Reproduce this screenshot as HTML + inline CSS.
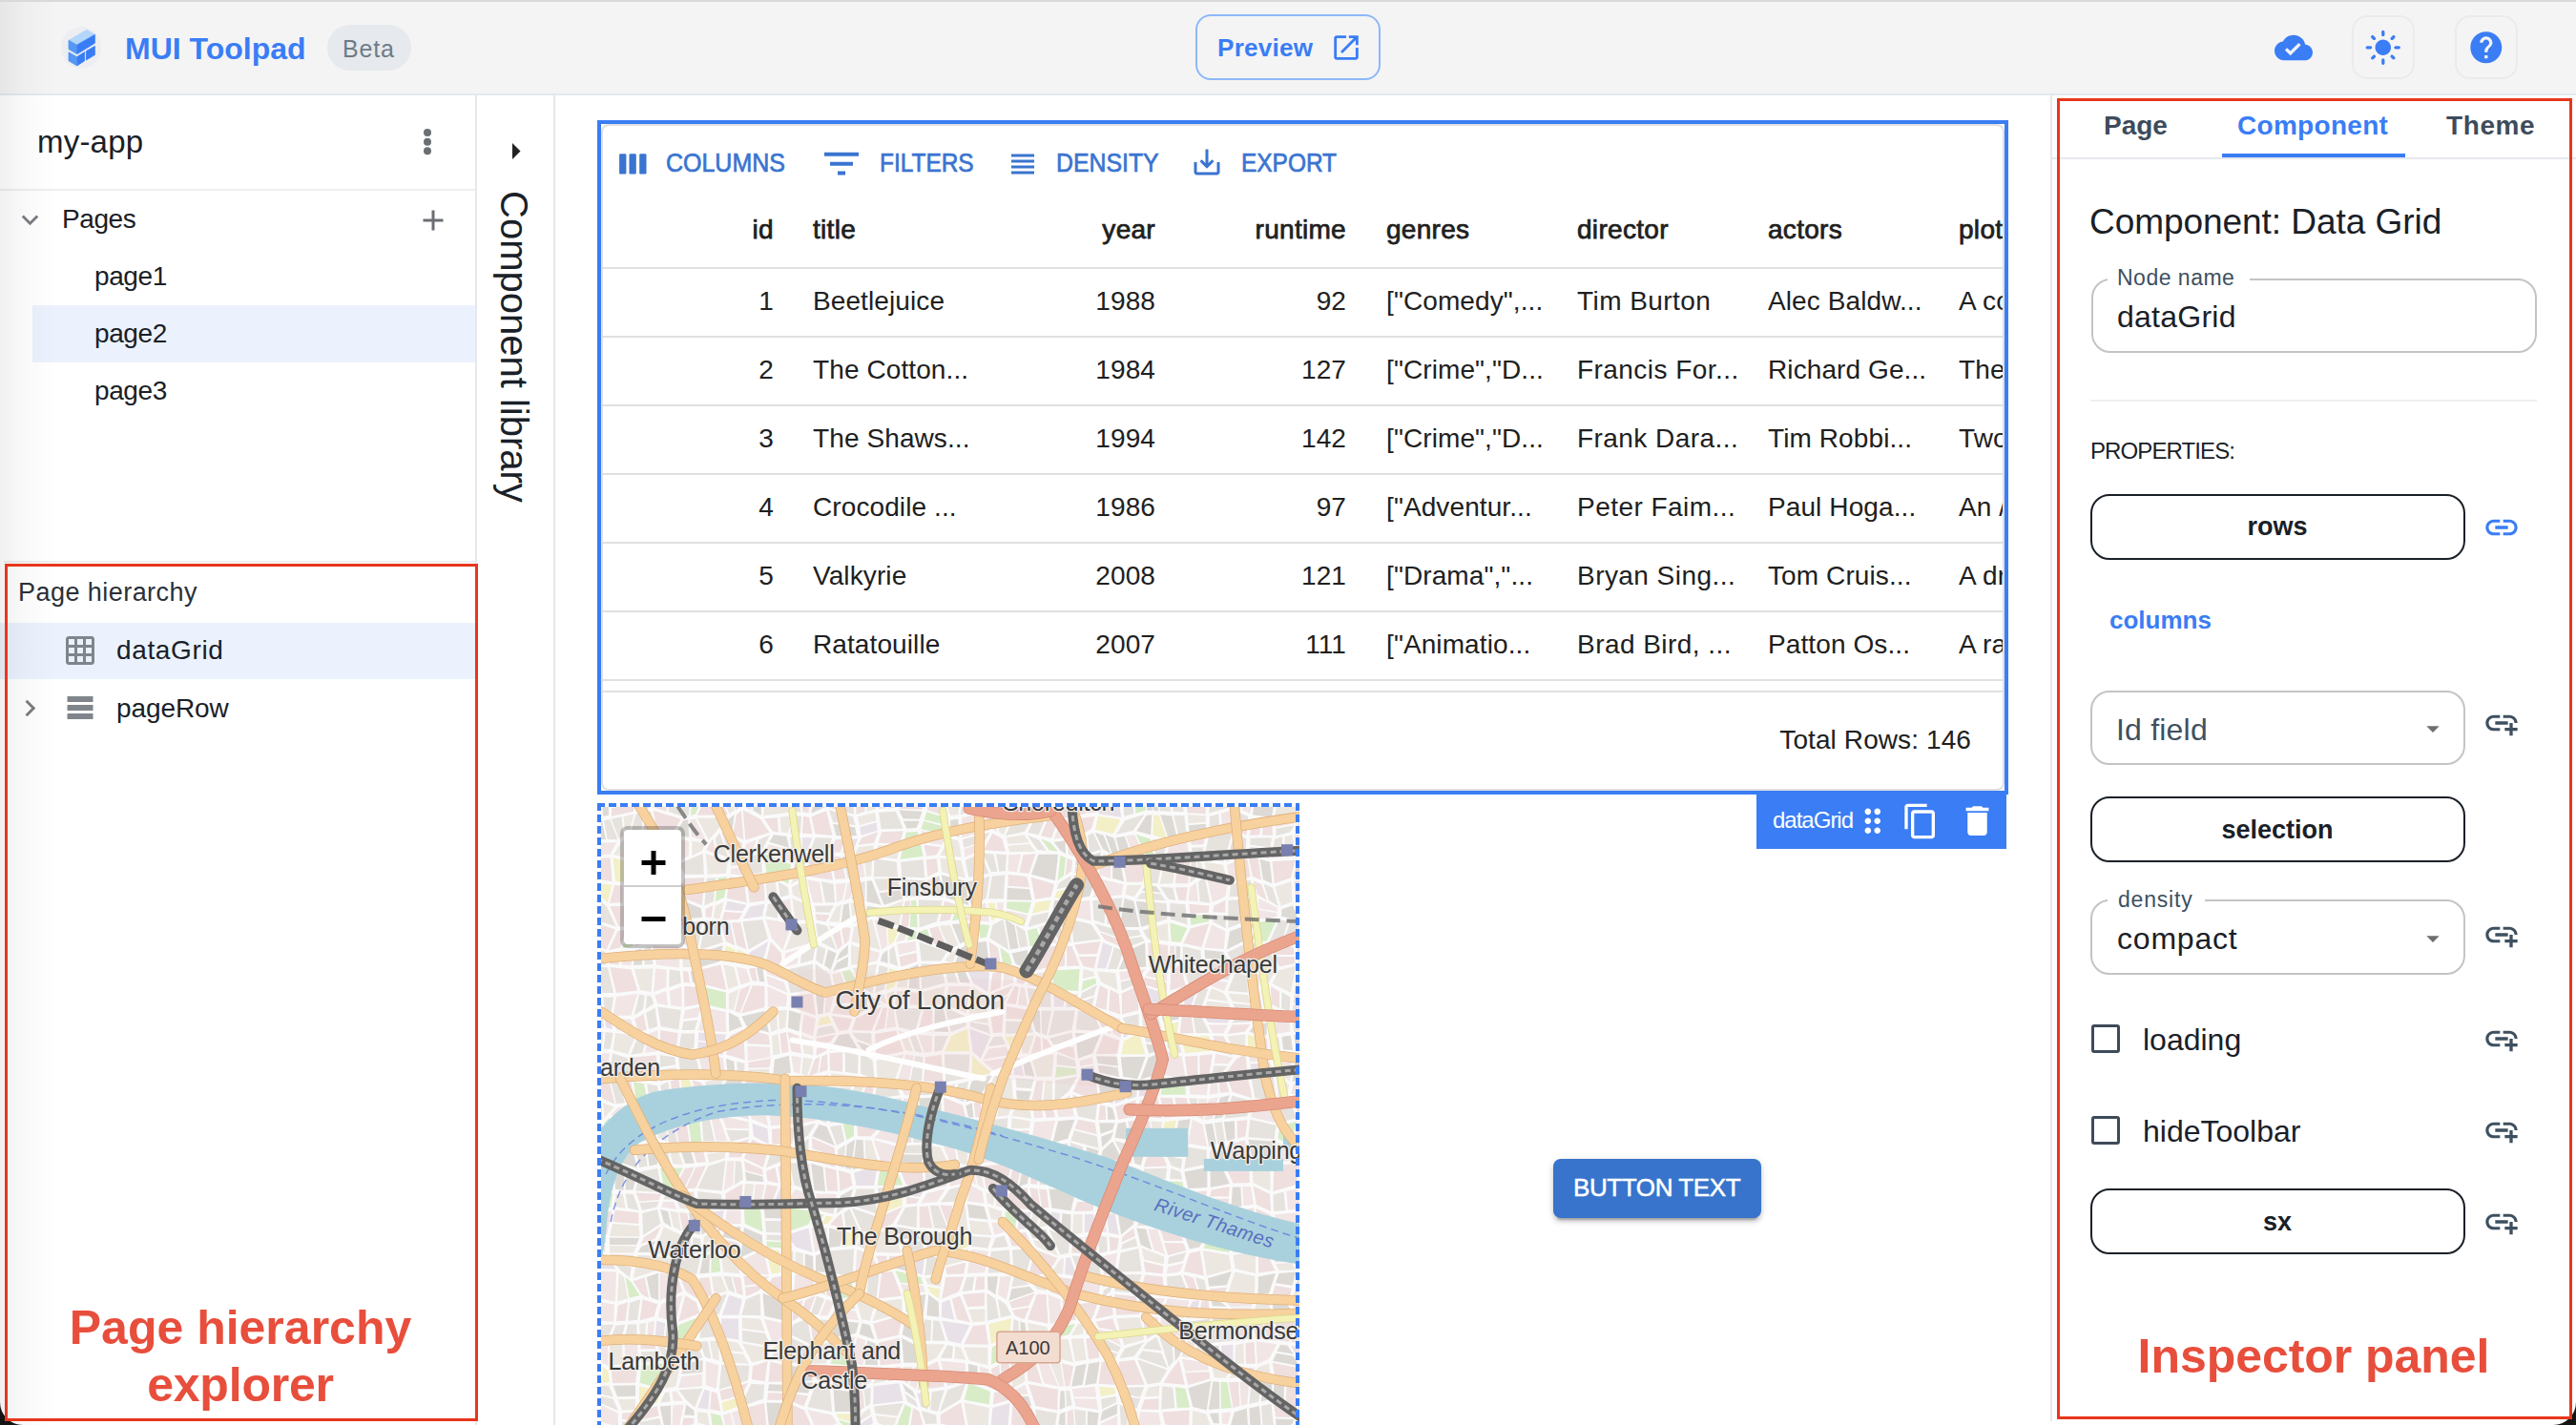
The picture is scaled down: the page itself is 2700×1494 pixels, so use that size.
<!DOCTYPE html>
<html><head><meta charset="utf-8"><style>
html,body{margin:0;padding:0;width:2700px;height:1494px;overflow:hidden;background:#fff;font-family:"Liberation Sans", sans-serif;}
.t{position:absolute;white-space:nowrap;line-height:1;font-family:"Liberation Sans", sans-serif;}
svg{display:block}
</style></head><body>
<div style="position:absolute;left:0px;top:0px;width:2700px;height:2px;background:#d8d9db"></div>
<div style="position:absolute;left:0px;top:2px;width:2700px;height:96px;background:#f4f4f4"></div>
<div style="position:absolute;left:0px;top:98px;width:2700px;height:2px;background:#e5e8ec"></div>
<div style="position:absolute;left:64px;top:28px;width:42px;height:44px;background:#eceef2;border-radius:50%"></div>
<svg style="position:absolute;left:60px;top:25px" width="50" height="50" viewBox="0 0 50 50"><path d="M12.0 17.3 L31.0 6.2 L39.4 11.4 L20.4 22.0 Z" fill="#b3d6fb" stroke="#b3d6fb" stroke-width="0.8" stroke-linejoin="round"/><path d="M12.0 17.3 L20.4 22.0 L20.4 31.6 L12.0 26.6 Z" fill="#5597f4" stroke="#5597f4" stroke-width="0.8" stroke-linejoin="round"/><path d="M20.9 22.0 L39.4 11.4 L39.4 20.3 L20.9 31.6 Z" fill="#387df5" stroke="#387df5" stroke-width="0.8" stroke-linejoin="round"/><path d="M12.0 29.8 L20.4 34.5 L20.4 43.8 L12.0 38.8 Z" fill="#5597f4" stroke="#5597f4" stroke-width="0.8" stroke-linejoin="round"/><path d="M20.9 34.5 L28.6 29.6 L28.6 38.8 L20.9 43.8 Z" fill="#387df5" stroke="#387df5" stroke-width="0.8" stroke-linejoin="round"/><path d="M30.4 28.6 L39.4 23.4 L39.4 32.5 L30.4 37.9 Z" fill="#387df5" stroke="#387df5" stroke-width="0.8" stroke-linejoin="round"/></svg>
<div class="t" style="left:131px;top:34.9px;font-size:32px;font-weight:700;color:#3a7df5;letter-spacing:0px;">MUI Toolpad</div>
<div style="position:absolute;left:343px;top:26px;width:88px;height:48px;background:#e6e9ed;border-radius:24px"></div>
<div class="t" style="left:359px;top:38.8px;font-size:25px;font-weight:400;color:#6e7b88;letter-spacing:0.8px;">Beta</div>
<div style="position:absolute;left:1253px;top:15px;width:194px;height:69px;box-sizing:border-box;border:2px solid #8db8fa;border-radius:16px"></div>
<div class="t" style="left:1276px;top:37.0px;font-size:26px;font-weight:700;color:#3a7df5;letter-spacing:0.3px;">Preview</div>
<svg style="position:absolute;left:1394px;top:33px;" width="34" height="34" viewBox="0 0 24 24" preserveAspectRatio="none"><path fill="#3a7df5" d="M19 19H5V5h7V3H5c-1.11 0-2 .9-2 2v14c0 1.1.89 2 2 2h14c1.1 0 2-.9 2-2v-7h-2v7zM14 3v2h3.59l-9.83 9.83 1.41 1.41L19 6.41V10h2V3h-7z"/></svg>
<svg style="position:absolute;left:2384px;top:30px;" width="40" height="40" viewBox="0 0 24 24" preserveAspectRatio="none"><path fill="#3a7df5" d="M19.35 10.04C18.67 6.59 15.64 4 12 4 9.11 4 6.6 5.64 5.35 8.04 2.34 8.36 0 10.91 0 14c0 3.31 2.69 6 6 6h13c2.76 0 5-2.24 5-5 0-2.64-2.05-4.78-4.65-4.96zM10 17l-3.5-3.5 1.41-1.41L10 14.17 15.18 9l1.41 1.41L10 17z"/></svg>
<div style="position:absolute;left:2465px;top:16px;width:66px;height:67px;box-sizing:border-box;border:2px solid #ebebeb;border-radius:16px"></div>
<svg style="position:absolute;left:2478px;top:30.2px;" width="39.6" height="39.6" viewBox="0 0 24 24" preserveAspectRatio="none"><path fill="#3a7df5" d="M12 7c-2.76 0-5 2.24-5 5s2.24 5 5 5 5-2.24 5-5-2.24-5-5-5zM2 13h2c.55 0 1-.45 1-1s-.45-1-1-1H2c-.55 0-1 .45-1 1s.45 1 1 1zm18 0h2c.55 0 1-.45 1-1s-.45-1-1-1h-2c-.55 0-1 .45-1 1s.45 1 1 1zM11 2v2c0 .55.45 1 1 1s1-.45 1-1V2c0-.55-.45-1-1-1s-1 .45-1 1zm0 18v2c0 .55.45 1 1 1s1-.45 1-1v-2c0-.55-.45-1-1-1s-1 .45-1 1zM5.990 4.580c-.39-.39-1.03-.39-1.41 0-.39.39-.39 1.03 0 1.41l1.06 1.06c.39.39 1.03.39 1.41 0s.39-1.03 0-1.41L5.99 4.58zm12.37 12.37c-.39-.39-1.03-.39-1.41 0-.39.39-.39 1.03 0 1.41l1.06 1.06c.39.39 1.03.39 1.41 0 .39-.39.39-1.03 0-1.41l-1.06-1.06zm1.06-10.96c.39-.39.39-1.03 0-1.41-.39-.39-1.03-.39-1.41 0l-1.06 1.06c-.39.39-.39 1.03 0 1.41s1.03.39 1.41 0l1.06-1.06zM7.05 18.36c.39-.39.39-1.030 0-1.41-.39-.39-1.03-.39-1.41 0l-1.06 1.06c-.39.39-.39 1.03 0 1.41s1.03.39 1.41 0l1.06-1.06z"/></svg>
<div style="position:absolute;left:2573px;top:16px;width:66px;height:67px;box-sizing:border-box;border:2px solid #ebebeb;border-radius:16px"></div>
<svg style="position:absolute;left:2585.7px;top:29.5px;" width="39.6" height="39.6" viewBox="0 0 24 24" preserveAspectRatio="none"><path fill="#3a7df5" d="M12 2C6.48 2 2 6.48 2 12s4.48 10 10 10 10-4.48 10-10S17.52 2 12 2zm1 17h-2v-2h2v2zm2.07-7.75-.9.92C13.45 12.9 13 13.5 13 15h-2v-.5c0-1.1.45-2.1 1.17-2.83l1.24-1.26c.37-.36.59-.86.59-1.41 0-1.1-.9-2-2-2s-2 .9-2 2H8c0-2.21 1.79-4 4-4s4 1.79 4 4c0 .88-.36 1.68-.93 2.25z"/></svg>
<div style="position:absolute;left:498px;top:100px;width:2px;height:1394px;background:#e5e8ec"></div>
<div class="t" style="left:39px;top:132.1px;font-size:33px;font-weight:400;color:#1a2027;letter-spacing:0.2px;">my-app</div>
<svg style="position:absolute;left:440px;top:130px" width="16" height="36"><circle cx="8" cy="8.9" r="4" fill="#6b6e73"/><circle cx="8" cy="18.7" r="4" fill="#6b6e73"/><circle cx="8" cy="28.3" r="4" fill="#6b6e73"/></svg>
<div style="position:absolute;left:0px;top:198px;width:498px;height:2px;background:#eeeeee"></div>
<svg style="position:absolute;left:13.5px;top:212.5px;" width="35" height="35" viewBox="0 0 24 24" preserveAspectRatio="none"><path fill="#7a7d82" d="M16.59 8.59 12 13.17 7.41 8.59 6 10l6 6 6-6z"/></svg>
<div class="t" style="left:65px;top:216.3px;font-size:28px;font-weight:400;color:#1a2027;letter-spacing:-0.4px;">Pages</div>
<svg style="position:absolute;left:436px;top:212.5px;" width="36" height="36" viewBox="0 0 24 24" preserveAspectRatio="none"><path fill="#6b6e73" d="M19 13h-6v6h-2v-6H5v-2h6V5h2v6h6v2z"/></svg>
<div class="t" style="left:99px;top:276.3px;font-size:28px;font-weight:400;color:#1a2027;letter-spacing:-0.4px;">page1</div>
<div style="position:absolute;left:34px;top:320px;width:464px;height:60px;background:#ebf2fd"></div>
<div class="t" style="left:99px;top:336.3px;font-size:28px;font-weight:400;color:#1a2027;letter-spacing:-0.4px;">page2</div>
<div class="t" style="left:99px;top:396.3px;font-size:28px;font-weight:400;color:#1a2027;letter-spacing:-0.4px;">page3</div>
<div style="position:absolute;left:4px;top:588px;width:494px;height:2px;background:#eeeeee"></div>
<div class="t" style="left:19px;top:608.1px;font-size:27px;font-weight:400;color:#2a3038;letter-spacing:0.45px;">Page hierarchy</div>
<div style="position:absolute;left:0px;top:653px;width:498px;height:59px;background:#ebf2fd"></div>
<svg style="position:absolute;left:66px;top:664px;" width="36" height="36" viewBox="0 0 24 24" preserveAspectRatio="none"><path fill="#80858c" d="M20 2H4c-1.1 0-2 .9-2 2v16c0 1.1.9 2 2 2h16c1.1 0 2-.9 2-2V4c0-1.1-.9-2-2-2zM8 20H4v-4h4v4zm0-6H4v-4h4v4zm0-6H4V4h4v4zm6 12h-4v-4h4v4zm0-6h-4v-4h4v4zm0-6h-4V4h4v4zm6 12h-4v-4h4v4zm0-6h-4v-4h4v4zm0-6h-4V4h4v4z"/></svg>
<div class="t" style="left:122px;top:668.3px;font-size:28px;font-weight:400;color:#1a2027;letter-spacing:0.65px;">dataGrid</div>
<svg style="position:absolute;left:13.5px;top:725px;" width="35" height="35" viewBox="0 0 24 24" preserveAspectRatio="none"><path fill="#7a7d82" d="M10 6 8.59 7.41 13.17 12l-4.58 4.59L10 18l6-6z"/></svg>
<svg style="position:absolute;left:66px;top:724px;" width="36" height="36" viewBox="0 0 24 24" preserveAspectRatio="none"><path fill="#80858c" d="M21 8H3V4h18v4zm0 2H3v4h18v-4zm0 6H3v4h18v-4z"/></svg>
<div class="t" style="left:122px;top:729.3px;font-size:28px;font-weight:400;color:#1a2027;letter-spacing:-0.1px;">pageRow</div>
<div class="t" style="left:-148px;width:800px;text-align:center;top:1366.7px;font-size:50px;font-weight:700;color:#e84e3c;letter-spacing:0.0px;">Page hierarchy</div>
<div class="t" style="left:-148px;width:800px;text-align:center;top:1426.7px;font-size:50px;font-weight:700;color:#e84e3c;letter-spacing:-0.2px;">explorer</div>
<div style="position:absolute;left:5px;top:591px;width:496px;height:899px;box-sizing:border-box;border:3px solid #e8361c"></div>
<div style="position:absolute;left:580px;top:100px;width:2px;height:1394px;background:#e5e8ec"></div>
<svg style="position:absolute;left:519.5px;top:137.6px;" width="40.8" height="40.8" viewBox="0 0 24 24" preserveAspectRatio="none"><path fill="#222" d="M10 17l5-5-5-5v10z"/></svg>
<div class="t" style="left:561px;top:200px;font-size:40px;color:#1a2027;transform-origin:0 0;transform:rotate(90deg);line-height:normal">Component library</div>
<div style="position:absolute;left:630px;top:130px;width:1471px;height:699px;box-sizing:border-box;border:2px solid #e0e0e0;border-radius:8px;background:#fff"></div>
<div style="position:absolute;left:626px;top:126px;width:1479px;height:707px;box-sizing:border-box;border:4px solid #3a7df5"></div>
<svg style="position:absolute;left:648px;top:160px" width="32" height="24"><g fill="#3a74d0"><rect x="1.1" y="1.2" width="7.3" height="21.4" rx="1.3"/><rect x="11.5" y="1.2" width="7.3" height="21.4" rx="1.3"/><rect x="22.2" y="1.2" width="7.3" height="21.4" rx="1.3"/></g></svg>
<div class="t" style="left:698px;top:157.6px;font-size:27px;font-weight:400;color:#3a74d0;letter-spacing:0px;-webkit-text-stroke:0.7px #3a74d0;transform:scaleX(0.925);transform-origin:0 0;">COLUMNS</div>
<svg style="position:absolute;left:858px;top:148.3px;" width="48" height="47.4" viewBox="0 0 24 24" preserveAspectRatio="none"><path fill="#3a74d0" d="M10 18h4v-2h-4v2zM3 6v2h18V6H3zm3 7h12v-2H6v2z"/></svg>
<div class="t" style="left:922px;top:157.6px;font-size:27px;font-weight:400;color:#3a74d0;letter-spacing:0px;-webkit-text-stroke:0.7px #3a74d0;transform:scaleX(0.905);transform-origin:0 0;">FILTERS</div>
<svg style="position:absolute;left:1054px;top:154px;" width="36" height="36" viewBox="0 0 24 24" preserveAspectRatio="none"><path fill="#3a74d0" d="M4 15h16v-2H4v2zm0 4h16v-2H4v2zm0-8h16V9H4v2zm0-6v2h16V5H4z"/></svg>
<div class="t" style="left:1107px;top:157.6px;font-size:27px;font-weight:400;color:#3a74d0;letter-spacing:0px;-webkit-text-stroke:0.7px #3a74d0;transform:scaleX(0.92);transform-origin:0 0;">DENSITY</div>
<svg style="position:absolute;left:1247px;top:152px;" width="36" height="36" viewBox="0 0 24 24" preserveAspectRatio="none"><path fill="#3a74d0" d="M19 12v7H5v-7H3v7c0 1.1.9 2 2 2h14c1.1 0 2-.9 2-2v-7h-2zm-6 .67 2.59-2.58L17 11.5l-5 5-5-5 1.41-1.41L11 12.67V3h2z"/></svg>
<div class="t" style="left:1301px;top:157.6px;font-size:27px;font-weight:400;color:#3a74d0;letter-spacing:0px;-webkit-text-stroke:0.7px #3a74d0;transform:scaleX(0.905);transform-origin:0 0;">EXPORT</div>
<div class="t" style="right:1889px;top:226.8px;font-size:28px;font-weight:400;color:#202020;letter-spacing:0.3px;-webkit-text-stroke:0.75px #202020;">id</div>
<div class="t" style="left:852px;top:226.8px;font-size:28px;font-weight:400;color:#202020;letter-spacing:0.3px;-webkit-text-stroke:0.75px #202020;">title</div>
<div class="t" style="right:1489px;top:226.8px;font-size:28px;font-weight:400;color:#202020;letter-spacing:0.3px;-webkit-text-stroke:0.75px #202020;">year</div>
<div class="t" style="right:1289px;top:226.8px;font-size:28px;font-weight:400;color:#202020;letter-spacing:0.3px;-webkit-text-stroke:0.75px #202020;">runtime</div>
<div class="t" style="left:1453px;top:226.8px;font-size:28px;font-weight:400;color:#202020;letter-spacing:0.3px;-webkit-text-stroke:0.75px #202020;">genres</div>
<div class="t" style="left:1653px;top:226.8px;font-size:28px;font-weight:400;color:#202020;letter-spacing:0.3px;-webkit-text-stroke:0.75px #202020;">director</div>
<div class="t" style="left:1853px;top:226.8px;font-size:28px;font-weight:400;color:#202020;letter-spacing:0.3px;-webkit-text-stroke:0.75px #202020;">actors</div>
<div style="position:absolute;left:632px;top:130px;width:1467px;height:697px;overflow:hidden">
<div class="t" style="left:1421px;top:96.8px;font-size:28px;font-weight:400;color:#202020;letter-spacing:0.3px;-webkit-text-stroke:0.75px #202020;">plot</div>
<div class="t" style="left:1421px;top:172.3px;font-size:28px;font-weight:400;color:#202020;letter-spacing:0.1px;">A comedy</div>
<div class="t" style="left:1421px;top:244.3px;font-size:28px;font-weight:400;color:#202020;letter-spacing:0.1px;">The</div>
<div class="t" style="left:1421px;top:316.3px;font-size:28px;font-weight:400;color:#202020;letter-spacing:0.1px;">Two</div>
<div class="t" style="left:1421px;top:388.3px;font-size:28px;font-weight:400;color:#202020;letter-spacing:0.1px;">An /</div>
<div class="t" style="left:1421px;top:460.3px;font-size:28px;font-weight:400;color:#202020;letter-spacing:0.1px;">A dra</div>
<div class="t" style="left:1421px;top:532.3px;font-size:28px;font-weight:400;color:#202020;letter-spacing:0.1px;">A rat</div>
</div>
<div style="position:absolute;left:632px;top:280px;width:1467px;height:2px;background:#e0e0e0"></div>
<div style="position:absolute;left:632px;top:352px;width:1467px;height:2px;background:#e0e0e0"></div>
<div style="position:absolute;left:632px;top:424px;width:1467px;height:2px;background:#e0e0e0"></div>
<div style="position:absolute;left:632px;top:496px;width:1467px;height:2px;background:#e0e0e0"></div>
<div style="position:absolute;left:632px;top:568px;width:1467px;height:2px;background:#e0e0e0"></div>
<div style="position:absolute;left:632px;top:640px;width:1467px;height:2px;background:#e0e0e0"></div>
<div style="position:absolute;left:632px;top:712px;width:1467px;height:2px;background:#e0e0e0"></div>
<div style="position:absolute;left:632px;top:724px;width:1467px;height:2px;background:#e0e0e0"></div>
<div class="t" style="right:1889px;top:302.3px;font-size:28px;font-weight:400;color:#202020;letter-spacing:0.1px;">1</div>
<div class="t" style="left:852px;top:302.3px;font-size:28px;font-weight:400;color:#202020;letter-spacing:0.1px;">Beetlejuice</div>
<div class="t" style="right:1489px;top:302.3px;font-size:28px;font-weight:400;color:#202020;letter-spacing:0.1px;">1988</div>
<div class="t" style="right:1289px;top:302.3px;font-size:28px;font-weight:400;color:#202020;letter-spacing:0.1px;">92</div>
<div class="t" style="left:1453px;top:302.3px;font-size:28px;font-weight:400;color:#202020;letter-spacing:0.1px;">["Comedy",...</div>
<div class="t" style="left:1653px;top:302.3px;font-size:28px;font-weight:400;color:#202020;letter-spacing:0.45px;">Tim Burton</div>
<div class="t" style="left:1853px;top:302.3px;font-size:28px;font-weight:400;color:#202020;letter-spacing:0.1px;">Alec Baldw...</div>
<div class="t" style="right:1889px;top:374.3px;font-size:28px;font-weight:400;color:#202020;letter-spacing:0.1px;">2</div>
<div class="t" style="left:852px;top:374.3px;font-size:28px;font-weight:400;color:#202020;letter-spacing:0.1px;">The Cotton...</div>
<div class="t" style="right:1489px;top:374.3px;font-size:28px;font-weight:400;color:#202020;letter-spacing:0.1px;">1984</div>
<div class="t" style="right:1289px;top:374.3px;font-size:28px;font-weight:400;color:#202020;letter-spacing:0.1px;">127</div>
<div class="t" style="left:1453px;top:374.3px;font-size:28px;font-weight:400;color:#202020;letter-spacing:0.1px;">["Crime","D...</div>
<div class="t" style="left:1653px;top:374.3px;font-size:28px;font-weight:400;color:#202020;letter-spacing:0.45px;">Francis For...</div>
<div class="t" style="left:1853px;top:374.3px;font-size:28px;font-weight:400;color:#202020;letter-spacing:0.1px;">Richard Ge...</div>
<div class="t" style="right:1889px;top:446.3px;font-size:28px;font-weight:400;color:#202020;letter-spacing:0.1px;">3</div>
<div class="t" style="left:852px;top:446.3px;font-size:28px;font-weight:400;color:#202020;letter-spacing:0.1px;">The Shaws...</div>
<div class="t" style="right:1489px;top:446.3px;font-size:28px;font-weight:400;color:#202020;letter-spacing:0.1px;">1994</div>
<div class="t" style="right:1289px;top:446.3px;font-size:28px;font-weight:400;color:#202020;letter-spacing:0.1px;">142</div>
<div class="t" style="left:1453px;top:446.3px;font-size:28px;font-weight:400;color:#202020;letter-spacing:0.1px;">["Crime","D...</div>
<div class="t" style="left:1653px;top:446.3px;font-size:28px;font-weight:400;color:#202020;letter-spacing:0.45px;">Frank Dara...</div>
<div class="t" style="left:1853px;top:446.3px;font-size:28px;font-weight:400;color:#202020;letter-spacing:0.1px;">Tim Robbi...</div>
<div class="t" style="right:1889px;top:518.3px;font-size:28px;font-weight:400;color:#202020;letter-spacing:0.1px;">4</div>
<div class="t" style="left:852px;top:518.3px;font-size:28px;font-weight:400;color:#202020;letter-spacing:0.1px;">Crocodile ...</div>
<div class="t" style="right:1489px;top:518.3px;font-size:28px;font-weight:400;color:#202020;letter-spacing:0.1px;">1986</div>
<div class="t" style="right:1289px;top:518.3px;font-size:28px;font-weight:400;color:#202020;letter-spacing:0.1px;">97</div>
<div class="t" style="left:1453px;top:518.3px;font-size:28px;font-weight:400;color:#202020;letter-spacing:0.1px;">["Adventur...</div>
<div class="t" style="left:1653px;top:518.3px;font-size:28px;font-weight:400;color:#202020;letter-spacing:0.45px;">Peter Faim...</div>
<div class="t" style="left:1853px;top:518.3px;font-size:28px;font-weight:400;color:#202020;letter-spacing:0.1px;">Paul Hoga...</div>
<div class="t" style="right:1889px;top:590.3px;font-size:28px;font-weight:400;color:#202020;letter-spacing:0.1px;">5</div>
<div class="t" style="left:852px;top:590.3px;font-size:28px;font-weight:400;color:#202020;letter-spacing:0.1px;">Valkyrie</div>
<div class="t" style="right:1489px;top:590.3px;font-size:28px;font-weight:400;color:#202020;letter-spacing:0.1px;">2008</div>
<div class="t" style="right:1289px;top:590.3px;font-size:28px;font-weight:400;color:#202020;letter-spacing:0.1px;">121</div>
<div class="t" style="left:1453px;top:590.3px;font-size:28px;font-weight:400;color:#202020;letter-spacing:0.1px;">["Drama","...</div>
<div class="t" style="left:1653px;top:590.3px;font-size:28px;font-weight:400;color:#202020;letter-spacing:0.45px;">Bryan Sing...</div>
<div class="t" style="left:1853px;top:590.3px;font-size:28px;font-weight:400;color:#202020;letter-spacing:0.1px;">Tom Cruis...</div>
<div class="t" style="right:1889px;top:662.3px;font-size:28px;font-weight:400;color:#202020;letter-spacing:0.1px;">6</div>
<div class="t" style="left:852px;top:662.3px;font-size:28px;font-weight:400;color:#202020;letter-spacing:0.1px;">Ratatouille</div>
<div class="t" style="right:1489px;top:662.3px;font-size:28px;font-weight:400;color:#202020;letter-spacing:0.1px;">2007</div>
<div class="t" style="right:1289px;top:662.3px;font-size:28px;font-weight:400;color:#202020;letter-spacing:0.1px;">111</div>
<div class="t" style="left:1453px;top:662.3px;font-size:28px;font-weight:400;color:#202020;letter-spacing:0.1px;">["Animatio...</div>
<div class="t" style="left:1653px;top:662.3px;font-size:28px;font-weight:400;color:#202020;letter-spacing:0.45px;">Brad Bird, ...</div>
<div class="t" style="left:1853px;top:662.3px;font-size:28px;font-weight:400;color:#202020;letter-spacing:0.1px;">Patton Os...</div>
<div class="t" style="right:634px;top:762.3px;font-size:28px;font-weight:400;color:#202020;letter-spacing:0.1px;">Total Rows: 146</div>
<div style="position:absolute;left:1841px;top:833px;width:262px;height:57px;background:#3a7df5"></div>
<div class="t" style="left:1858px;top:847.7px;font-size:24px;font-weight:400;color:#fff;letter-spacing:-1.0px;">dataGrid</div>
<svg style="position:absolute;left:1943px;top:841.2px;" width="39.6" height="39.6" viewBox="0 0 24 24" preserveAspectRatio="none"><path fill="#fff" d="M11 18c0 1.1-.9 2-2 2s-2-.9-2-2 .9-2 2-2 2 .9 2 2zm-2-8c-1.1 0-2 .9-2 2s.9 2 2 2 2-.9 2-2-.9-2-2-2zm0-6c-1.1 0-2 .9-2 2s.9 2 2 2 2-.9 2-2-.9-2-2-2zm6 4c1.1 0 2-.9 2-2s-.9-2-2-2-2 .9-2 2 .9 2 2 2zm0 2c-1.1 0-2 .9-2 2s.9 2 2 2 2-.9 2-2-.9-2-2-2zm0 6c-1.1 0-2 .9-2 2s.9 2 2 2 2-.9 2-2-.9-2-2-2z"/></svg>
<svg style="position:absolute;left:1992.5px;top:840.5px;" width="40" height="40" viewBox="0 0 24 24" preserveAspectRatio="none"><path fill="#fff" d="M16 1H4c-1.1 0-2 .9-2 2v14h2V3h12V1zm3 4H8c-1.1 0-2 .9-2 2v14c0 1.1.9 2 2 2h11c1.1 0 2-.9 2-2V7c0-1.1-.9-2-2-2zm0 16H8V7h11v14z"/></svg>
<svg style="position:absolute;left:2052.2px;top:839.8px;" width="41" height="41" viewBox="0 0 24 24" preserveAspectRatio="none"><path fill="#fff" d="M6 19c0 1.1.9 2 2 2h8c1.1 0 2-.9 2-2V7H6v12zM19 4h-3.5l-1-1h-5l-1 1H5v2h14V4z"/></svg>
<div style="position:absolute;left:1628px;top:1215px;width:218px;height:62px;background:#3874cb;border-radius:8px;box-shadow:0 6px 2px -4px rgba(0,0,0,0.2),0 4px 4px 0 rgba(0,0,0,0.14),0 2px 10px 0 rgba(0,0,0,0.12)"></div>
<div class="t" style="left:1649px;top:1232.0px;font-size:26px;font-weight:400;color:#fff;letter-spacing:-0.4px;-webkit-text-stroke:0.5px #fff;">BUTTON TEXT</div>
<svg style="position:absolute;left:630px;top:846px" width="732" height="648" viewBox="59.88 131.74 1461.07 1293.41"><rect x="0" y="0" width="1700" height="1500" fill="#e9e5e1"/><rect x="0" y="0" width="1700" height="1500" fill="#fafafa"/><g><path fill="#ece7e0" d="M45 111 L59 115 L61 151 L49 153 Z"/><path fill="#dddad6" d="M62 114 L75 117 L76 149 L64 151 Z"/><path fill="#dddad6" d="M50 163 L62 161 L70 200 L49 199 Z"/><path fill="#e6e2de" d="M66 160 L78 158 L95 200 L73 199 Z"/><path fill="#f1e5e5" d="M50 207 L93 206 L78 231 L31 235 Z"/><path fill="#efdfdf" d="M31 240 L79 238 L83 288 L54 283 Z"/><path fill="#f3efc6" d="M55 292 L83 295 L74 332 L55 316 Z"/><path fill="#e6e2de" d="M53 324 L72 341 L91 382 L43 366 Z"/><path fill="#efdfdf" d="M42 373 L90 388 L71 430 L45 421 Z"/><path fill="#e6e2de" d="M45 427 L68 435 L70 446 L39 441 Z"/><path fill="#e6e2de" d="M38 445 L69 450 L70 462 L31 459 Z"/><path fill="#efdfdf" d="M29 465 L49 467 L59 521 L35 521 Z"/><path fill="#e6e2de" d="M53 466 L74 468 L86 521 L63 521 Z"/><path fill="#efdfdf" d="M38 529 L59 530 L62 557 L49 546 Z"/><path fill="#e6e2de" d="M64 530 L86 530 L80 567 L67 557 Z"/><path fill="#efdfdf" d="M49 555 L62 566 L66 594 L50 591 Z"/><path fill="#e8e1e8" d="M67 566 L79 576 L84 597 L70 594 Z"/><path fill="#ece7e0" d="M50 601 L65 603 L61 637 L46 637 Z"/><path fill="#e6e2de" d="M69 603 L85 605 L79 638 L65 638 Z"/><path fill="#e6e2de" d="M44 647 L60 647 L49 693 L28 704 Z"/><path fill="#f1e5e5" d="M63 647 L78 647 L72 683 L53 694 Z"/><path fill="#f1e5e5" d="M30 712 L49 703 L59 743 L35 732 Z"/><path fill="#efdfdf" d="M53 702 L73 693 L89 754 L63 742 Z"/><path fill="#dddad6" d="M35 740 L60 752 L63 785 L53 795 Z"/><path fill="#ece7e0" d="M64 751 L87 760 L75 773 L67 784 Z"/><path fill="#e6e2de" d="M54 805 L63 794 L65 839 L37 845 Z"/><path fill="#d8ecc8" d="M67 793 L77 782 L96 833 L68 838 Z"/><path fill="#efdfdf" d="M38 852 L64 847 L59 877 L43 882 Z"/><path fill="#e6e2de" d="M70 847 L96 840 L82 870 L65 877 Z"/><path fill="#e6e2de" d="M44 891 L81 879 L85 934 L35 937 Z"/><path fill="#d8ecc8" d="M36 943 L85 940 L80 969 L48 983 Z"/><path fill="#efdfdf" d="M49 990 L82 976 L72 1027 L54 1011 Z"/><path fill="#e6e2de" d="M53 1019 L69 1032 L70 1045 L48 1035 Z"/><path fill="#f1e5e5" d="M47 1039 L68 1050 L69 1063 L41 1055 Z"/><path fill="#e8e1e8" d="M40 1060 L69 1069 L91 1099 L34 1097 Z"/><path fill="#f1e5e5" d="M34 1103 L92 1105 L89 1167 L38 1157 Z"/><path fill="#f1e5e5" d="M38 1164 L88 1173 L86 1209 L30 1206 Z"/><path fill="#dddad6" d="M30 1213 L55 1214 L53 1242 L38 1240 Z"/><path fill="#e6e2de" d="M60 1215 L86 1215 L74 1243 L58 1243 Z"/><path fill="#e6e2de" d="M38 1249 L54 1251 L61 1296 L49 1290 Z"/><path fill="#f1e5e5" d="M57 1251 L74 1253 L75 1301 L63 1296 Z"/><path fill="#e6e2de" d="M49 1300 L60 1305 L56 1336 L38 1337 Z"/><path fill="#f3efc6" d="M64 1305 L74 1310 L78 1336 L60 1337 Z"/><path fill="#e6e2de" d="M39 1343 L76 1343 L86 1367 L45 1357 Z"/><path fill="#e6e2de" d="M45 1361 L85 1371 L96 1395 L51 1376 Z"/><path fill="#f1e5e5" d="M49 1379 L95 1400 L96 1429 L57 1418 Z"/><path fill="#f1e5e5" d="M57 1424 L95 1434 L89 1456 L55 1453 Z"/><path fill="#e6e2de" d="M54 1459 L88 1462 L82 1483 L51 1487 Z"/><path fill="#e6e2de" d="M50 1494 L82 1490 L81 1518 L30 1531 Z"/><path fill="#e6e2de" d="M31 1536 L82 1524 L79 1560 L39 1570 Z"/><path fill="#efdfdf" d="M40 1578 L80 1566 L80 1628 L31 1603 Z"/><path fill="#f1e5e5" d="M82 114 L140 105 L133 122 L82 131 Z"/><path fill="#efdfdf" d="M82 134 L134 125 L127 141 L82 151 Z"/><path fill="#e6e2de" d="M81 157 L103 152 L107 191 L98 199 Z"/><path fill="#ece7e0" d="M107 152 L129 146 L119 181 L111 190 Z"/><path fill="#ece7e0" d="M101 208 L119 190 L136 245 L86 231 Z"/><path fill="#f3efc6" d="M85 238 L136 251 L125 288 L90 288 Z"/><path fill="#efdfdf" d="M88 296 L105 296 L105 332 L78 333 Z"/><path fill="#efdfdf" d="M110 296 L127 297 L136 332 L110 332 Z"/><path fill="#efdfdf" d="M79 340 L136 339 L133 380 L97 382 Z"/><path fill="#efdfdf" d="M95 391 L112 389 L100 426 L76 431 Z"/><path fill="#d8ecc8" d="M117 390 L134 387 L126 423 L104 427 Z"/><path fill="#efdfdf" d="M77 438 L98 435 L97 462 L78 460 Z"/><path fill="#f1e5e5" d="M104 435 L125 432 L123 463 L103 462 Z"/><path fill="#efdfdf" d="M78 467 L123 472 L136 516 L92 521 Z"/><path fill="#f1e5e5" d="M92 529 L136 523 L123 568 L85 569 Z"/><path fill="#f1e5e5" d="M86 575 L122 576 L132 605 L92 598 Z"/><path fill="#ece7e0" d="M90 605 L132 611 L116 649 L85 640 Z"/><path fill="#e6e2de" d="M84 647 L115 657 L122 699 L78 685 Z"/><path fill="#e6e2de" d="M77 693 L99 700 L109 751 L92 753 Z"/><path fill="#efdfdf" d="M102 700 L123 708 L129 748 L112 750 Z"/><path fill="#f1e5e5" d="M95 761 L127 756 L133 795 L81 776 Z"/><path fill="#ece7e0" d="M80 781 L132 801 L125 836 L102 832 Z"/><path fill="#dddad6" d="M102 841 L125 844 L135 887 L88 872 Z"/><path fill="#dddad6" d="M85 879 L109 887 L107 933 L90 932 Z"/><path fill="#dddad6" d="M113 888 L135 895 L127 933 L111 933 Z"/><path fill="#ece7e0" d="M91 942 L106 942 L111 972 L88 968 Z"/><path fill="#e6e2de" d="M111 941 L127 942 L139 976 L116 971 Z"/><path fill="#efdfdf" d="M89 975 L138 981 L139 1004 L84 1000 Z"/><path fill="#ece7e0" d="M84 1004 L139 1008 L141 1031 L78 1030 Z"/><path fill="#dddad6" d="M78 1033 L140 1034 L134 1048 L78 1048 Z"/><path fill="#ece7e0" d="M78 1050 L134 1051 L128 1065 L78 1065 Z"/><path fill="#f1e5e5" d="M78 1068 L128 1069 L124 1091 L89 1082 Z"/><path fill="#e6e2de" d="M88 1087 L123 1096 L120 1117 L100 1101 Z"/><path fill="#ece7e0" d="M97 1107 L108 1116 L116 1160 L94 1166 Z"/><path fill="#d8ecc8" d="M111 1116 L123 1126 L141 1154 L119 1159 Z"/><path fill="#efdfdf" d="M95 1175 L116 1168 L111 1207 L92 1208 Z"/><path fill="#e6e2de" d="M120 1169 L142 1162 L136 1205 L116 1207 Z"/><path fill="#e6e2de" d="M91 1217 L110 1215 L104 1240 L79 1245 Z"/><path fill="#e6e2de" d="M116 1215 L134 1214 L135 1237 L110 1241 Z"/><path fill="#ece7e0" d="M78 1252 L104 1249 L105 1298 L78 1301 Z"/><path fill="#f1e5e5" d="M109 1249 L136 1245 L137 1294 L110 1297 Z"/><path fill="#efdfdf" d="M81 1308 L136 1301 L132 1337 L84 1338 Z"/><path fill="#dddad6" d="M85 1343 L132 1342 L132 1365 L94 1366 Z"/><path fill="#ece7e0" d="M95 1372 L132 1371 L131 1393 L104 1394 Z"/><path fill="#efdfdf" d="M104 1400 L131 1398 L131 1415 L104 1413 Z"/><path fill="#e6e2de" d="M104 1418 L131 1420 L132 1437 L104 1431 Z"/><path fill="#f3efc6" d="M101 1437 L132 1443 L116 1466 L89 1483 Z"/><path fill="#ece7e0" d="M90 1490 L117 1475 L127 1526 L89 1517 Z"/><path fill="#e6e2de" d="M88 1524 L126 1533 L122 1573 L87 1559 Z"/><path fill="#ece7e0" d="M87 1565 L119 1578 L125 1589 L87 1594 Z"/><path fill="#dddad6" d="M88 1599 L126 1594 L131 1605 L86 1628 Z"/><path fill="#efdfdf" d="M150 105 L173 96 L167 112 L142 120 Z"/><path fill="#dddad6" d="M143 125 L167 117 L161 133 L136 139 Z"/><path fill="#e6e2de" d="M133 146 L147 143 L145 180 L123 182 Z"/><path fill="#e6e2de" d="M151 143 L164 141 L170 179 L149 180 Z"/><path fill="#dddad6" d="M124 189 L170 187 L165 222 L141 243 Z"/><path fill="#f1e5e5" d="M143 252 L167 230 L173 277 L131 288 Z"/><path fill="#ece7e0" d="M133 293 L173 284 L174 305 L138 311 Z"/><path fill="#efdfdf" d="M139 315 L175 310 L177 330 L144 333 Z"/><path fill="#e8e1e8" d="M143 340 L178 336 L168 383 L140 379 Z"/><path fill="#efdfdf" d="M138 388 L151 389 L145 419 L131 423 Z"/><path fill="#efdfdf" d="M155 390 L168 391 L162 415 L149 419 Z"/><path fill="#dddad6" d="M130 432 L144 428 L146 462 L128 463 Z"/><path fill="#e6e2de" d="M149 428 L163 424 L169 461 L151 462 Z"/><path fill="#ece7e0" d="M129 471 L169 470 L165 519 L142 515 Z"/><path fill="#e6e2de" d="M140 524 L151 526 L148 555 L129 568 Z"/><path fill="#e6e2de" d="M156 526 L165 528 L170 544 L153 555 Z"/><path fill="#efdfdf" d="M130 576 L149 565 L155 598 L138 603 Z"/><path fill="#e6e2de" d="M154 563 L173 552 L178 591 L160 597 Z"/><path fill="#e6e2de" d="M137 613 L156 606 L147 646 L122 650 Z"/><path fill="#f1e5e5" d="M160 606 L179 599 L177 643 L152 646 Z"/><path fill="#efdfdf" d="M122 656 L176 651 L177 707 L129 699 Z"/><path fill="#d8ecc8" d="M128 707 L150 711 L156 744 L133 748 Z"/><path fill="#e6e2de" d="M156 711 L177 715 L183 738 L161 743 Z"/><path fill="#e6e2de" d="M136 754 L183 744 L182 766 L138 773 Z"/><path fill="#ece7e0" d="M138 777 L183 770 L182 792 L140 796 Z"/><path fill="#f1e5e5" d="M140 801 L183 797 L170 823 L131 837 Z"/><path fill="#e6e2de" d="M131 844 L150 838 L157 883 L140 886 Z"/><path fill="#dddad6" d="M154 837 L173 831 L178 879 L161 883 Z"/><path fill="#e6e2de" d="M142 895 L178 888 L187 938 L132 935 Z"/><path fill="#efdfdf" d="M133 939 L186 942 L181 954 L140 957 Z"/><path fill="#e6e2de" d="M140 960 L181 957 L176 969 L146 976 Z"/><path fill="#e6e2de" d="M146 982 L178 974 L184 1004 L148 1028 Z"/><path fill="#efdfdf" d="M150 1032 L185 1010 L173 1035 L143 1047 Z"/><path fill="#dddad6" d="M144 1052 L174 1040 L163 1064 L137 1064 Z"/><path fill="#e6e2de" d="M137 1070 L163 1071 L169 1084 L132 1091 Z"/><path fill="#ece7e0" d="M132 1095 L170 1088 L176 1102 L127 1118 Z"/><path fill="#efdfdf" d="M127 1124 L151 1117 L160 1159 L145 1152 Z"/><path fill="#dddad6" d="M155 1116 L180 1107 L180 1164 L164 1158 Z"/><path fill="#efdfdf" d="M147 1162 L178 1172 L171 1198 L141 1206 Z"/><path fill="#ece7e0" d="M140 1214 L154 1211 L152 1238 L141 1236 Z"/><path fill="#f1e5e5" d="M158 1211 L172 1207 L169 1239 L157 1238 Z"/><path fill="#efdfdf" d="M142 1244 L167 1247 L176 1266 L143 1266 Z"/><path fill="#e6e2de" d="M144 1272 L177 1271 L187 1291 L144 1295 Z"/><path fill="#d8ecc8" d="M144 1302 L188 1296 L188 1350 L141 1337 Z"/><path fill="#f3efc6" d="M140 1344 L186 1356 L177 1378 L139 1392 Z"/><path fill="#efdfdf" d="M140 1397 L177 1385 L181 1406 L140 1415 Z"/><path fill="#e6e2de" d="M140 1419 L182 1411 L187 1432 L140 1438 Z"/><path fill="#efdfdf" d="M141 1441 L187 1436 L179 1453 L132 1454 Z"/><path fill="#efdfdf" d="M132 1457 L179 1456 L171 1473 L124 1469 Z"/><path fill="#ece7e0" d="M123 1474 L172 1479 L187 1523 L133 1526 Z"/><path fill="#efdfdf" d="M132 1535 L158 1532 L147 1570 L127 1573 Z"/><path fill="#e8e1e8" d="M163 1533 L188 1529 L171 1566 L151 1570 Z"/><path fill="#e6e2de" d="M128 1581 L146 1579 L149 1609 L137 1600 Z"/><path fill="#efdfdf" d="M151 1579 L170 1576 L166 1617 L154 1609 Z"/><path fill="#efdfdf" d="M179 97 L197 98 L197 141 L169 132 Z"/><path fill="#e6e2de" d="M202 98 L221 99 L229 151 L201 141 Z"/><path fill="#efdfdf" d="M169 139 L227 157 L208 189 L177 180 Z"/><path fill="#efdfdf" d="M177 186 L206 195 L210 218 L176 203 Z"/><path fill="#ece7e0" d="M175 208 L209 222 L214 247 L174 225 Z"/><path fill="#ece7e0" d="M173 229 L213 252 L228 274 L181 277 Z"/><path fill="#efdfdf" d="M182 282 L227 279 L220 297 L183 304 Z"/><path fill="#dddad6" d="M184 308 L221 301 L213 319 L185 329 Z"/><path fill="#ece7e0" d="M183 337 L198 331 L201 375 L173 383 Z"/><path fill="#e6e2de" d="M202 331 L217 325 L234 367 L206 374 Z"/><path fill="#e6e2de" d="M175 389 L234 373 L223 418 L168 417 Z"/><path fill="#f1e5e5" d="M168 422 L223 424 L224 468 L176 462 Z"/><path fill="#f1e5e5" d="M174 470 L197 472 L196 509 L170 519 Z"/><path fill="#e6e2de" d="M203 472 L225 475 L227 500 L202 509 Z"/><path fill="#f1e5e5" d="M172 526 L196 517 L199 547 L178 543 Z"/><path fill="#f1e5e5" d="M203 517 L228 508 L229 550 L206 547 Z"/><path fill="#e6e2de" d="M178 550 L227 557 L222 598 L185 591 Z"/><path fill="#efdfdf" d="M184 599 L221 605 L216 649 L183 644 Z"/><path fill="#e6e2de" d="M183 651 L214 655 L216 671 L184 676 Z"/><path fill="#ece7e0" d="M184 681 L217 677 L218 693 L184 707 Z"/><path fill="#e6e2de" d="M184 714 L200 707 L206 740 L189 737 Z"/><path fill="#efdfdf" d="M205 706 L222 699 L228 742 L210 739 Z"/><path fill="#f1e5e5" d="M188 746 L206 748 L198 784 L188 789 Z"/><path fill="#efdfdf" d="M210 749 L227 750 L211 778 L201 784 Z"/><path fill="#ece7e0" d="M188 799 L197 793 L197 832 L178 823 Z"/><path fill="#e6e2de" d="M201 793 L211 788 L221 843 L200 832 Z"/><path fill="#e6e2de" d="M177 830 L197 841 L205 879 L182 879 Z"/><path fill="#ece7e0" d="M201 841 L221 852 L231 880 L210 879 Z"/><path fill="#d8ecc8" d="M184 888 L231 887 L209 931 L193 937 Z"/><path fill="#e6e2de" d="M195 944 L207 940 L212 953 L190 953 Z"/><path fill="#f1e5e5" d="M190 958 L212 958 L218 974 L186 969 Z"/><path fill="#dddad6" d="M184 974 L200 978 L207 1011 L191 1001 Z"/><path fill="#ece7e0" d="M204 977 L221 981 L227 1019 L211 1010 Z"/><path fill="#ece7e0" d="M191 1011 L226 1027 L221 1073 L171 1065 Z"/><path fill="#ece7e0" d="M171 1071 L219 1080 L217 1106 L185 1099 Z"/><path fill="#f1e5e5" d="M183 1107 L200 1110 L205 1155 L183 1164 Z"/><path fill="#efdfdf" d="M204 1110 L220 1114 L230 1146 L209 1154 Z"/><path fill="#f1e5e5" d="M186 1172 L230 1153 L216 1209 L179 1199 Z"/><path fill="#e8e1e8" d="M176 1207 L194 1212 L190 1247 L173 1240 Z"/><path fill="#dddad6" d="M198 1212 L215 1217 L210 1255 L194 1248 Z"/><path fill="#ece7e0" d="M173 1248 L191 1257 L207 1290 L191 1288 Z"/><path fill="#dddad6" d="M194 1256 L211 1264 L226 1291 L210 1288 Z"/><path fill="#ece7e0" d="M194 1297 L226 1298 L216 1345 L193 1349 Z"/><path fill="#e6e2de" d="M193 1358 L202 1356 L205 1376 L184 1378 Z"/><path fill="#f1e5e5" d="M208 1355 L218 1355 L231 1375 L211 1375 Z"/><path fill="#dddad6" d="M183 1386 L206 1384 L206 1430 L192 1429 Z"/><path fill="#f1e5e5" d="M210 1384 L233 1382 L223 1430 L209 1430 Z"/><path fill="#efdfdf" d="M192 1439 L205 1439 L198 1470 L179 1471 Z"/><path fill="#efdfdf" d="M209 1439 L221 1440 L222 1471 L203 1471 Z"/><path fill="#d8ecc8" d="M179 1479 L221 1479 L212 1524 L193 1521 Z"/><path fill="#ece7e0" d="M194 1530 L212 1533 L228 1558 L176 1568 Z"/><path fill="#ece7e0" d="M176 1575 L229 1563 L214 1623 L171 1618 Z"/><path fill="#e6e2de" d="M225 99 L248 104 L243 149 L233 150 Z"/><path fill="#d8ecc8" d="M252 104 L275 108 L257 147 L247 149 Z"/><path fill="#dddad6" d="M232 160 L242 158 L244 195 L214 190 Z"/><path fill="#f1e5e5" d="M247 158 L257 157 L280 202 L249 195 Z"/><path fill="#f1e5e5" d="M213 197 L244 203 L243 234 L220 246 Z"/><path fill="#ece7e0" d="M250 203 L279 208 L271 223 L250 234 Z"/><path fill="#e6e2de" d="M223 251 L273 229 L275 273 L235 273 Z"/><path fill="#efdfdf" d="M235 281 L276 280 L271 338 L222 318 Z"/><path fill="#dddad6" d="M221 324 L269 344 L272 363 L240 366 Z"/><path fill="#e6e2de" d="M240 375 L273 370 L262 429 L231 418 Z"/><path fill="#ece7e0" d="M230 426 L260 437 L257 467 L231 467 Z"/><path fill="#efdfdf" d="M231 475 L242 476 L246 500 L233 499 Z"/><path fill="#dddad6" d="M247 475 L259 476 L265 500 L251 499 Z"/><path fill="#efdfdf" d="M234 507 L265 509 L270 544 L234 550 Z"/><path fill="#f1e5e5" d="M236 557 L269 550 L262 572 L232 575 Z"/><path fill="#e6e2de" d="M232 581 L262 578 L255 599 L229 599 Z"/><path fill="#e6e2de" d="M228 606 L256 606 L254 636 L221 649 Z"/><path fill="#e6e2de" d="M222 656 L256 644 L269 701 L226 690 Z"/><path fill="#f3efc6" d="M226 698 L246 704 L253 736 L232 742 Z"/><path fill="#efdfdf" d="M251 703 L270 709 L277 731 L258 736 Z"/><path fill="#efdfdf" d="M232 751 L252 744 L238 779 L215 780 Z"/><path fill="#e6e2de" d="M257 745 L278 738 L267 780 L243 780 Z"/><path fill="#efdfdf" d="M214 787 L238 789 L245 837 L224 843 Z"/><path fill="#d8ecc8" d="M242 788 L266 789 L270 832 L249 837 Z"/><path fill="#dddad6" d="M227 851 L246 846 L255 877 L236 878 Z"/><path fill="#efdfdf" d="M251 845 L271 840 L279 875 L260 876 Z"/><path fill="#efdfdf" d="M235 888 L255 885 L234 930 L214 932 Z"/><path fill="#efdfdf" d="M258 886 L279 882 L258 929 L237 931 Z"/><path fill="#e6e2de" d="M214 939 L254 937 L257 974 L225 972 Z"/><path fill="#efdfdf" d="M224 980 L240 982 L248 1023 L231 1019 Z"/><path fill="#dddad6" d="M243 981 L259 983 L268 1027 L251 1023 Z"/><path fill="#efdfdf" d="M231 1029 L248 1032 L246 1069 L226 1073 Z"/><path fill="#e6e2de" d="M252 1032 L268 1036 L269 1065 L250 1069 Z"/><path fill="#e6e2de" d="M228 1080 L268 1073 L260 1110 L225 1106 Z"/><path fill="#efdfdf" d="M224 1113 L260 1117 L261 1161 L237 1145 Z"/><path fill="#efdfdf" d="M236 1154 L259 1168 L266 1191 L222 1209 Z"/><path fill="#d8ecc8" d="M222 1216 L267 1198 L259 1243 L215 1256 Z"/><path fill="#e6e2de" d="M217 1261 L260 1251 L272 1285 L232 1290 Z"/><path fill="#dddad6" d="M234 1296 L273 1290 L272 1315 L228 1319 Z"/><path fill="#f1e5e5" d="M228 1324 L272 1319 L271 1344 L222 1348 Z"/><path fill="#e6e2de" d="M222 1352 L272 1349 L256 1388 L239 1374 Z"/><path fill="#dddad6" d="M238 1382 L254 1394 L255 1405 L234 1404 Z"/><path fill="#efdfdf" d="M233 1410 L254 1411 L254 1422 L227 1432 Z"/><path fill="#e6e2de" d="M226 1440 L240 1434 L245 1470 L226 1471 Z"/><path fill="#efdfdf" d="M244 1434 L258 1428 L270 1469 L250 1469 Z"/><path fill="#e6e2de" d="M227 1479 L269 1476 L277 1522 L218 1525 Z"/><path fill="#efdfdf" d="M219 1531 L276 1528 L263 1576 L237 1557 Z"/><path fill="#e6e2de" d="M234 1565 L261 1583 L254 1620 L220 1623 Z"/><path fill="#efdfdf" d="M281 109 L302 95 L325 148 L261 149 Z"/><path fill="#ece7e0" d="M261 155 L324 154 L304 179 L285 201 Z"/><path fill="#efdfdf" d="M286 210 L294 198 L300 230 L280 222 Z"/><path fill="#e6e2de" d="M299 198 L308 186 L326 238 L304 229 Z"/><path fill="#ece7e0" d="M279 229 L325 245 L321 271 L283 273 Z"/><path fill="#e6e2de" d="M281 281 L300 280 L295 330 L276 338 Z"/><path fill="#d8ecc8" d="M304 280 L323 278 L318 321 L299 330 Z"/><path fill="#efdfdf" d="M278 346 L294 338 L290 364 L279 362 Z"/><path fill="#ece7e0" d="M299 339 L317 330 L308 366 L295 364 Z"/><path fill="#e6e2de" d="M278 370 L306 376 L315 415 L267 430 Z"/><path fill="#dddad6" d="M269 436 L315 421 L308 455 L264 468 Z"/><path fill="#efdfdf" d="M265 473 L310 462 L322 515 L272 502 Z"/><path fill="#d8ecc8" d="M271 508 L321 520 L321 555 L278 545 Z"/><path fill="#f1e5e5" d="M276 551 L320 561 L322 603 L263 600 Z"/><path fill="#e8e1e8" d="M264 604 L321 608 L318 628 L263 620 Z"/><path fill="#e8e1e8" d="M263 623 L317 631 L314 651 L263 639 Z"/><path fill="#f1e5e5" d="M262 643 L315 657 L319 692 L275 701 Z"/><path fill="#ece7e0" d="M277 707 L319 698 L302 727 L284 730 Z"/><path fill="#efdfdf" d="M284 737 L301 735 L302 751 L278 756 Z"/><path fill="#f1e5e5" d="M279 762 L302 757 L303 775 L272 782 Z"/><path fill="#e6e2de" d="M271 789 L287 786 L297 831 L274 831 Z"/><path fill="#f1e5e5" d="M291 785 L307 782 L324 831 L301 831 Z"/><path fill="#dddad6" d="M278 837 L322 837 L320 850 L282 855 Z"/><path fill="#ece7e0" d="M282 858 L321 854 L318 867 L286 876 Z"/><path fill="#e6e2de" d="M284 883 L320 872 L313 935 L262 930 Z"/><path fill="#e6e2de" d="M262 936 L311 942 L315 970 L264 975 Z"/><path fill="#dddad6" d="M263 982 L288 979 L290 1016 L271 1027 Z"/><path fill="#e8e1e8" d="M293 979 L317 976 L312 1005 L295 1016 Z"/><path fill="#ece7e0" d="M275 1031 L311 1012 L306 1032 L274 1047 Z"/><path fill="#ece7e0" d="M276 1051 L307 1036 L301 1055 L275 1066 Z"/><path fill="#dddad6" d="M273 1074 L287 1068 L286 1107 L266 1109 Z"/><path fill="#d8ecc8" d="M291 1067 L305 1061 L310 1104 L290 1107 Z"/><path fill="#efdfdf" d="M266 1118 L286 1116 L292 1153 L265 1161 Z"/><path fill="#ece7e0" d="M291 1115 L311 1114 L323 1145 L297 1152 Z"/><path fill="#e6e2de" d="M268 1167 L323 1151 L306 1194 L274 1191 Z"/><path fill="#e6e2de" d="M273 1198 L306 1201 L303 1240 L266 1243 Z"/><path fill="#e6e2de" d="M266 1250 L283 1250 L290 1287 L277 1282 Z"/><path fill="#ece7e0" d="M287 1250 L305 1249 L307 1291 L294 1286 Z"/><path fill="#f1e5e5" d="M279 1292 L306 1300 L301 1349 L279 1342 Z"/><path fill="#e8e1e8" d="M276 1351 L287 1354 L284 1392 L262 1389 Z"/><path fill="#efdfdf" d="M291 1355 L302 1359 L310 1396 L288 1392 Z"/><path fill="#ece7e0" d="M262 1397 L282 1400 L287 1427 L262 1420 Z"/><path fill="#d8ecc8" d="M289 1400 L310 1405 L318 1435 L293 1427 Z"/><path fill="#e6e2de" d="M262 1427 L317 1441 L312 1488 L276 1470 Z"/><path fill="#dddad6" d="M275 1477 L311 1495 L303 1526 L283 1521 Z"/><path fill="#ece7e0" d="M282 1530 L303 1535 L307 1573 L268 1577 Z"/><path fill="#f1e5e5" d="M269 1583 L307 1580 L318 1607 L261 1621 Z"/><path fill="#ece7e0" d="M307 94 L328 93 L339 138 L328 146 Z"/><path fill="#efdfdf" d="M331 93 L352 91 L352 130 L342 138 Z"/><path fill="#dddad6" d="M328 156 L339 147 L333 188 L312 178 Z"/><path fill="#efdfdf" d="M343 148 L353 139 L358 201 L336 189 Z"/><path fill="#efdfdf" d="M312 185 L355 207 L354 229 L331 238 Z"/><path fill="#e6e2de" d="M334 244 L355 236 L355 253 L331 255 Z"/><path fill="#f1e5e5" d="M332 261 L355 258 L357 275 L330 272 Z"/><path fill="#efdfdf" d="M328 278 L358 282 L365 332 L323 323 Z"/><path fill="#e8e1e8" d="M324 329 L364 337 L356 350 L319 347 Z"/><path fill="#efdfdf" d="M318 351 L356 354 L348 367 L313 369 Z"/><path fill="#efdfdf" d="M311 375 L330 375 L340 422 L321 413 Z"/><path fill="#efdfdf" d="M333 374 L352 374 L364 430 L344 421 Z"/><path fill="#f3efc6" d="M321 422 L340 430 L337 457 L316 454 Z"/><path fill="#f3efc6" d="M345 430 L363 438 L363 462 L343 458 Z"/><path fill="#ece7e0" d="M316 462 L338 467 L347 505 L326 513 Z"/><path fill="#f1e5e5" d="M343 466 L364 471 L372 497 L352 504 Z"/><path fill="#ece7e0" d="M327 523 L348 513 L337 558 L327 554 Z"/><path fill="#efdfdf" d="M351 514 L373 504 L350 563 L340 559 Z"/><path fill="#dddad6" d="M327 562 L347 572 L355 591 L328 602 Z"/><path fill="#efdfdf" d="M329 611 L357 598 L361 661 L322 650 Z"/><path fill="#dddad6" d="M321 658 L338 664 L340 690 L325 691 Z"/><path fill="#e6e2de" d="M344 664 L360 669 L360 690 L345 690 Z"/><path fill="#dddad6" d="M326 699 L358 697 L347 728 L309 728 Z"/><path fill="#dddad6" d="M307 735 L326 736 L337 779 L310 773 Z"/><path fill="#e8e1e8" d="M331 735 L350 737 L370 786 L342 779 Z"/><path fill="#f1e5e5" d="M312 779 L368 791 L369 805 L322 804 Z"/><path fill="#e6e2de" d="M322 808 L369 809 L369 822 L331 832 Z"/><path fill="#efdfdf" d="M331 838 L370 827 L353 865 L327 865 Z"/><path fill="#f1e5e5" d="M324 873 L338 873 L336 923 L317 934 Z"/><path fill="#e6e2de" d="M341 873 L353 874 L357 911 L339 923 Z"/><path fill="#efdfdf" d="M320 941 L356 920 L352 968 L322 968 Z"/><path fill="#f1e5e5" d="M323 976 L352 975 L353 1004 L319 1005 Z"/><path fill="#dddad6" d="M319 1012 L352 1010 L349 1040 L315 1031 Z"/><path fill="#efdfdf" d="M314 1036 L348 1045 L346 1075 L311 1056 Z"/><path fill="#ece7e0" d="M309 1060 L345 1082 L350 1109 L316 1105 Z"/><path fill="#e6e2de" d="M316 1113 L332 1115 L340 1149 L327 1143 Z"/><path fill="#efdfdf" d="M335 1115 L352 1117 L357 1154 L344 1149 Z"/><path fill="#e8e1e8" d="M328 1153 L355 1162 L348 1195 L313 1195 Z"/><path fill="#e8e1e8" d="M312 1202 L347 1203 L348 1247 L310 1241 Z"/><path fill="#ece7e0" d="M311 1247 L346 1253 L358 1273 L312 1268 Z"/><path fill="#ece7e0" d="M312 1272 L358 1277 L369 1297 L313 1294 Z"/><path fill="#e6e2de" d="M312 1299 L370 1301 L367 1332 L307 1351 Z"/><path fill="#efdfdf" d="M308 1354 L368 1337 L355 1361 L312 1374 Z"/><path fill="#f3efc6" d="M313 1378 L356 1365 L344 1387 L316 1397 Z"/><path fill="#f1e5e5" d="M315 1404 L330 1400 L338 1433 L322 1434 Z"/><path fill="#f1e5e5" d="M333 1399 L348 1394 L359 1432 L342 1433 Z"/><path fill="#e6e2de" d="M323 1444 L339 1442 L335 1483 L317 1488 Z"/><path fill="#e6e2de" d="M343 1442 L359 1441 L357 1479 L339 1483 Z"/><path fill="#e6e2de" d="M317 1497 L334 1492 L334 1530 L309 1527 Z"/><path fill="#e6e2de" d="M339 1492 L357 1488 L366 1533 L339 1530 Z"/><path fill="#dddad6" d="M309 1534 L364 1540 L353 1568 L314 1573 Z"/><path fill="#ece7e0" d="M315 1579 L354 1575 L367 1608 L326 1605 Z"/><path fill="#f1e5e5" d="M356 91 L373 95 L374 139 L357 130 Z"/><path fill="#dddad6" d="M377 95 L395 99 L395 149 L378 139 Z"/><path fill="#efdfdf" d="M357 138 L393 157 L412 185 L362 201 Z"/><path fill="#f1e5e5" d="M363 209 L385 200 L376 225 L361 229 Z"/><path fill="#e6e2de" d="M390 200 L413 190 L397 221 L381 226 Z"/><path fill="#e6e2de" d="M362 236 L395 230 L397 269 L364 274 Z"/><path fill="#efdfdf" d="M364 282 L399 277 L403 328 L371 332 Z"/><path fill="#e8e1e8" d="M372 340 L402 335 L397 361 L357 366 Z"/><path fill="#e6e2de" d="M356 372 L398 368 L409 407 L369 430 Z"/><path fill="#e8e1e8" d="M371 436 L410 413 L397 458 L369 462 Z"/><path fill="#efdfdf" d="M369 470 L382 469 L387 497 L376 495 Z"/><path fill="#dddad6" d="M385 468 L398 467 L402 498 L391 497 Z"/><path fill="#efdfdf" d="M377 505 L402 507 L402 551 L353 564 Z"/><path fill="#dddad6" d="M354 570 L402 559 L411 604 L364 591 Z"/><path fill="#efdfdf" d="M363 596 L410 609 L413 629 L366 627 Z"/><path fill="#f1e5e5" d="M366 632 L413 634 L414 655 L367 663 Z"/><path fill="#efdfdf" d="M368 666 L415 658 L412 677 L368 678 Z"/><path fill="#ece7e0" d="M368 681 L412 680 L411 698 L367 693 Z"/><path fill="#efdfdf" d="M366 698 L411 703 L404 749 L355 730 Z"/><path fill="#f1e5e5" d="M354 736 L402 756 L409 799 L376 785 Z"/><path fill="#e8e1e8" d="M376 794 L408 805 L411 838 L379 821 Z"/><path fill="#efdfdf" d="M376 828 L410 844 L399 886 L359 867 Z"/><path fill="#efdfdf" d="M359 873 L397 890 L399 902 L362 892 Z"/><path fill="#dddad6" d="M361 895 L398 905 L400 916 L364 914 Z"/><path fill="#ece7e0" d="M361 920 L380 921 L374 963 L357 967 Z"/><path fill="#f1e5e5" d="M383 921 L402 922 L395 960 L378 964 Z"/><path fill="#d8ecc8" d="M359 975 L393 969 L398 1021 L361 1004 Z"/><path fill="#dddad6" d="M359 1012 L397 1028 L398 1052 L352 1075 Z"/><path fill="#f1e5e5" d="M354 1081 L399 1058 L411 1111 L357 1109 Z"/><path fill="#efdfdf" d="M358 1114 L411 1115 L400 1128 L361 1133 Z"/><path fill="#efdfdf" d="M361 1137 L401 1132 L390 1144 L363 1156 Z"/><path fill="#e6e2de" d="M363 1162 L392 1150 L394 1196 L354 1195 Z"/><path fill="#ece7e0" d="M355 1201 L393 1203 L403 1229 L355 1223 Z"/><path fill="#e6e2de" d="M355 1227 L403 1233 L414 1260 L356 1250 Z"/><path fill="#ece7e0" d="M355 1254 L413 1265 L407 1286 L376 1295 Z"/><path fill="#efdfdf" d="M377 1302 L408 1292 L403 1334 L375 1330 Z"/><path fill="#e6e2de" d="M374 1339 L402 1341 L399 1371 L352 1386 Z"/><path fill="#efdfdf" d="M353 1392 L401 1379 L407 1439 L365 1432 Z"/><path fill="#e6e2de" d="M364 1440 L383 1444 L383 1472 L361 1479 Z"/><path fill="#ece7e0" d="M389 1444 L407 1447 L410 1466 L389 1472 Z"/><path fill="#e6e2de" d="M363 1486 L411 1473 L405 1514 L371 1533 Z"/><path fill="#e6e2de" d="M373 1540 L406 1521 L410 1567 L361 1568 Z"/><path fill="#e6e2de" d="M361 1572 L409 1573 L413 1596 L369 1589 Z"/><path fill="#e6e2de" d="M368 1593 L412 1600 L416 1623 L376 1609 Z"/><path fill="#ece7e0" d="M401 98 L441 99 L461 142 L400 150 Z"/><path fill="#efdfdf" d="M401 156 L429 154 L431 185 L418 182 Z"/><path fill="#ece7e0" d="M434 153 L462 149 L451 186 L437 184 Z"/><path fill="#dddad6" d="M421 190 L448 193 L453 217 L412 205 Z"/><path fill="#f1e5e5" d="M411 210 L452 221 L458 247 L403 226 Z"/><path fill="#d8ecc8" d="M401 230 L457 252 L452 293 L406 271 Z"/><path fill="#ece7e0" d="M403 277 L425 289 L429 321 L408 327 Z"/><path fill="#e6e2de" d="M431 289 L451 300 L453 316 L434 321 Z"/><path fill="#e6e2de" d="M409 336 L429 330 L429 365 L404 360 Z"/><path fill="#f1e5e5" d="M434 330 L455 324 L460 370 L434 364 Z"/><path fill="#f1e5e5" d="M404 367 L459 376 L440 431 L417 406 Z"/><path fill="#efdfdf" d="M415 414 L437 438 L438 466 L404 459 Z"/><path fill="#f1e5e5" d="M404 465 L436 472 L443 494 L407 481 Z"/><path fill="#f1e5e5" d="M406 485 L442 498 L450 521 L409 503 Z"/><path fill="#f1e5e5" d="M408 507 L449 526 L447 549 L409 551 Z"/><path fill="#ece7e0" d="M408 559 L427 558 L429 598 L416 603 Z"/><path fill="#ece7e0" d="M431 558 L449 557 L446 593 L433 598 Z"/><path fill="#ece7e0" d="M417 612 L430 607 L435 648 L420 651 Z"/><path fill="#efdfdf" d="M434 607 L447 603 L453 644 L438 647 Z"/><path fill="#dddad6" d="M423 660 L453 652 L457 688 L419 696 Z"/><path fill="#efdfdf" d="M417 705 L436 700 L427 740 L409 748 Z"/><path fill="#e6e2de" d="M440 700 L458 695 L449 732 L431 741 Z"/><path fill="#f1e5e5" d="M410 756 L448 742 L464 796 L415 799 Z"/><path fill="#efdfdf" d="M417 806 L464 803 L460 836 L418 838 Z"/><path fill="#e6e2de" d="M418 845 L460 842 L447 869 L405 887 Z"/><path fill="#efdfdf" d="M405 894 L424 886 L431 919 L408 914 Z"/><path fill="#efdfdf" d="M430 885 L450 877 L460 924 L436 918 Z"/><path fill="#efdfdf" d="M406 922 L430 926 L417 960 L399 961 Z"/><path fill="#e8e1e8" d="M435 928 L459 931 L441 960 L422 961 Z"/><path fill="#dddad6" d="M400 967 L437 968 L438 993 L403 992 Z"/><path fill="#e6e2de" d="M403 998 L438 998 L439 1023 L405 1022 Z"/><path fill="#e6e2de" d="M406 1027 L438 1028 L449 1040 L406 1038 Z"/><path fill="#d8ecc8" d="M406 1041 L449 1043 L460 1056 L407 1053 Z"/><path fill="#f3efc6" d="M405 1058 L432 1060 L436 1106 L417 1109 Z"/><path fill="#ece7e0" d="M436 1060 L463 1062 L460 1103 L441 1106 Z"/><path fill="#efdfdf" d="M419 1117 L459 1110 L456 1164 L400 1144 Z"/><path fill="#dddad6" d="M398 1149 L455 1170 L454 1209 L402 1197 Z"/><path fill="#f1e5e5" d="M401 1203 L453 1215 L446 1234 L420 1258 Z"/><path fill="#f3efc6" d="M423 1262 L448 1240 L448 1266 L419 1272 Z"/><path fill="#e8e1e8" d="M419 1277 L448 1270 L450 1295 L416 1287 Z"/><path fill="#efdfdf" d="M414 1293 L450 1301 L442 1335 L410 1335 Z"/><path fill="#dddad6" d="M411 1340 L441 1341 L442 1355 L409 1354 Z"/><path fill="#efdfdf" d="M409 1358 L442 1359 L444 1373 L408 1373 Z"/><path fill="#dddad6" d="M406 1378 L446 1379 L446 1427 L412 1439 Z"/><path fill="#e6e2de" d="M414 1447 L428 1442 L431 1473 L417 1464 Z"/><path fill="#dddad6" d="M432 1441 L447 1436 L451 1481 L436 1473 Z"/><path fill="#e8e1e8" d="M417 1473 L449 1489 L449 1535 L413 1514 Z"/><path fill="#ece7e0" d="M411 1521 L428 1533 L436 1573 L416 1566 Z"/><path fill="#f1e5e5" d="M432 1533 L450 1544 L460 1580 L440 1572 Z"/><path fill="#e6e2de" d="M418 1573 L458 1585 L457 1601 L422 1596 Z"/><path fill="#efdfdf" d="M421 1601 L457 1605 L455 1621 L424 1623 Z"/><path fill="#e6e2de" d="M446 99 L471 106 L478 143 L466 140 Z"/><path fill="#efdfdf" d="M475 106 L498 112 L494 144 L482 142 Z"/><path fill="#e6e2de" d="M466 150 L479 151 L477 187 L455 186 Z"/><path fill="#efdfdf" d="M483 151 L495 153 L502 188 L481 187 Z"/><path fill="#e6e2de" d="M455 195 L477 196 L476 234 L462 245 Z"/><path fill="#e8e1e8" d="M481 196 L502 196 L492 221 L480 234 Z"/><path fill="#dddad6" d="M466 250 L491 230 L486 252 L461 270 Z"/><path fill="#f1e5e5" d="M463 274 L488 257 L484 279 L458 293 Z"/><path fill="#ece7e0" d="M459 300 L486 285 L499 334 L461 316 Z"/><path fill="#ece7e0" d="M460 323 L498 340 L502 367 L466 370 Z"/><path fill="#ece7e0" d="M466 378 L503 374 L508 413 L445 432 Z"/><path fill="#f1e5e5" d="M445 438 L474 429 L470 460 L444 466 Z"/><path fill="#e6e2de" d="M480 429 L509 420 L503 452 L477 459 Z"/><path fill="#e6e2de" d="M445 473 L503 460 L503 515 L456 521 Z"/><path fill="#efdfdf" d="M458 527 L503 522 L509 568 L456 550 Z"/><path fill="#dddad6" d="M453 557 L478 565 L474 602 L451 594 Z"/><path fill="#f1e5e5" d="M484 566 L509 575 L503 611 L480 603 Z"/><path fill="#efdfdf" d="M450 602 L474 611 L479 647 L458 643 Z"/><path fill="#ece7e0" d="M479 611 L502 619 L504 651 L484 647 Z"/><path fill="#f1e5e5" d="M458 652 L479 656 L475 690 L463 686 Z"/><path fill="#ece7e0" d="M483 656 L503 659 L491 694 L479 690 Z"/><path fill="#f1e5e5" d="M465 694 L487 701 L497 715 L460 712 Z"/><path fill="#efdfdf" d="M460 716 L497 719 L506 735 L455 735 Z"/><path fill="#f1e5e5" d="M454 740 L508 740 L510 788 L470 795 Z"/><path fill="#e6e2de" d="M471 803 L509 794 L493 819 L467 835 Z"/><path fill="#e6e2de" d="M467 843 L494 826 L494 869 L455 869 Z"/><path fill="#e6e2de" d="M454 876 L473 877 L482 929 L464 923 Z"/><path fill="#ece7e0" d="M476 877 L496 878 L502 935 L485 929 Z"/><path fill="#f1e5e5" d="M466 932 L500 942 L508 974 L446 963 Z"/><path fill="#d8ecc8" d="M445 968 L507 979 L493 1006 L446 1022 Z"/><path fill="#e8e1e8" d="M447 1028 L494 1013 L502 1064 L468 1053 Z"/><path fill="#ece7e0" d="M467 1062 L483 1067 L482 1103 L465 1103 Z"/><path fill="#dddad6" d="M487 1067 L503 1072 L504 1104 L486 1103 Z"/><path fill="#f1e5e5" d="M466 1111 L503 1112 L507 1147 L462 1164 Z"/><path fill="#efdfdf" d="M462 1173 L482 1163 L474 1200 L460 1208 Z"/><path fill="#efdfdf" d="M487 1164 L508 1154 L494 1193 L478 1201 Z"/><path fill="#e6e2de" d="M461 1215 L492 1202 L500 1257 L455 1235 Z"/><path fill="#e6e2de" d="M453 1240 L499 1263 L488 1295 L458 1295 Z"/><path fill="#dddad6" d="M458 1302 L487 1303 L503 1332 L449 1336 Z"/><path fill="#dddad6" d="M450 1340 L503 1336 L493 1359 L452 1355 Z"/><path fill="#efdfdf" d="M451 1359 L493 1364 L484 1386 L454 1374 Z"/><path fill="#efdfdf" d="M452 1379 L485 1394 L506 1441 L453 1428 Z"/><path fill="#f1e5e5" d="M452 1434 L505 1447 L502 1475 L457 1482 Z"/><path fill="#e8e1e8" d="M455 1490 L478 1486 L473 1529 L453 1535 Z"/><path fill="#efdfdf" d="M482 1486 L504 1482 L496 1522 L477 1529 Z"/><path fill="#e6e2de" d="M456 1542 L495 1531 L507 1565 L465 1580 Z"/><path fill="#ece7e0" d="M465 1588 L484 1579 L475 1617 L462 1618 Z"/><path fill="#ece7e0" d="M488 1580 L509 1571 L494 1616 L479 1618 Z"/><path fill="#dddad6" d="M505 111 L555 94 L530 131 L500 145 Z"/><path fill="#efdfdf" d="M500 152 L531 140 L544 191 L508 188 Z"/><path fill="#e6e2de" d="M508 196 L543 197 L534 226 L498 224 Z"/><path fill="#efdfdf" d="M497 230 L534 233 L545 285 L492 277 Z"/><path fill="#f1e5e5" d="M491 284 L517 289 L524 333 L503 332 Z"/><path fill="#e6e2de" d="M521 288 L546 293 L549 332 L529 332 Z"/><path fill="#e6e2de" d="M507 339 L547 338 L538 353 L509 352 Z"/><path fill="#efdfdf" d="M508 356 L538 358 L530 372 L511 369 Z"/><path fill="#e6e2de" d="M509 375 L532 380 L552 431 L515 412 Z"/><path fill="#e6e2de" d="M513 421 L530 429 L523 462 L509 452 Z"/><path fill="#dddad6" d="M535 430 L552 438 L540 473 L527 463 Z"/><path fill="#e6e2de" d="M508 460 L538 482 L547 522 L510 515 Z"/><path fill="#dddad6" d="M509 523 L527 527 L524 564 L514 566 Z"/><path fill="#f1e5e5" d="M530 527 L547 530 L538 561 L528 564 Z"/><path fill="#f3efc6" d="M517 574 L535 569 L542 584 L513 590 Z"/><path fill="#e6e2de" d="M514 595 L543 589 L551 604 L509 613 Z"/><path fill="#efdfdf" d="M510 616 L551 608 L540 623 L510 632 Z"/><path fill="#efdfdf" d="M511 636 L541 627 L530 642 L510 652 Z"/><path fill="#efdfdf" d="M507 660 L518 654 L513 688 L495 694 Z"/><path fill="#efdfdf" d="M522 654 L533 648 L534 682 L516 688 Z"/><path fill="#d8ecc8" d="M495 702 L513 697 L521 738 L511 732 Z"/><path fill="#f1e5e5" d="M517 697 L535 691 L535 742 L524 737 Z"/><path fill="#f1e5e5" d="M514 741 L532 750 L533 768 L516 761 Z"/><path fill="#e6e2de" d="M515 768 L532 775 L532 793 L517 788 Z"/><path fill="#dddad6" d="M516 796 L532 801 L549 841 L502 821 Z"/><path fill="#efdfdf" d="M501 825 L548 845 L550 863 L502 847 Z"/><path fill="#efdfdf" d="M501 851 L549 867 L550 885 L502 872 Z"/><path fill="#dddad6" d="M499 877 L524 885 L529 936 L506 934 Z"/><path fill="#efdfdf" d="M528 885 L552 892 L555 936 L533 935 Z"/><path fill="#f1e5e5" d="M509 941 L553 942 L549 961 L513 957 Z"/><path fill="#e6e2de" d="M512 961 L549 965 L546 984 L516 976 Z"/><path fill="#d8ecc8" d="M512 982 L526 985 L515 1004 L501 1006 Z"/><path fill="#f3efc6" d="M531 987 L545 990 L534 1004 L520 1006 Z"/><path fill="#f1e5e5" d="M500 1013 L532 1013 L531 1054 L507 1063 Z"/><path fill="#dddad6" d="M509 1071 L532 1062 L539 1107 L509 1104 Z"/><path fill="#efdfdf" d="M508 1113 L523 1114 L529 1153 L513 1145 Z"/><path fill="#efdfdf" d="M526 1114 L541 1116 L549 1160 L532 1153 Z"/><path fill="#e6e2de" d="M511 1155 L527 1161 L514 1194 L498 1194 Z"/><path fill="#f1e5e5" d="M531 1162 L547 1168 L534 1196 L518 1196 Z"/><path fill="#efdfdf" d="M497 1202 L514 1204 L523 1250 L504 1256 Z"/><path fill="#e6e2de" d="M517 1204 L534 1206 L544 1243 L526 1249 Z"/><path fill="#ece7e0" d="M508 1262 L543 1249 L537 1271 L501 1278 Z"/><path fill="#ece7e0" d="M502 1282 L537 1275 L531 1296 L495 1298 Z"/><path fill="#e6e2de" d="M495 1303 L532 1303 L539 1343 L511 1330 Z"/><path fill="#e6e2de" d="M509 1339 L539 1351 L543 1397 L492 1387 Z"/><path fill="#f1e5e5" d="M492 1393 L542 1404 L554 1421 L512 1440 Z"/><path fill="#f1e5e5" d="M512 1449 L531 1438 L528 1477 L509 1474 Z"/><path fill="#e6e2de" d="M536 1438 L556 1427 L552 1481 L532 1478 Z"/><path fill="#efdfdf" d="M509 1482 L549 1489 L537 1512 L502 1523 Z"/><path fill="#efdfdf" d="M502 1530 L538 1520 L542 1564 L514 1562 Z"/><path fill="#e6e2de" d="M512 1571 L526 1572 L522 1621 L497 1617 Z"/><path fill="#ece7e0" d="M530 1572 L544 1573 L551 1625 L526 1621 Z"/><path fill="#e6e2de" d="M561 96 L585 98 L589 147 L537 133 Z"/><path fill="#e6e2de" d="M537 138 L587 152 L592 170 L545 163 Z"/><path fill="#dddad6" d="M545 167 L591 174 L595 192 L552 192 Z"/><path fill="#efdfdf" d="M550 200 L570 198 L560 227 L541 226 Z"/><path fill="#e8e1e8" d="M576 199 L597 198 L585 229 L565 228 Z"/><path fill="#efdfdf" d="M540 234 L561 236 L572 282 L550 283 Z"/><path fill="#e6e2de" d="M565 235 L585 238 L599 281 L576 281 Z"/><path fill="#f1e5e5" d="M551 293 L573 291 L564 327 L553 332 Z"/><path fill="#f1e5e5" d="M576 291 L598 288 L580 323 L568 328 Z"/><path fill="#ece7e0" d="M552 341 L563 336 L558 373 L537 372 Z"/><path fill="#dddad6" d="M567 337 L578 333 L582 376 L562 374 Z"/><path fill="#efdfdf" d="M537 380 L558 383 L565 421 L555 430 Z"/><path fill="#efdfdf" d="M562 382 L582 385 L578 411 L569 420 Z"/><path fill="#dddad6" d="M560 436 L577 420 L576 440 L552 453 Z"/><path fill="#dddad6" d="M553 458 L577 445 L576 466 L545 475 Z"/><path fill="#ece7e0" d="M544 482 L560 478 L574 517 L551 521 Z"/><path fill="#d8ecc8" d="M564 476 L581 472 L602 512 L578 516 Z"/><path fill="#efdfdf" d="M555 527 L601 518 L593 541 L549 544 Z"/><path fill="#efdfdf" d="M549 548 L593 546 L585 569 L543 564 Z"/><path fill="#efdfdf" d="M542 569 L585 575 L577 598 L558 601 Z"/><path fill="#dddad6" d="M558 609 L578 606 L596 636 L539 641 Z"/><path fill="#efdfdf" d="M538 647 L565 645 L565 686 L539 683 Z"/><path fill="#e6e2de" d="M570 645 L598 642 L597 690 L571 686 Z"/><path fill="#ece7e0" d="M541 689 L595 695 L585 713 L541 715 Z"/><path fill="#ece7e0" d="M541 719 L584 718 L574 735 L540 744 Z"/><path fill="#efdfdf" d="M541 749 L575 740 L580 761 L540 769 Z"/><path fill="#f1e5e5" d="M540 774 L581 765 L586 786 L539 794 Z"/><path fill="#e6e2de" d="M539 801 L562 797 L569 831 L553 840 Z"/><path fill="#d8ecc8" d="M566 796 L589 791 L589 820 L574 829 Z"/><path fill="#e6e2de" d="M555 849 L571 839 L568 887 L556 883 Z"/><path fill="#dddad6" d="M574 839 L591 828 L583 890 L571 887 Z"/><path fill="#efdfdf" d="M557 892 L581 899 L586 924 L560 936 Z"/><path fill="#dddad6" d="M561 945 L587 931 L577 964 L552 983 Z"/><path fill="#efdfdf" d="M552 991 L563 982 L567 1013 L539 1006 Z"/><path fill="#e6e2de" d="M568 981 L580 973 L601 1021 L572 1013 Z"/><path fill="#dddad6" d="M537 1013 L566 1020 L560 1051 L537 1054 Z"/><path fill="#f3efc6" d="M572 1021 L600 1028 L590 1049 L567 1052 Z"/><path fill="#e6e2de" d="M538 1061 L589 1057 L586 1116 L546 1107 Z"/><path fill="#d8ecc8" d="M546 1115 L585 1123 L587 1157 L554 1161 Z"/><path fill="#e6e2de" d="M556 1167 L586 1163 L592 1182 L547 1181 Z"/><path fill="#f1e5e5" d="M547 1185 L592 1186 L599 1206 L539 1200 Z"/><path fill="#dddad6" d="M538 1205 L566 1209 L568 1238 L549 1242 Z"/><path fill="#dddad6" d="M572 1208 L599 1211 L593 1233 L574 1238 Z"/><path fill="#f1e5e5" d="M552 1249 L592 1240 L583 1267 L546 1270 Z"/><path fill="#d8ecc8" d="M545 1275 L583 1273 L575 1300 L540 1297 Z"/><path fill="#dddad6" d="M539 1302 L576 1307 L586 1349 L546 1343 Z"/><path fill="#dddad6" d="M546 1351 L586 1356 L597 1397 L549 1397 Z"/><path fill="#f3efc6" d="M551 1402 L596 1401 L591 1421 L557 1411 Z"/><path fill="#d8ecc8" d="M556 1414 L590 1424 L586 1444 L563 1423 Z"/><path fill="#e8e1e8" d="M559 1427 L572 1440 L575 1484 L555 1482 Z"/><path fill="#efdfdf" d="M575 1440 L587 1453 L597 1487 L578 1484 Z"/><path fill="#dddad6" d="M556 1490 L595 1493 L580 1529 L545 1514 Z"/><path fill="#e6e2de" d="M543 1519 L579 1537 L587 1581 L549 1565 Z"/><path fill="#efdfdf" d="M548 1572 L566 1581 L576 1616 L554 1625 Z"/><path fill="#efdfdf" d="M571 1580 L588 1590 L602 1607 L581 1615 Z"/><path fill="#efdfdf" d="M591 99 L610 99 L612 141 L594 147 Z"/><path fill="#ece7e0" d="M615 98 L634 98 L635 136 L616 141 Z"/><path fill="#ece7e0" d="M597 152 L633 143 L635 160 L600 170 Z"/><path fill="#e8e1e8" d="M601 174 L636 164 L638 181 L604 191 Z"/><path fill="#efdfdf" d="M605 196 L639 184 L631 207 L598 211 Z"/><path fill="#ece7e0" d="M598 216 L631 212 L625 234 L591 232 Z"/><path fill="#f1e5e5" d="M589 238 L606 240 L612 278 L602 280 Z"/><path fill="#ece7e0" d="M610 240 L627 241 L625 276 L615 278 Z"/><path fill="#e6e2de" d="M602 290 L612 287 L612 330 L583 324 Z"/><path fill="#dddad6" d="M616 287 L626 286 L646 337 L616 330 Z"/><path fill="#ece7e0" d="M582 332 L611 338 L605 367 L587 376 Z"/><path fill="#dddad6" d="M617 339 L645 343 L627 358 L610 368 Z"/><path fill="#ece7e0" d="M589 383 L627 367 L644 431 L584 413 Z"/><path fill="#ece7e0" d="M583 420 L610 429 L608 459 L583 463 Z"/><path fill="#f1e5e5" d="M617 429 L643 437 L637 454 L614 459 Z"/><path fill="#ece7e0" d="M585 469 L637 461 L631 489 L597 488 Z"/><path fill="#e6e2de" d="M597 494 L632 495 L628 522 L609 512 Z"/><path fill="#dddad6" d="M606 520 L616 525 L617 555 L591 568 Z"/><path fill="#efdfdf" d="M621 525 L630 531 L646 545 L622 555 Z"/><path fill="#efdfdf" d="M593 574 L647 550 L626 600 L585 599 Z"/><path fill="#e6e2de" d="M585 604 L625 606 L626 629 L595 618 Z"/><path fill="#dddad6" d="M595 623 L626 633 L628 655 L606 638 Z"/><path fill="#e6e2de" d="M603 643 L628 663 L632 701 L603 690 Z"/><path fill="#ece7e0" d="M599 699 L613 704 L603 736 L582 734 Z"/><path fill="#efdfdf" d="M618 705 L631 710 L627 740 L607 737 Z"/><path fill="#dddad6" d="M582 740 L625 749 L647 793 L594 783 Z"/><path fill="#efdfdf" d="M595 790 L647 797 L624 821 L597 821 Z"/><path fill="#dddad6" d="M594 828 L608 829 L611 882 L586 891 Z"/><path fill="#ece7e0" d="M612 829 L626 830 L639 875 L614 882 Z"/><path fill="#e8e1e8" d="M589 897 L638 882 L631 924 L594 924 Z"/><path fill="#e6e2de" d="M594 931 L631 931 L637 983 L585 966 Z"/><path fill="#e6e2de" d="M584 971 L636 989 L628 1018 L606 1021 Z"/><path fill="#e6e2de" d="M605 1030 L615 1028 L611 1056 L596 1050 Z"/><path fill="#efdfdf" d="M619 1028 L629 1027 L630 1063 L615 1056 Z"/><path fill="#f1e5e5" d="M595 1058 L628 1071 L640 1099 L592 1116 Z"/><path fill="#f1e5e5" d="M592 1124 L614 1115 L612 1158 L593 1156 Z"/><path fill="#e6e2de" d="M619 1115 L642 1106 L636 1159 L616 1158 Z"/><path fill="#ece7e0" d="M594 1164 L634 1167 L622 1207 L605 1204 Z"/><path fill="#dddad6" d="M606 1212 L622 1216 L632 1246 L600 1235 Z"/><path fill="#f1e5e5" d="M596 1242 L613 1248 L608 1299 L581 1299 Z"/><path fill="#dddad6" d="M617 1248 L634 1255 L639 1300 L612 1299 Z"/><path fill="#e6e2de" d="M582 1308 L607 1308 L605 1343 L591 1348 Z"/><path fill="#f1e5e5" d="M612 1308 L638 1308 L624 1337 L610 1343 Z"/><path fill="#efdfdf" d="M592 1357 L607 1352 L611 1388 L601 1395 Z"/><path fill="#e6e2de" d="M610 1352 L624 1347 L623 1380 L614 1387 Z"/><path fill="#ece7e0" d="M606 1401 L622 1389 L624 1403 L598 1420 Z"/><path fill="#e8e1e8" d="M600 1424 L626 1407 L629 1421 L592 1444 Z"/><path fill="#ece7e0" d="M593 1450 L631 1425 L629 1475 L601 1486 Z"/><path fill="#f1e5e5" d="M602 1495 L630 1483 L639 1534 L586 1531 Z"/><path fill="#efdfdf" d="M586 1537 L638 1541 L630 1570 L593 1581 Z"/><path fill="#ece7e0" d="M594 1587 L632 1577 L641 1626 L610 1607 Z"/><path fill="#f1e5e5" d="M638 98 L662 107 L656 134 L640 136 Z"/><path fill="#efdfdf" d="M668 108 L692 116 L677 132 L662 135 Z"/><path fill="#e6e2de" d="M641 143 L676 141 L692 177 L646 178 Z"/><path fill="#efdfdf" d="M647 184 L692 182 L685 209 L640 207 Z"/><path fill="#ece7e0" d="M640 212 L685 214 L679 241 L633 235 Z"/><path fill="#e6e2de" d="M632 240 L678 247 L681 278 L630 278 Z"/><path fill="#e6e2de" d="M631 282 L680 283 L686 301 L642 308 Z"/><path fill="#dddad6" d="M642 312 L686 306 L691 324 L652 337 Z"/><path fill="#ece7e0" d="M653 344 L692 328 L683 381 L634 361 Z"/><path fill="#f1e5e5" d="M632 367 L656 379 L659 422 L647 430 Z"/><path fill="#f3efc6" d="M659 378 L682 389 L673 413 L662 422 Z"/><path fill="#dddad6" d="M649 439 L659 431 L660 459 L644 454 Z"/><path fill="#e6e2de" d="M663 431 L673 423 L681 465 L664 459 Z"/><path fill="#e6e2de" d="M642 463 L660 468 L652 514 L633 521 Z"/><path fill="#f3efc6" d="M663 469 L681 474 L674 508 L656 515 Z"/><path fill="#f1e5e5" d="M635 528 L652 524 L658 544 L650 542 Z"/><path fill="#ece7e0" d="M657 523 L673 517 L670 544 L662 543 Z"/><path fill="#efdfdf" d="M650 552 L659 552 L653 595 L632 600 Z"/><path fill="#f1e5e5" d="M662 553 L671 553 L677 592 L656 595 Z"/><path fill="#efdfdf" d="M633 607 L677 600 L693 643 L635 655 Z"/><path fill="#ece7e0" d="M636 662 L693 649 L675 702 L638 702 Z"/><path fill="#e6e2de" d="M638 709 L674 709 L686 735 L632 742 Z"/><path fill="#efdfdf" d="M633 747 L688 741 L690 790 L654 791 Z"/><path fill="#f1e5e5" d="M654 800 L689 796 L678 835 L631 824 Z"/><path fill="#f1e5e5" d="M630 829 L677 842 L673 872 L645 874 Z"/><path fill="#d8ecc8" d="M645 882 L674 880 L691 923 L638 924 Z"/><path fill="#e6e2de" d="M639 929 L690 928 L690 945 L642 954 Z"/><path fill="#f3efc6" d="M642 958 L691 948 L690 965 L644 984 Z"/><path fill="#efdfdf" d="M645 989 L691 968 L670 1004 L634 1019 Z"/><path fill="#ece7e0" d="M635 1025 L672 1012 L687 1065 L635 1064 Z"/><path fill="#efdfdf" d="M635 1071 L658 1072 L655 1096 L646 1097 Z"/><path fill="#efdfdf" d="M663 1072 L687 1071 L670 1094 L660 1096 Z"/><path fill="#efdfdf" d="M647 1106 L669 1104 L689 1155 L640 1160 Z"/><path fill="#ece7e0" d="M642 1167 L689 1161 L690 1190 L628 1208 Z"/><path fill="#efdfdf" d="M629 1213 L691 1195 L682 1237 L639 1246 Z"/><path fill="#efdfdf" d="M640 1253 L684 1243 L687 1296 L644 1300 Z"/><path fill="#ece7e0" d="M643 1309 L662 1305 L654 1334 L629 1339 Z"/><path fill="#efdfdf" d="M668 1306 L687 1303 L684 1330 L660 1334 Z"/><path fill="#e8e1e8" d="M630 1344 L683 1338 L692 1375 L629 1382 Z"/><path fill="#e6e2de" d="M630 1386 L692 1379 L680 1406 L634 1401 Z"/><path fill="#ece7e0" d="M634 1405 L679 1410 L669 1435 L639 1420 Z"/><path fill="#e8e1e8" d="M636 1425 L668 1442 L669 1465 L635 1475 Z"/><path fill="#e6e2de" d="M636 1482 L671 1472 L679 1527 L644 1533 Z"/><path fill="#ece7e0" d="M645 1542 L660 1538 L662 1571 L638 1569 Z"/><path fill="#dddad6" d="M665 1538 L682 1535 L692 1574 L667 1571 Z"/><path fill="#dddad6" d="M637 1577 L662 1580 L656 1621 L645 1625 Z"/><path fill="#e6e2de" d="M666 1580 L691 1582 L672 1617 L660 1622 Z"/><path fill="#efdfdf" d="M702 113 L736 93 L733 114 L692 123 Z"/><path fill="#efdfdf" d="M692 126 L734 117 L732 137 L683 135 Z"/><path fill="#dddad6" d="M683 138 L732 141 L726 157 L692 156 Z"/><path fill="#dddad6" d="M692 161 L726 161 L720 175 L700 177 Z"/><path fill="#d8ecc8" d="M698 185 L722 183 L734 235 L686 241 Z"/><path fill="#e6e2de" d="M687 247 L734 242 L737 280 L689 278 Z"/><path fill="#dddad6" d="M689 284 L737 286 L718 318 L699 320 Z"/><path fill="#efdfdf" d="M696 329 L707 328 L703 382 L687 381 Z"/><path fill="#d8ecc8" d="M709 328 L719 327 L722 384 L706 382 Z"/><path fill="#ece7e0" d="M687 390 L701 390 L695 410 L677 414 Z"/><path fill="#d8ecc8" d="M707 391 L720 392 L718 407 L701 411 Z"/><path fill="#f1e5e5" d="M679 419 L718 413 L719 432 L683 441 Z"/><path fill="#efdfdf" d="M684 445 L720 437 L721 455 L687 466 Z"/><path fill="#ece7e0" d="M686 475 L703 468 L700 510 L679 509 Z"/><path fill="#dddad6" d="M707 468 L724 461 L726 513 L704 511 Z"/><path fill="#efdfdf" d="M679 517 L699 519 L700 546 L675 545 Z"/><path fill="#efdfdf" d="M705 519 L725 521 L731 547 L706 546 Z"/><path fill="#e6e2de" d="M675 552 L730 554 L717 601 L683 593 Z"/><path fill="#ece7e0" d="M682 600 L699 606 L713 644 L697 640 Z"/><path fill="#e6e2de" d="M703 605 L719 611 L732 646 L717 643 Z"/><path fill="#f1e5e5" d="M697 650 L714 652 L704 703 L681 702 Z"/><path fill="#e6e2de" d="M717 653 L733 655 L731 705 L707 703 Z"/><path fill="#e6e2de" d="M682 708 L727 711 L721 722 L689 720 Z"/><path fill="#f1e5e5" d="M689 723 L721 725 L716 735 L695 735 Z"/><path fill="#f1e5e5" d="M692 742 L704 742 L710 788 L694 789 Z"/><path fill="#f3efc6" d="M707 742 L719 742 L728 787 L712 787 Z"/><path fill="#e6e2de" d="M694 798 L709 797 L709 834 L684 836 Z"/><path fill="#e6e2de" d="M714 797 L729 796 L738 834 L713 834 Z"/><path fill="#e6e2de" d="M686 841 L736 839 L733 857 L684 856 Z"/><path fill="#dddad6" d="M684 859 L733 860 L730 878 L682 874 Z"/><path fill="#efdfdf" d="M681 879 L731 883 L735 934 L698 922 Z"/><path fill="#e8e1e8" d="M699 929 L733 938 L727 948 L700 944 Z"/><path fill="#efdfdf" d="M699 948 L726 952 L720 961 L699 963 Z"/><path fill="#e6e2de" d="M697 970 L721 967 L720 1012 L678 1005 Z"/><path fill="#dddad6" d="M678 1010 L719 1018 L728 1036 L687 1035 Z"/><path fill="#e6e2de" d="M687 1040 L728 1040 L736 1058 L695 1065 Z"/><path fill="#dddad6" d="M692 1073 L712 1067 L700 1103 L675 1097 Z"/><path fill="#e8e1e8" d="M717 1068 L738 1064 L732 1111 L705 1104 Z"/><path fill="#d8ecc8" d="M675 1102 L729 1116 L734 1130 L686 1127 Z"/><path fill="#f1e5e5" d="M686 1130 L734 1133 L738 1146 L697 1155 Z"/><path fill="#dddad6" d="M697 1161 L739 1151 L734 1196 L698 1188 Z"/><path fill="#dddad6" d="M697 1196 L734 1202 L717 1249 L690 1236 Z"/><path fill="#dddad6" d="M689 1243 L717 1258 L736 1295 L693 1295 Z"/><path fill="#ece7e0" d="M692 1304 L712 1303 L702 1340 L690 1330 Z"/><path fill="#f1e5e5" d="M716 1304 L736 1302 L718 1350 L705 1341 Z"/><path fill="#dddad6" d="M690 1338 L712 1355 L719 1370 L697 1355 Z"/><path fill="#e6e2de" d="M695 1359 L717 1374 L723 1388 L701 1376 Z"/><path fill="#d8ecc8" d="M696 1382 L709 1389 L702 1428 L675 1435 Z"/><path fill="#efdfdf" d="M713 1389 L725 1396 L733 1424 L707 1429 Z"/><path fill="#f1e5e5" d="M677 1440 L732 1429 L727 1450 L677 1452 Z"/><path fill="#f1e5e5" d="M677 1455 L727 1453 L723 1473 L677 1467 Z"/><path fill="#e6e2de" d="M675 1472 L698 1476 L699 1517 L684 1525 Z"/><path fill="#ece7e0" d="M702 1476 L724 1479 L717 1509 L703 1517 Z"/><path fill="#f1e5e5" d="M686 1534 L700 1527 L713 1570 L696 1573 Z"/><path fill="#efdfdf" d="M704 1526 L719 1519 L733 1565 L716 1569 Z"/><path fill="#e8e1e8" d="M696 1583 L712 1578 L704 1609 L675 1618 Z"/><path fill="#e6e2de" d="M718 1578 L734 1574 L737 1602 L709 1610 Z"/><path fill="#efdfdf" d="M743 93 L767 95 L776 119 L743 112 Z"/><path fill="#efdfdf" d="M742 117 L775 125 L784 151 L742 138 Z"/><path fill="#d8ecc8" d="M741 142 L783 155 L784 170 L736 158 Z"/><path fill="#d8ecc8" d="M735 161 L783 174 L783 190 L729 178 Z"/><path fill="#f1e5e5" d="M729 181 L782 193 L772 211 L735 206 Z"/><path fill="#efdfdf" d="M735 211 L771 216 L761 232 L741 235 Z"/><path fill="#efdfdf" d="M740 242 L762 240 L765 267 L743 278 Z"/><path fill="#efdfdf" d="M741 288 L752 281 L747 318 L724 319 Z"/><path fill="#dddad6" d="M756 282 L767 276 L775 320 L751 319 Z"/><path fill="#e6e2de" d="M724 326 L774 328 L762 372 L726 384 Z"/><path fill="#d8ecc8" d="M727 392 L742 387 L752 419 L726 408 Z"/><path fill="#efdfdf" d="M747 386 L765 381 L785 431 L757 418 Z"/><path fill="#e6e2de" d="M725 414 L783 435 L771 454 L730 454 Z"/><path fill="#e6e2de" d="M729 460 L772 461 L779 500 L731 513 Z"/><path fill="#ece7e0" d="M732 519 L780 507 L773 545 L738 547 Z"/><path fill="#efdfdf" d="M735 556 L753 554 L753 602 L723 602 Z"/><path fill="#dddad6" d="M758 554 L776 553 L787 603 L757 602 Z"/><path fill="#f1e5e5" d="M723 609 L752 611 L752 644 L736 646 Z"/><path fill="#e6e2de" d="M758 611 L786 611 L773 641 L757 644 Z"/><path fill="#efdfdf" d="M738 655 L772 650 L775 707 L735 706 Z"/><path fill="#e6e2de" d="M736 713 L773 713 L770 734 L725 735 Z"/><path fill="#dddad6" d="M724 741 L771 740 L773 798 L733 787 Z"/><path fill="#e6e2de" d="M732 795 L751 801 L755 834 L742 833 Z"/><path fill="#dddad6" d="M755 801 L774 806 L771 835 L759 834 Z"/><path fill="#ece7e0" d="M744 841 L770 844 L784 874 L738 876 Z"/><path fill="#e6e2de" d="M737 884 L759 883 L759 929 L740 933 Z"/><path fill="#e6e2de" d="M763 883 L785 882 L783 924 L763 929 Z"/><path fill="#f1e5e5" d="M742 940 L780 931 L763 958 L729 961 Z"/><path fill="#efdfdf" d="M726 968 L744 967 L753 1013 L726 1012 Z"/><path fill="#e6e2de" d="M748 966 L766 966 L785 1015 L757 1013 Z"/><path fill="#efdfdf" d="M727 1020 L754 1022 L756 1064 L742 1054 Z"/><path fill="#dddad6" d="M758 1022 L785 1023 L774 1073 L760 1064 Z"/><path fill="#e6e2de" d="M743 1064 L770 1081 L774 1109 L737 1112 Z"/><path fill="#ece7e0" d="M738 1118 L774 1114 L770 1135 L743 1130 Z"/><path fill="#f3efc6" d="M742 1135 L769 1140 L767 1161 L748 1147 Z"/><path fill="#dddad6" d="M745 1152 L766 1168 L767 1199 L741 1196 Z"/><path fill="#e6e2de" d="M738 1204 L751 1206 L749 1249 L722 1250 Z"/><path fill="#e6e2de" d="M755 1206 L768 1208 L780 1249 L753 1249 Z"/><path fill="#ece7e0" d="M723 1256 L779 1256 L762 1284 L742 1294 Z"/><path fill="#efdfdf" d="M742 1303 L764 1292 L778 1345 L721 1352 Z"/><path fill="#e8e1e8" d="M721 1359 L747 1356 L744 1392 L729 1387 Z"/><path fill="#e6e2de" d="M752 1356 L778 1352 L764 1397 L749 1393 Z"/><path fill="#e6e2de" d="M730 1395 L761 1404 L762 1422 L739 1423 Z"/><path fill="#efdfdf" d="M739 1432 L763 1429 L762 1474 L731 1471 Z"/><path fill="#d8ecc8" d="M731 1479 L761 1482 L776 1532 L723 1512 Z"/><path fill="#e6e2de" d="M722 1518 L775 1538 L764 1573 L739 1565 Z"/><path fill="#efdfdf" d="M739 1574 L763 1581 L763 1616 L744 1602 Z"/><path fill="#ece7e0" d="M774 95 L812 100 L807 148 L790 149 Z"/><path fill="#dddad6" d="M791 159 L807 157 L809 195 L790 188 Z"/><path fill="#ece7e0" d="M789 197 L808 203 L814 237 L769 233 Z"/><path fill="#ece7e0" d="M769 239 L813 244 L822 281 L773 268 Z"/><path fill="#dddad6" d="M772 274 L822 287 L829 338 L782 321 Z"/><path fill="#efdfdf" d="M779 329 L801 336 L789 369 L768 372 Z"/><path fill="#d8ecc8" d="M806 338 L828 344 L814 367 L794 370 Z"/><path fill="#ece7e0" d="M768 380 L790 379 L807 420 L788 429 Z"/><path fill="#dddad6" d="M794 377 L815 376 L829 409 L811 418 Z"/><path fill="#ece7e0" d="M790 439 L807 427 L796 456 L779 454 Z"/><path fill="#dddad6" d="M812 428 L830 416 L819 461 L801 457 Z"/><path fill="#e6e2de" d="M778 461 L796 466 L806 500 L785 499 Z"/><path fill="#dddad6" d="M801 465 L819 470 L832 500 L811 499 Z"/><path fill="#f1e5e5" d="M787 507 L832 507 L824 563 L781 546 Z"/><path fill="#e6e2de" d="M780 552 L822 570 L824 590 L792 603 Z"/><path fill="#f3efc6" d="M793 611 L826 596 L831 643 L778 643 Z"/><path fill="#e6e2de" d="M778 649 L831 650 L828 699 L781 707 Z"/><path fill="#f1e5e5" d="M781 715 L801 711 L795 740 L778 733 Z"/><path fill="#e6e2de" d="M807 711 L829 706 L819 749 L800 741 Z"/><path fill="#efdfdf" d="M777 740 L816 756 L823 783 L779 798 Z"/><path fill="#efdfdf" d="M779 806 L799 798 L798 834 L776 836 Z"/><path fill="#efdfdf" d="M804 798 L825 790 L826 832 L803 834 Z"/><path fill="#f1e5e5" d="M776 843 L799 843 L805 877 L789 872 Z"/><path fill="#ece7e0" d="M803 842 L826 841 L826 881 L810 877 Z"/><path fill="#ece7e0" d="M792 880 L823 887 L825 900 L791 901 Z"/><path fill="#f1e5e5" d="M791 905 L825 904 L825 917 L789 926 Z"/><path fill="#e6e2de" d="M789 932 L826 922 L818 957 L770 959 Z"/><path fill="#efdfdf" d="M769 965 L793 966 L807 1019 L788 1014 Z"/><path fill="#ece7e0" d="M797 965 L821 965 L828 1023 L810 1018 Z"/><path fill="#f3efc6" d="M791 1023 L826 1030 L827 1052 L778 1074 Z"/><path fill="#ece7e0" d="M779 1078 L828 1056 L822 1081 L780 1092 Z"/><path fill="#efdfdf" d="M781 1096 L823 1085 L819 1109 L783 1110 Z"/><path fill="#efdfdf" d="M781 1116 L819 1115 L808 1146 L773 1161 Z"/><path fill="#e8e1e8" d="M773 1169 L789 1162 L799 1205 L772 1199 Z"/><path fill="#efdfdf" d="M794 1161 L811 1155 L832 1210 L804 1204 Z"/><path fill="#e8e1e8" d="M773 1207 L831 1216 L812 1255 L786 1249 Z"/><path fill="#e6e2de" d="M784 1258 L796 1260 L794 1286 L770 1285 Z"/><path fill="#ece7e0" d="M801 1260 L813 1264 L823 1289 L799 1286 Z"/><path fill="#f1e5e5" d="M770 1291 L822 1296 L822 1332 L784 1344 Z"/><path fill="#e6e2de" d="M785 1352 L823 1338 L811 1372 L768 1398 Z"/><path fill="#efdfdf" d="M770 1403 L813 1378 L823 1433 L770 1422 Z"/><path fill="#efdfdf" d="M769 1428 L822 1439 L825 1477 L769 1476 Z"/><path fill="#e6e2de" d="M769 1482 L825 1483 L816 1518 L782 1532 Z"/><path fill="#e6e2de" d="M781 1541 L797 1533 L795 1569 L770 1574 Z"/><path fill="#efdfdf" d="M802 1533 L819 1525 L825 1565 L800 1569 Z"/><path fill="#efdfdf" d="M771 1579 L824 1571 L822 1595 L770 1597 Z"/><path fill="#e6e2de" d="M770 1601 L822 1599 L820 1623 L770 1619 Z"/><path fill="#e6e2de" d="M817 101 L838 105 L831 141 L812 148 Z"/><path fill="#f1e5e5" d="M842 105 L863 109 L854 135 L835 142 Z"/><path fill="#f1e5e5" d="M814 155 L853 144 L873 180 L815 196 Z"/><path fill="#e6e2de" d="M816 200 L873 185 L862 203 L819 217 Z"/><path fill="#f1e5e5" d="M819 220 L862 206 L851 224 L821 237 Z"/><path fill="#e6e2de" d="M822 243 L854 229 L871 271 L829 279 Z"/><path fill="#dddad6" d="M828 288 L849 283 L848 330 L834 337 Z"/><path fill="#e6e2de" d="M853 283 L873 277 L866 323 L851 330 Z"/><path fill="#f1e5e5" d="M836 345 L864 332 L872 372 L820 369 Z"/><path fill="#e6e2de" d="M819 375 L844 378 L848 406 L833 407 Z"/><path fill="#d8ecc8" d="M849 377 L873 379 L866 404 L853 406 Z"/><path fill="#dddad6" d="M835 416 L866 413 L873 472 L824 462 Z"/><path fill="#e8e1e8" d="M824 469 L872 478 L869 519 L839 501 Z"/><path fill="#ece7e0" d="M837 508 L868 527 L868 562 L830 564 Z"/><path fill="#ece7e0" d="M831 569 L867 568 L870 585 L832 579 Z"/><path fill="#e6e2de" d="M832 582 L870 589 L874 607 L833 592 Z"/><path fill="#e8e1e8" d="M831 596 L874 612 L854 658 L837 643 Z"/><path fill="#f3efc6" d="M837 651 L853 668 L877 688 L835 698 Z"/><path fill="#dddad6" d="M835 706 L878 693 L854 735 L823 750 Z"/><path fill="#dddad6" d="M823 757 L836 751 L839 782 L828 781 Z"/><path fill="#efdfdf" d="M840 751 L854 744 L855 782 L843 781 Z"/><path fill="#ece7e0" d="M830 790 L854 791 L854 824 L831 832 Z"/><path fill="#dddad6" d="M831 840 L854 833 L852 876 L830 881 Z"/><path fill="#f1e5e5" d="M830 890 L840 887 L844 922 L832 914 Z"/><path fill="#f1e5e5" d="M843 887 L853 885 L861 930 L847 922 Z"/><path fill="#f1e5e5" d="M833 923 L858 937 L861 961 L826 957 Z"/><path fill="#dddad6" d="M826 963 L861 968 L869 995 L830 991 Z"/><path fill="#ece7e0" d="M830 997 L869 1001 L877 1028 L834 1025 Z"/><path fill="#e6e2de" d="M834 1030 L876 1033 L869 1055 L836 1051 Z"/><path fill="#f1e5e5" d="M834 1058 L870 1062 L863 1106 L826 1108 Z"/><path fill="#e6e2de" d="M825 1116 L841 1115 L836 1143 L815 1146 Z"/><path fill="#efdfdf" d="M846 1115 L862 1115 L862 1141 L842 1143 Z"/><path fill="#efdfdf" d="M816 1152 L862 1148 L862 1176 L827 1178 Z"/><path fill="#ece7e0" d="M828 1184 L863 1182 L863 1208 L838 1210 Z"/><path fill="#efdfdf" d="M838 1218 L864 1215 L870 1257 L819 1256 Z"/><path fill="#ece7e0" d="M819 1262 L869 1263 L869 1300 L830 1290 Z"/><path fill="#dddad6" d="M828 1297 L847 1302 L850 1340 L829 1330 Z"/><path fill="#f1e5e5" d="M852 1303 L871 1308 L876 1349 L855 1340 Z"/><path fill="#d8ecc8" d="M829 1338 L874 1355 L872 1382 L820 1373 Z"/><path fill="#ece7e0" d="M819 1378 L872 1389 L869 1435 L829 1432 Z"/><path fill="#dddad6" d="M829 1441 L847 1442 L851 1479 L831 1476 Z"/><path fill="#dddad6" d="M852 1442 L871 1443 L876 1482 L856 1478 Z"/><path fill="#e6e2de" d="M832 1484 L874 1488 L863 1514 L824 1518 Z"/><path fill="#e6e2de" d="M823 1525 L842 1524 L844 1562 L830 1564 Z"/><path fill="#efdfdf" d="M846 1523 L864 1522 L861 1560 L848 1562 Z"/><path fill="#dddad6" d="M831 1573 L861 1569 L870 1622 L828 1621 Z"/><path fill="#ece7e0" d="M870 108 L902 105 L919 140 L860 137 Z"/><path fill="#f1e5e5" d="M859 143 L887 145 L888 184 L878 177 Z"/><path fill="#ece7e0" d="M892 145 L920 146 L902 190 L892 184 Z"/><path fill="#efdfdf" d="M879 187 L899 198 L906 225 L860 222 Z"/><path fill="#e6e2de" d="M859 228 L881 231 L889 267 L876 268 Z"/><path fill="#e6e2de" d="M886 230 L908 232 L906 266 L893 267 Z"/><path fill="#e6e2de" d="M878 277 L905 274 L902 324 L870 324 Z"/><path fill="#f3efc6" d="M869 333 L884 333 L887 364 L877 370 Z"/><path fill="#f1e5e5" d="M888 332 L902 332 L901 358 L891 364 Z"/><path fill="#e6e2de" d="M879 379 L901 367 L913 431 L873 406 Z"/><path fill="#efdfdf" d="M871 413 L890 426 L897 465 L877 471 Z"/><path fill="#d8ecc8" d="M895 426 L913 439 L920 460 L901 465 Z"/><path fill="#efdfdf" d="M879 480 L898 474 L896 509 L874 519 Z"/><path fill="#f1e5e5" d="M903 473 L921 468 L923 499 L901 508 Z"/><path fill="#efdfdf" d="M876 523 L922 505 L910 524 L875 541 Z"/><path fill="#e6e2de" d="M876 545 L911 527 L899 546 L875 562 Z"/><path fill="#efdfdf" d="M875 569 L902 551 L899 604 L880 605 Z"/><path fill="#e6e2de" d="M881 613 L898 612 L907 628 L870 633 Z"/><path fill="#f1e5e5" d="M871 638 L907 633 L916 650 L859 660 Z"/><path fill="#f1e5e5" d="M859 664 L917 655 L919 694 L885 686 Z"/><path fill="#ece7e0" d="M884 694 L919 700 L922 744 L860 737 Z"/><path fill="#efdfdf" d="M859 744 L887 747 L883 779 L860 782 Z"/><path fill="#ece7e0" d="M894 747 L922 750 L912 777 L889 780 Z"/><path fill="#e6e2de" d="M862 788 L911 783 L909 806 L861 805 Z"/><path fill="#ece7e0" d="M861 809 L909 809 L908 832 L861 827 Z"/><path fill="#f1e5e5" d="M859 833 L882 836 L886 873 L857 876 Z"/><path fill="#ece7e0" d="M887 835 L910 839 L919 871 L891 873 Z"/><path fill="#efdfdf" d="M858 883 L919 878 L905 933 L866 931 Z"/><path fill="#ece7e0" d="M865 939 L882 940 L881 965 L868 961 Z"/><path fill="#f1e5e5" d="M888 940 L905 941 L900 970 L886 966 Z"/><path fill="#ece7e0" d="M869 968 L898 978 L900 997 L876 994 Z"/><path fill="#f1e5e5" d="M877 1001 L901 1003 L902 1022 L883 1027 Z"/><path fill="#e6e2de" d="M885 1034 L903 1029 L912 1052 L877 1055 Z"/><path fill="#e6e2de" d="M876 1062 L914 1059 L917 1106 L869 1107 Z"/><path fill="#dddad6" d="M868 1115 L890 1114 L885 1152 L869 1141 Z"/><path fill="#f1e5e5" d="M895 1115 L918 1114 L908 1163 L890 1152 Z"/><path fill="#e6e2de" d="M867 1149 L885 1161 L892 1201 L868 1207 Z"/><path fill="#e6e2de" d="M890 1161 L907 1173 L918 1195 L896 1200 Z"/><path fill="#f3efc6" d="M871 1214 L918 1202 L915 1237 L876 1256 Z"/><path fill="#d8ecc8" d="M878 1262 L916 1243 L910 1282 L876 1299 Z"/><path fill="#efdfdf" d="M876 1308 L893 1299 L896 1349 L880 1349 Z"/><path fill="#efdfdf" d="M896 1298 L913 1289 L916 1349 L899 1349 Z"/><path fill="#efdfdf" d="M882 1357 L914 1356 L913 1373 L880 1382 Z"/><path fill="#e8e1e8" d="M879 1389 L915 1379 L911 1429 L875 1434 Z"/><path fill="#f1e5e5" d="M876 1442 L911 1437 L908 1467 L881 1482 Z"/><path fill="#ece7e0" d="M880 1491 L893 1482 L886 1516 L870 1514 Z"/><path fill="#efdfdf" d="M897 1483 L910 1475 L906 1520 L890 1517 Z"/><path fill="#f1e5e5" d="M868 1522 L885 1525 L881 1566 L866 1561 Z"/><path fill="#d8ecc8" d="M888 1526 L905 1529 L901 1572 L885 1567 Z"/><path fill="#f1e5e5" d="M866 1569 L899 1581 L903 1609 L875 1621 Z"/><path fill="#e6e2de" d="M909 104 L927 103 L944 138 L924 137 Z"/><path fill="#e6e2de" d="M931 101 L949 99 L968 137 L948 136 Z"/><path fill="#e6e2de" d="M926 147 L968 143 L946 183 L906 192 Z"/><path fill="#ece7e0" d="M908 196 L945 190 L956 206 L911 209 Z"/><path fill="#ece7e0" d="M911 213 L956 209 L968 225 L915 226 Z"/><path fill="#f1e5e5" d="M913 232 L938 231 L930 268 L911 266 Z"/><path fill="#efdfdf" d="M943 232 L969 230 L955 271 L935 269 Z"/><path fill="#efdfdf" d="M912 273 L951 278 L956 300 L911 297 Z"/><path fill="#dddad6" d="M910 301 L956 304 L961 327 L909 326 Z"/><path fill="#d8ecc8" d="M909 330 L960 331 L953 355 L908 344 Z"/><path fill="#f1e5e5" d="M908 348 L952 358 L945 382 L908 362 Z"/><path fill="#dddad6" d="M905 367 L925 379 L933 427 L916 430 Z"/><path fill="#e6e2de" d="M928 379 L947 391 L953 423 L936 426 Z"/><path fill="#dddad6" d="M919 438 L952 431 L956 474 L927 460 Z"/><path fill="#f1e5e5" d="M927 467 L954 479 L950 489 L929 482 Z"/><path fill="#efdfdf" d="M928 486 L948 494 L944 503 L930 500 Z"/><path fill="#efdfdf" d="M925 507 L934 509 L928 545 L908 543 Z"/><path fill="#f1e5e5" d="M938 509 L946 511 L952 549 L932 546 Z"/><path fill="#efdfdf" d="M908 549 L949 556 L957 577 L907 575 Z"/><path fill="#e6e2de" d="M907 580 L957 582 L964 604 L906 607 Z"/><path fill="#f3efc6" d="M905 612 L933 612 L936 648 L922 646 Z"/><path fill="#ece7e0" d="M938 612 L966 610 L954 647 L941 647 Z"/><path fill="#e8e1e8" d="M923 656 L937 657 L944 694 L924 692 Z"/><path fill="#dddad6" d="M941 656 L955 657 L967 696 L947 693 Z"/><path fill="#e6e2de" d="M927 699 L965 702 L960 721 L929 719 Z"/><path fill="#dddad6" d="M928 725 L960 727 L955 745 L930 744 Z"/><path fill="#ece7e0" d="M929 751 L955 752 L960 784 L919 778 Z"/><path fill="#ece7e0" d="M919 783 L958 789 L956 804 L918 805 Z"/><path fill="#efdfdf" d="M918 810 L956 809 L953 824 L916 832 Z"/><path fill="#e8e1e8" d="M916 838 L955 830 L956 888 L926 871 Z"/><path fill="#efdfdf" d="M923 879 L938 888 L930 926 L911 933 Z"/><path fill="#dddad6" d="M942 888 L955 897 L952 920 L934 926 Z"/><path fill="#efdfdf" d="M912 940 L951 928 L959 974 L906 972 Z"/><path fill="#d8ecc8" d="M905 979 L930 980 L926 1017 L908 1020 Z"/><path fill="#e8e1e8" d="M935 980 L960 980 L949 1014 L931 1017 Z"/><path fill="#efdfdf" d="M911 1027 L948 1022 L962 1051 L920 1051 Z"/><path fill="#e6e2de" d="M920 1059 L963 1057 L948 1114 L923 1105 Z"/><path fill="#e6e2de" d="M924 1113 L944 1121 L955 1131 L919 1136 Z"/><path fill="#dddad6" d="M919 1140 L956 1135 L966 1146 L913 1165 Z"/><path fill="#efdfdf" d="M914 1168 L967 1149 L955 1175 L920 1181 Z"/><path fill="#efdfdf" d="M920 1185 L956 1179 L945 1204 L926 1196 Z"/><path fill="#e6e2de" d="M923 1203 L933 1208 L935 1242 L921 1235 Z"/><path fill="#dddad6" d="M937 1208 L947 1212 L952 1250 L938 1242 Z"/><path fill="#f3efc6" d="M921 1244 L950 1257 L945 1290 L918 1281 Z"/><path fill="#ece7e0" d="M917 1289 L944 1299 L947 1334 L920 1349 Z"/><path fill="#f1e5e5" d="M923 1354 L947 1341 L953 1361 L922 1362 Z"/><path fill="#dddad6" d="M923 1366 L954 1365 L961 1386 L923 1375 Z"/><path fill="#efdfdf" d="M921 1379 L962 1392 L967 1440 L918 1430 Z"/><path fill="#e6e2de" d="M919 1436 L965 1444 L963 1464 L918 1451 Z"/><path fill="#f1e5e5" d="M917 1455 L962 1467 L959 1487 L917 1470 Z"/><path fill="#f1e5e5" d="M916 1474 L958 1490 L953 1504 L915 1496 Z"/><path fill="#f1e5e5" d="M914 1500 L952 1509 L947 1523 L912 1522 Z"/><path fill="#efdfdf" d="M909 1529 L927 1529 L926 1572 L904 1573 Z"/><path fill="#e8e1e8" d="M931 1529 L949 1530 L953 1571 L931 1572 Z"/><path fill="#e6e2de" d="M906 1580 L951 1579 L946 1625 L911 1609 Z"/><path fill="#ece7e0" d="M952 98 L999 112 L1015 155 L975 136 Z"/><path fill="#e6e2de" d="M972 145 L991 152 L975 190 L953 185 Z"/><path fill="#efdfdf" d="M996 154 L1015 162 L1002 197 L980 192 Z"/><path fill="#e6e2de" d="M952 191 L975 200 L992 224 L973 221 Z"/><path fill="#d8ecc8" d="M980 198 L1001 207 L1016 225 L997 222 Z"/><path fill="#dddad6" d="M975 231 L1016 231 L1010 286 L960 273 Z"/><path fill="#efdfdf" d="M959 279 L1008 293 L1001 320 L968 325 Z"/><path fill="#f3efc6" d="M969 332 L1001 327 L996 347 L961 355 Z"/><path fill="#e6e2de" d="M961 360 L997 352 L992 372 L953 383 Z"/><path fill="#d8ecc8" d="M952 390 L971 385 L983 420 L957 423 Z"/><path fill="#f1e5e5" d="M976 383 L996 378 L1014 416 L988 418 Z"/><path fill="#efdfdf" d="M959 430 L1014 422 L996 467 L962 475 Z"/><path fill="#f1e5e5" d="M963 482 L996 475 L1001 514 L952 504 Z"/><path fill="#e6e2de" d="M951 510 L1000 520 L1001 551 L958 550 Z"/><path fill="#dddad6" d="M957 558 L978 558 L979 606 L969 601 Z"/><path fill="#e6e2de" d="M981 558 L1002 558 L992 610 L982 606 Z"/><path fill="#efdfdf" d="M970 611 L979 615 L981 644 L959 648 Z"/><path fill="#efdfdf" d="M983 615 L993 620 L1007 642 L985 644 Z"/><path fill="#ece7e0" d="M960 655 L1007 649 L1003 696 L972 696 Z"/><path fill="#efdfdf" d="M971 705 L985 705 L981 747 L961 744 Z"/><path fill="#ece7e0" d="M989 705 L1004 705 L1004 751 L985 747 Z"/><path fill="#f1e5e5" d="M962 752 L980 756 L985 782 L966 783 Z"/><path fill="#efdfdf" d="M986 756 L1004 760 L1010 781 L991 782 Z"/><path fill="#f1e5e5" d="M967 791 L1010 788 L999 835 L962 823 Z"/><path fill="#e6e2de" d="M959 830 L978 837 L976 889 L960 888 Z"/><path fill="#dddad6" d="M981 837 L999 844 L995 889 L979 889 Z"/><path fill="#efdfdf" d="M960 897 L974 897 L972 922 L958 920 Z"/><path fill="#e6e2de" d="M980 898 L994 898 L991 923 L977 922 Z"/><path fill="#efdfdf" d="M957 929 L973 931 L979 971 L964 972 Z"/><path fill="#efdfdf" d="M976 931 L992 933 L997 970 L982 971 Z"/><path fill="#ece7e0" d="M964 981 L978 980 L971 1011 L954 1014 Z"/><path fill="#ece7e0" d="M983 980 L997 979 L992 1008 L975 1011 Z"/><path fill="#dddad6" d="M956 1020 L990 1016 L1002 1041 L963 1034 Z"/><path fill="#ece7e0" d="M963 1038 L1002 1045 L1016 1071 L972 1053 Z"/><path fill="#efdfdf" d="M969 1058 L1015 1076 L995 1107 L953 1116 Z"/><path fill="#ece7e0" d="M954 1121 L995 1114 L990 1144 L973 1141 Z"/><path fill="#efdfdf" d="M972 1151 L991 1152 L995 1213 L952 1204 Z"/><path fill="#ece7e0" d="M952 1211 L993 1220 L996 1241 L957 1251 Z"/><path fill="#efdfdf" d="M958 1257 L997 1246 L990 1282 L951 1291 Z"/><path fill="#efdfdf" d="M950 1299 L969 1295 L982 1339 L953 1333 Z"/><path fill="#f1e5e5" d="M974 1294 L994 1290 L1017 1345 L987 1338 Z"/><path fill="#efdfdf" d="M954 1340 L1016 1351 L1014 1394 L969 1385 Z"/><path fill="#e6e2de" d="M969 1392 L1014 1400 L1010 1425 L973 1440 Z"/><path fill="#f1e5e5" d="M971 1448 L989 1440 L979 1477 L965 1485 Z"/><path fill="#e6e2de" d="M993 1440 L1011 1431 L996 1469 L983 1477 Z"/><path fill="#efdfdf" d="M964 1495 L978 1486 L971 1516 L954 1521 Z"/><path fill="#ece7e0" d="M982 1486 L995 1478 L992 1512 L975 1517 Z"/><path fill="#efdfdf" d="M954 1530 L971 1526 L981 1570 L957 1571 Z"/><path fill="#efdfdf" d="M975 1525 L993 1522 L1009 1568 L985 1569 Z"/><path fill="#dddad6" d="M959 1579 L1008 1575 L989 1609 L952 1625 Z"/><path fill="#efdfdf" d="M1007 110 L1057 112 L1055 129 L1015 131 Z"/><path fill="#efdfdf" d="M1015 135 L1056 134 L1054 151 L1022 155 Z"/><path fill="#f1e5e5" d="M1022 162 L1055 156 L1059 191 L1007 199 Z"/><path fill="#dddad6" d="M1007 205 L1031 202 L1032 230 L1021 223 Z"/><path fill="#ece7e0" d="M1036 202 L1060 197 L1048 235 L1037 230 Z"/><path fill="#d8ecc8" d="M1021 233 L1032 238 L1028 276 L1015 286 Z"/><path fill="#efdfdf" d="M1035 239 L1046 244 L1044 266 L1031 276 Z"/><path fill="#e6e2de" d="M1018 291 L1043 275 L1041 298 L1013 304 Z"/><path fill="#f3efc6" d="M1013 309 L1042 303 L1041 326 L1009 322 Z"/><path fill="#dddad6" d="M1009 327 L1041 331 L1039 344 L1005 346 Z"/><path fill="#dddad6" d="M1005 351 L1039 349 L1037 363 L1001 371 Z"/><path fill="#e6e2de" d="M1000 377 L1019 374 L1029 415 L1018 414 Z"/><path fill="#e6e2de" d="M1022 373 L1040 369 L1043 414 L1032 414 Z"/><path fill="#efdfdf" d="M1019 424 L1030 423 L1030 465 L1002 467 Z"/><path fill="#efdfdf" d="M1034 423 L1045 423 L1061 464 L1034 465 Z"/><path fill="#d8ecc8" d="M1003 474 L1061 471 L1058 517 L1008 514 Z"/><path fill="#e8e1e8" d="M1007 521 L1030 523 L1027 550 L1008 550 Z"/><path fill="#e6e2de" d="M1036 523 L1058 524 L1052 551 L1033 551 Z"/><path fill="#e6e2de" d="M1008 558 L1051 558 L1045 598 L996 611 Z"/><path fill="#e6e2de" d="M998 616 L1045 604 L1048 629 L1006 628 Z"/><path fill="#efdfdf" d="M1006 632 L1048 634 L1052 659 L1015 644 Z"/><path fill="#e6e2de" d="M1014 648 L1051 662 L1054 675 L1013 671 Z"/><path fill="#d8ecc8" d="M1013 675 L1053 679 L1055 691 L1010 698 Z"/><path fill="#e6e2de" d="M1010 704 L1056 696 L1038 727 L1009 751 Z"/><path fill="#f1e5e5" d="M1011 757 L1040 735 L1050 779 L1017 781 Z"/><path fill="#dddad6" d="M1016 789 L1051 786 L1036 826 L1005 835 Z"/><path fill="#efdfdf" d="M1005 843 L1036 835 L1040 871 L999 890 Z"/><path fill="#dddad6" d="M1001 896 L1042 878 L1053 927 L997 925 Z"/><path fill="#dddad6" d="M997 931 L1053 933 L1043 977 L1003 971 Z"/><path fill="#e8e1e8" d="M1002 979 L1020 982 L1017 1017 L997 1009 Z"/><path fill="#dddad6" d="M1025 982 L1043 985 L1042 1027 L1022 1018 Z"/><path fill="#e6e2de" d="M997 1016 L1040 1035 L1038 1065 L1021 1069 Z"/><path fill="#ece7e0" d="M1020 1079 L1028 1076 L1026 1110 L1002 1107 Z"/><path fill="#e8e1e8" d="M1032 1076 L1041 1074 L1055 1114 L1030 1110 Z"/><path fill="#efdfdf" d="M1002 1114 L1053 1121 L1048 1165 L998 1146 Z"/><path fill="#f1e5e5" d="M995 1152 L1020 1162 L1024 1209 L999 1213 Z"/><path fill="#efdfdf" d="M1025 1162 L1049 1173 L1053 1205 L1029 1209 Z"/><path fill="#f1e5e5" d="M1001 1221 L1023 1217 L1018 1238 L1004 1239 Z"/><path fill="#d8ecc8" d="M1029 1218 L1052 1213 L1039 1236 L1024 1239 Z"/><path fill="#ece7e0" d="M1004 1247 L1037 1245 L1048 1294 L998 1282 Z"/><path fill="#ece7e0" d="M997 1289 L1021 1296 L1028 1344 L1019 1344 Z"/><path fill="#efdfdf" d="M1024 1296 L1048 1302 L1040 1344 L1031 1344 Z"/><path fill="#dddad6" d="M1021 1354 L1029 1354 L1031 1388 L1019 1393 Z"/><path fill="#e6e2de" d="M1032 1353 L1040 1354 L1045 1383 L1034 1387 Z"/><path fill="#dddad6" d="M1020 1402 L1031 1397 L1031 1431 L1017 1423 Z"/><path fill="#efdfdf" d="M1035 1397 L1047 1392 L1051 1439 L1035 1431 Z"/><path fill="#efdfdf" d="M1016 1432 L1048 1446 L1043 1478 L1001 1471 Z"/><path fill="#ece7e0" d="M1001 1476 L1042 1483 L1046 1503 L1000 1494 Z"/><path fill="#e6e2de" d="M1000 1498 L1046 1507 L1051 1528 L999 1516 Z"/><path fill="#ece7e0" d="M997 1521 L1022 1528 L1027 1565 L1013 1567 Z"/><path fill="#d8ecc8" d="M1027 1528 L1051 1534 L1045 1561 L1031 1564 Z"/><path fill="#dddad6" d="M1016 1574 L1043 1569 L1045 1591 L1007 1590 Z"/><path fill="#e6e2de" d="M1007 1595 L1044 1595 L1047 1618 L997 1611 Z"/><path fill="#efdfdf" d="M1064 114 L1080 104 L1076 145 L1061 148 Z"/><path fill="#f1e5e5" d="M1084 105 L1100 94 L1095 143 L1079 145 Z"/><path fill="#efdfdf" d="M1062 156 L1093 151 L1086 177 L1066 189 Z"/><path fill="#e6e2de" d="M1064 199 L1075 192 L1077 228 L1052 236 Z"/><path fill="#e6e2de" d="M1079 191 L1089 186 L1106 221 L1081 228 Z"/><path fill="#dddad6" d="M1054 241 L1106 227 L1099 250 L1052 254 Z"/><path fill="#e6e2de" d="M1052 257 L1099 253 L1094 276 L1051 270 Z"/><path fill="#dddad6" d="M1049 275 L1094 281 L1082 319 L1048 325 Z"/><path fill="#f1e5e5" d="M1049 332 L1082 327 L1085 370 L1045 361 Z"/><path fill="#e6e2de" d="M1045 368 L1085 377 L1105 408 L1048 415 Z"/><path fill="#efdfdf" d="M1050 420 L1105 413 L1097 439 L1059 440 Z"/><path fill="#efdfdf" d="M1059 445 L1097 445 L1091 470 L1069 465 Z"/><path fill="#ece7e0" d="M1069 471 L1089 476 L1093 485 L1067 491 Z"/><path fill="#d8ecc8" d="M1068 496 L1094 490 L1096 501 L1065 517 Z"/><path fill="#e6e2de" d="M1066 521 L1098 504 L1091 526 L1062 535 Z"/><path fill="#e6e2de" d="M1063 540 L1092 530 L1086 551 L1059 553 Z"/><path fill="#e6e2de" d="M1058 559 L1088 558 L1105 601 L1053 598 Z"/><path fill="#dddad6" d="M1052 605 L1105 607 L1088 647 L1058 658 Z"/><path fill="#f1e5e5" d="M1061 663 L1087 655 L1090 669 L1062 674 Z"/><path fill="#e6e2de" d="M1063 678 L1090 673 L1093 687 L1064 690 Z"/><path fill="#efdfdf" d="M1063 696 L1094 692 L1100 746 L1047 728 Z"/><path fill="#e6e2de" d="M1046 734 L1098 752 L1094 787 L1058 779 Z"/><path fill="#efdfdf" d="M1058 786 L1093 793 L1097 817 L1051 805 Z"/><path fill="#e6e2de" d="M1050 809 L1097 821 L1101 846 L1043 830 Z"/><path fill="#e6e2de" d="M1041 834 L1068 843 L1069 868 L1047 870 Z"/><path fill="#dddad6" d="M1075 843 L1101 851 L1097 866 L1076 868 Z"/><path fill="#e6e2de" d="M1047 878 L1071 876 L1075 927 L1058 925 Z"/><path fill="#f1e5e5" d="M1075 876 L1099 874 L1097 928 L1079 927 Z"/><path fill="#f1e5e5" d="M1061 933 L1094 935 L1091 953 L1056 953 Z"/><path fill="#efdfdf" d="M1056 958 L1091 958 L1089 977 L1050 978 Z"/><path fill="#ece7e0" d="M1048 985 L1067 984 L1067 1023 L1046 1027 Z"/><path fill="#e8e1e8" d="M1072 984 L1091 984 L1092 1019 L1071 1023 Z"/><path fill="#efdfdf" d="M1047 1036 L1067 1032 L1068 1066 L1044 1065 Z"/><path fill="#ece7e0" d="M1072 1032 L1092 1028 L1098 1067 L1074 1065 Z"/><path fill="#e6e2de" d="M1045 1071 L1098 1074 L1106 1115 L1061 1115 Z"/><path fill="#f1e5e5" d="M1061 1122 L1106 1121 L1100 1160 L1055 1165 Z"/><path fill="#efdfdf" d="M1056 1172 L1100 1167 L1087 1203 L1059 1206 Z"/><path fill="#ece7e0" d="M1057 1214 L1070 1212 L1068 1235 L1044 1238 Z"/><path fill="#e6e2de" d="M1076 1212 L1089 1212 L1098 1235 L1074 1236 Z"/><path fill="#ece7e0" d="M1043 1245 L1069 1244 L1075 1289 L1052 1292 Z"/><path fill="#efdfdf" d="M1074 1244 L1099 1242 L1102 1284 L1080 1288 Z"/><path fill="#dddad6" d="M1053 1302 L1075 1297 L1067 1341 L1044 1345 Z"/><path fill="#dddad6" d="M1080 1297 L1103 1293 L1096 1338 L1072 1342 Z"/><path fill="#f1e5e5" d="M1045 1350 L1093 1345 L1096 1367 L1049 1366 Z"/><path fill="#f1e5e5" d="M1049 1370 L1096 1371 L1100 1393 L1053 1386 Z"/><path fill="#e6e2de" d="M1050 1392 L1074 1396 L1073 1440 L1054 1439 Z"/><path fill="#dddad6" d="M1078 1396 L1101 1400 L1096 1442 L1077 1440 Z"/><path fill="#ece7e0" d="M1055 1448 L1072 1449 L1069 1477 L1050 1478 Z"/><path fill="#d8ecc8" d="M1077 1449 L1094 1450 L1094 1478 L1074 1478 Z"/><path fill="#efdfdf" d="M1051 1485 L1093 1486 L1107 1519 L1058 1527 Z"/><path fill="#f1e5e5" d="M1057 1535 L1080 1530 L1074 1571 L1050 1562 Z"/><path fill="#e6e2de" d="M1085 1530 L1109 1525 L1102 1580 L1078 1571 Z"/><path fill="#efdfdf" d="M1051 1569 L1099 1585 L1091 1602 L1054 1592 Z"/><path fill="#e6e2de" d="M1053 1597 L1090 1606 L1083 1622 L1056 1619 Z"/><path fill="#efdfdf" d="M1106 93 L1144 103 L1146 126 L1104 117 Z"/><path fill="#e8e1e8" d="M1103 122 L1145 130 L1148 153 L1101 146 Z"/><path fill="#f3efc6" d="M1100 151 L1147 158 L1131 188 L1094 179 Z"/><path fill="#dddad6" d="M1093 185 L1111 191 L1126 230 L1110 220 Z"/><path fill="#dddad6" d="M1115 190 L1133 197 L1145 239 L1129 229 Z"/><path fill="#f1e5e5" d="M1111 229 L1126 238 L1126 281 L1101 274 Z"/><path fill="#dddad6" d="M1130 239 L1146 248 L1154 288 L1130 281 Z"/><path fill="#f1e5e5" d="M1102 282 L1152 294 L1149 316 L1089 321 Z"/><path fill="#e6e2de" d="M1088 328 L1116 325 L1113 376 L1091 369 Z"/><path fill="#e6e2de" d="M1121 325 L1151 322 L1141 383 L1118 376 Z"/><path fill="#e6e2de" d="M1093 376 L1137 388 L1145 406 L1104 391 Z"/><path fill="#efdfdf" d="M1103 394 L1144 409 L1152 426 L1114 410 Z"/><path fill="#e8e1e8" d="M1110 415 L1130 424 L1116 470 L1097 469 Z"/><path fill="#e6e2de" d="M1134 425 L1153 433 L1139 471 L1120 471 Z"/><path fill="#ece7e0" d="M1098 476 L1136 479 L1141 515 L1106 498 Z"/><path fill="#efdfdf" d="M1103 505 L1120 514 L1117 557 L1094 550 Z"/><path fill="#efdfdf" d="M1125 514 L1143 523 L1146 566 L1122 558 Z"/><path fill="#efdfdf" d="M1093 558 L1118 567 L1127 608 L1110 599 Z"/><path fill="#f1e5e5" d="M1122 566 L1145 575 L1148 615 L1131 607 Z"/><path fill="#efdfdf" d="M1111 609 L1145 621 L1140 648 L1095 649 Z"/><path fill="#dddad6" d="M1096 653 L1139 654 L1142 674 L1099 668 Z"/><path fill="#dddad6" d="M1099 672 L1141 677 L1144 697 L1102 687 Z"/><path fill="#dddad6" d="M1100 692 L1145 703 L1130 752 L1105 746 Z"/><path fill="#efdfdf" d="M1104 755 L1115 758 L1116 786 L1100 787 Z"/><path fill="#dddad6" d="M1119 758 L1130 762 L1136 786 L1120 786 Z"/><path fill="#dddad6" d="M1102 793 L1135 793 L1130 807 L1105 816 Z"/><path fill="#dddad6" d="M1106 822 L1132 812 L1126 827 L1108 844 Z"/><path fill="#dddad6" d="M1110 850 L1130 832 L1152 873 L1105 867 Z"/><path fill="#d8ecc8" d="M1105 872 L1151 878 L1143 903 L1104 899 Z"/><path fill="#dddad6" d="M1103 904 L1143 908 L1135 933 L1102 930 Z"/><path fill="#ece7e0" d="M1102 935 L1134 939 L1133 955 L1100 954 Z"/><path fill="#e6e2de" d="M1100 958 L1133 960 L1132 976 L1098 977 Z"/><path fill="#f1e5e5" d="M1096 984 L1113 984 L1118 1023 L1097 1019 Z"/><path fill="#e8e1e8" d="M1118 983 L1135 983 L1143 1027 L1122 1023 Z"/><path fill="#e6e2de" d="M1097 1027 L1118 1032 L1119 1062 L1103 1066 Z"/><path fill="#efdfdf" d="M1123 1031 L1143 1035 L1140 1057 L1125 1062 Z"/><path fill="#f1e5e5" d="M1105 1074 L1140 1065 L1134 1104 L1112 1113 Z"/><path fill="#e6e2de" d="M1114 1120 L1134 1112 L1129 1126 L1110 1137 Z"/><path fill="#e6e2de" d="M1112 1142 L1130 1132 L1125 1146 L1107 1160 Z"/><path fill="#efdfdf" d="M1107 1168 L1128 1152 L1131 1195 L1094 1203 Z"/><path fill="#efdfdf" d="M1095 1209 L1130 1202 L1139 1228 L1101 1221 Z"/><path fill="#f1e5e5" d="M1100 1225 L1138 1232 L1148 1259 L1106 1238 Z"/><path fill="#e6e2de" d="M1105 1241 L1147 1262 L1142 1273 L1108 1262 Z"/><path fill="#e6e2de" d="M1107 1266 L1141 1276 L1136 1286 L1110 1286 Z"/><path fill="#efdfdf" d="M1107 1293 L1137 1293 L1136 1341 L1101 1339 Z"/><path fill="#f3efc6" d="M1102 1345 L1134 1348 L1136 1360 L1105 1366 Z"/><path fill="#e6e2de" d="M1106 1371 L1137 1365 L1138 1377 L1108 1392 Z"/><path fill="#dddad6" d="M1109 1396 L1140 1381 L1139 1402 L1104 1417 Z"/><path fill="#f1e5e5" d="M1106 1422 L1140 1406 L1140 1427 L1101 1443 Z"/><path fill="#ece7e0" d="M1101 1449 L1142 1431 L1131 1484 L1100 1478 Z"/><path fill="#f1e5e5" d="M1099 1486 L1114 1490 L1120 1518 L1112 1516 Z"/><path fill="#e6e2de" d="M1118 1489 L1132 1493 L1131 1520 L1123 1518 Z"/><path fill="#dddad6" d="M1115 1525 L1130 1528 L1138 1546 L1111 1549 Z"/><path fill="#efdfdf" d="M1112 1556 L1139 1552 L1147 1572 L1108 1581 Z"/><path fill="#e6e2de" d="M1106 1590 L1125 1583 L1118 1615 L1090 1622 Z"/><path fill="#e6e2de" d="M1130 1583 L1149 1578 L1151 1609 L1123 1615 Z"/><path fill="#e6e2de" d="M1151 105 L1174 99 L1174 146 L1154 151 Z"/><path fill="#d8ecc8" d="M1178 99 L1201 92 L1199 139 L1178 145 Z"/><path fill="#e6e2de" d="M1156 160 L1197 147 L1173 181 L1138 189 Z"/><path fill="#dddad6" d="M1137 196 L1155 193 L1172 240 L1148 239 Z"/><path fill="#f1e5e5" d="M1158 192 L1176 190 L1200 240 L1176 239 Z"/><path fill="#efdfdf" d="M1151 247 L1200 247 L1193 289 L1160 289 Z"/><path fill="#ece7e0" d="M1160 296 L1192 295 L1175 320 L1157 315 Z"/><path fill="#dddad6" d="M1155 323 L1174 329 L1186 383 L1145 383 Z"/><path fill="#e6e2de" d="M1147 389 L1184 389 L1190 399 L1153 406 Z"/><path fill="#e6e2de" d="M1154 409 L1191 403 L1196 412 L1160 426 Z"/><path fill="#dddad6" d="M1160 433 L1198 416 L1200 466 L1143 472 Z"/><path fill="#f1e5e5" d="M1144 477 L1199 471 L1189 485 L1147 495 Z"/><path fill="#e6e2de" d="M1147 498 L1190 488 L1180 502 L1149 516 Z"/><path fill="#efdfdf" d="M1149 522 L1182 507 L1184 557 L1150 566 Z"/><path fill="#e6e2de" d="M1152 573 L1185 565 L1185 598 L1153 615 Z"/><path fill="#f3efc6" d="M1154 622 L1186 605 L1198 649 L1148 649 Z"/><path fill="#dddad6" d="M1147 655 L1199 654 L1182 701 L1152 696 Z"/><path fill="#e8e1e8" d="M1149 705 L1164 707 L1156 745 L1134 753 Z"/><path fill="#e6e2de" d="M1168 708 L1182 710 L1180 738 L1160 745 Z"/><path fill="#efdfdf" d="M1136 759 L1179 745 L1175 780 L1142 786 Z"/><path fill="#dddad6" d="M1141 794 L1157 791 L1165 829 L1135 824 Z"/><path fill="#efdfdf" d="M1162 790 L1179 788 L1201 836 L1170 829 Z"/><path fill="#e6e2de" d="M1135 831 L1165 838 L1171 877 L1156 871 Z"/><path fill="#dddad6" d="M1170 838 L1200 843 L1189 882 L1176 877 Z"/><path fill="#efdfdf" d="M1158 880 L1187 890 L1191 925 L1142 933 Z"/><path fill="#ece7e0" d="M1143 939 L1191 932 L1182 962 L1140 975 Z"/><path fill="#dddad6" d="M1141 982 L1183 968 L1173 1006 L1148 1027 Z"/><path fill="#efdfdf" d="M1151 1031 L1174 1013 L1177 1030 L1148 1043 Z"/><path fill="#e6e2de" d="M1150 1047 L1178 1034 L1182 1051 L1148 1058 Z"/><path fill="#e6e2de" d="M1147 1065 L1184 1056 L1191 1104 L1141 1105 Z"/><path fill="#e6e2de" d="M1141 1111 L1191 1110 L1179 1149 L1134 1145 Z"/><path fill="#efdfdf" d="M1134 1151 L1179 1156 L1186 1193 L1138 1195 Z"/><path fill="#ece7e0" d="M1138 1202 L1187 1200 L1196 1247 L1154 1258 Z"/><path fill="#e6e2de" d="M1156 1265 L1196 1252 L1175 1281 L1144 1286 Z"/><path fill="#efdfdf" d="M1143 1293 L1176 1289 L1197 1341 L1142 1342 Z"/><path fill="#e6e2de" d="M1143 1347 L1196 1346 L1188 1367 L1146 1360 Z"/><path fill="#e6e2de" d="M1145 1364 L1188 1370 L1181 1390 L1148 1377 Z"/><path fill="#e6e2de" d="M1145 1382 L1162 1390 L1160 1431 L1147 1423 Z"/><path fill="#f1e5e5" d="M1165 1390 L1182 1398 L1176 1440 L1163 1432 Z"/><path fill="#e6e2de" d="M1147 1432 L1174 1449 L1198 1482 L1138 1485 Z"/><path fill="#dddad6" d="M1138 1491 L1198 1487 L1174 1520 L1137 1522 Z"/><path fill="#ece7e0" d="M1137 1527 L1175 1528 L1195 1572 L1154 1569 Z"/><path fill="#ece7e0" d="M1156 1575 L1195 1576 L1186 1590 L1157 1591 Z"/><path fill="#f1e5e5" d="M1157 1595 L1186 1595 L1178 1608 L1159 1610 Z"/><path fill="#dddad6" d="M1203 92 L1212 99 L1213 139 L1202 139 Z"/><path fill="#dddad6" d="M1214 99 L1223 106 L1226 140 L1215 139 Z"/><path fill="#dddad6" d="M1201 149 L1212 148 L1210 190 L1180 182 Z"/><path fill="#f3efc6" d="M1216 149 L1227 149 L1244 199 L1214 190 Z"/><path fill="#d8ecc8" d="M1179 189 L1210 199 L1217 241 L1204 239 Z"/><path fill="#e6e2de" d="M1214 199 L1244 207 L1234 241 L1222 240 Z"/><path fill="#e6e2de" d="M1206 249 L1233 250 L1224 292 L1200 289 Z"/><path fill="#dddad6" d="M1201 296 L1221 298 L1231 311 L1191 307 Z"/><path fill="#e6e2de" d="M1191 311 L1231 314 L1241 328 L1181 324 Z"/><path fill="#dddad6" d="M1179 329 L1209 332 L1215 375 L1190 383 Z"/><path fill="#e6e2de" d="M1214 331 L1243 334 L1244 367 L1220 374 Z"/><path fill="#e6e2de" d="M1193 390 L1216 383 L1222 411 L1204 408 Z"/><path fill="#ece7e0" d="M1222 382 L1245 375 L1247 413 L1228 410 Z"/><path fill="#efdfdf" d="M1204 416 L1246 421 L1245 473 L1207 466 Z"/><path fill="#f1e5e5" d="M1208 472 L1243 479 L1244 496 L1199 485 Z"/><path fill="#efdfdf" d="M1198 489 L1243 499 L1244 518 L1190 502 Z"/><path fill="#e8e1e8" d="M1188 506 L1243 522 L1221 550 L1191 557 Z"/><path fill="#ece7e0" d="M1191 564 L1222 558 L1237 614 L1193 598 Z"/><path fill="#e6e2de" d="M1193 603 L1235 618 L1236 626 L1200 624 Z"/><path fill="#dddad6" d="M1200 628 L1236 630 L1236 638 L1206 648 Z"/><path fill="#dddad6" d="M1205 656 L1238 643 L1229 690 L1188 702 Z"/><path fill="#e8e1e8" d="M1187 710 L1206 704 L1202 735 L1185 738 Z"/><path fill="#d8ecc8" d="M1211 704 L1229 698 L1225 732 L1207 735 Z"/><path fill="#efdfdf" d="M1187 745 L1224 740 L1233 783 L1183 780 Z"/><path fill="#efdfdf" d="M1182 787 L1207 789 L1214 832 L1204 834 Z"/><path fill="#ece7e0" d="M1210 789 L1234 791 L1228 829 L1218 832 Z"/><path fill="#e8e1e8" d="M1208 842 L1226 837 L1234 857 L1201 860 Z"/><path fill="#efdfdf" d="M1202 865 L1235 862 L1244 883 L1195 885 Z"/><path fill="#e6e2de" d="M1195 889 L1244 887 L1241 910 L1197 906 Z"/><path fill="#ece7e0" d="M1197 910 L1241 914 L1239 937 L1200 927 Z"/><path fill="#dddad6" d="M1198 933 L1239 942 L1221 980 L1191 962 Z"/><path fill="#e6e2de" d="M1190 968 L1218 984 L1220 995 L1186 986 Z"/><path fill="#e6e2de" d="M1186 990 L1219 999 L1220 1009 L1182 1008 Z"/><path fill="#dddad6" d="M1180 1013 L1200 1015 L1212 1059 L1189 1048 Z"/><path fill="#f1e5e5" d="M1204 1015 L1224 1016 L1240 1069 L1216 1058 Z"/><path fill="#ece7e0" d="M1191 1055 L1238 1073 L1237 1089 L1196 1079 Z"/><path fill="#efdfdf" d="M1195 1083 L1236 1093 L1235 1109 L1199 1105 Z"/><path fill="#efdfdf" d="M1198 1111 L1235 1115 L1238 1153 L1187 1150 Z"/><path fill="#dddad6" d="M1185 1157 L1210 1158 L1206 1192 L1192 1191 Z"/><path fill="#f1e5e5" d="M1215 1159 L1239 1160 L1226 1191 L1211 1192 Z"/><path fill="#efdfdf" d="M1193 1200 L1225 1200 L1222 1233 L1202 1245 Z"/><path fill="#e6e2de" d="M1204 1252 L1222 1241 L1233 1270 L1193 1265 Z"/><path fill="#e6e2de" d="M1193 1270 L1232 1275 L1245 1306 L1183 1284 Z"/><path fill="#e6e2de" d="M1182 1288 L1244 1310 L1229 1336 L1203 1340 Z"/><path fill="#ece7e0" d="M1205 1347 L1228 1343 L1227 1365 L1197 1366 Z"/><path fill="#efdfdf" d="M1197 1372 L1227 1370 L1226 1393 L1189 1392 Z"/><path fill="#f1e5e5" d="M1188 1397 L1226 1399 L1231 1423 L1181 1441 Z"/><path fill="#e6e2de" d="M1182 1445 L1232 1428 L1237 1457 L1194 1462 Z"/><path fill="#efdfdf" d="M1194 1466 L1237 1461 L1243 1489 L1207 1482 Z"/><path fill="#dddad6" d="M1202 1490 L1220 1491 L1201 1519 L1181 1521 Z"/><path fill="#e6e2de" d="M1224 1493 L1243 1495 L1223 1520 L1204 1521 Z"/><path fill="#efdfdf" d="M1181 1528 L1200 1529 L1211 1571 L1199 1570 Z"/><path fill="#dddad6" d="M1203 1529 L1222 1530 L1226 1571 L1214 1570 Z"/><path fill="#f1e5e5" d="M1202 1579 L1225 1579 L1228 1609 L1186 1608 Z"/><path fill="#e6e2de" d="M1227 105 L1248 106 L1252 141 L1229 140 Z"/><path fill="#e6e2de" d="M1253 106 L1274 107 L1279 142 L1257 141 Z"/><path fill="#dddad6" d="M1230 148 L1254 150 L1264 193 L1247 198 Z"/><path fill="#e6e2de" d="M1258 149 L1280 150 L1284 187 L1268 192 Z"/><path fill="#f1e5e5" d="M1251 206 L1284 195 L1290 234 L1240 243 Z"/><path fill="#ece7e0" d="M1238 251 L1262 245 L1256 292 L1229 293 Z"/><path fill="#efdfdf" d="M1267 246 L1292 241 L1288 292 L1261 292 Z"/><path fill="#e6e2de" d="M1230 299 L1256 301 L1262 327 L1247 325 Z"/><path fill="#efdfdf" d="M1261 300 L1287 300 L1283 328 L1268 327 Z"/><path fill="#e6e2de" d="M1250 333 L1282 336 L1287 378 L1251 367 Z"/><path fill="#d8ecc8" d="M1250 374 L1286 385 L1272 415 L1253 413 Z"/><path fill="#efdfdf" d="M1250 422 L1260 423 L1259 461 L1249 473 Z"/><path fill="#dddad6" d="M1263 423 L1272 424 L1271 450 L1261 461 Z"/><path fill="#efdfdf" d="M1252 481 L1271 459 L1283 506 L1250 516 Z"/><path fill="#e8e1e8" d="M1248 525 L1264 518 L1249 545 L1228 551 Z"/><path fill="#d8ecc8" d="M1268 520 L1284 513 L1274 542 L1253 547 Z"/><path fill="#dddad6" d="M1229 556 L1271 550 L1268 576 L1236 582 Z"/><path fill="#f3efc6" d="M1237 588 L1268 582 L1265 608 L1243 613 Z"/><path fill="#e6e2de" d="M1244 620 L1266 615 L1274 647 L1245 636 Z"/><path fill="#f1e5e5" d="M1243 643 L1275 654 L1284 705 L1236 691 Z"/><path fill="#d8ecc8" d="M1235 697 L1282 711 L1283 734 L1231 734 Z"/><path fill="#efdfdf" d="M1230 740 L1255 741 L1263 780 L1238 782 Z"/><path fill="#efdfdf" d="M1260 740 L1285 741 L1292 777 L1268 779 Z"/><path fill="#f3efc6" d="M1239 791 L1263 788 L1255 832 L1232 830 Z"/><path fill="#dddad6" d="M1268 788 L1293 785 L1283 835 L1260 833 Z"/><path fill="#f1e5e5" d="M1234 836 L1280 842 L1276 863 L1243 857 Z"/><path fill="#e6e2de" d="M1243 862 L1276 869 L1273 889 L1253 882 Z"/><path fill="#e6e2de" d="M1252 888 L1272 895 L1276 911 L1250 910 Z"/><path fill="#d8ecc8" d="M1250 915 L1276 916 L1280 932 L1247 937 Z"/><path fill="#efdfdf" d="M1246 944 L1281 937 L1269 979 L1227 982 Z"/><path fill="#d8ecc8" d="M1227 987 L1268 986 L1272 1020 L1229 1009 Z"/><path fill="#efdfdf" d="M1229 1014 L1271 1025 L1278 1040 L1238 1040 Z"/><path fill="#efdfdf" d="M1238 1044 L1278 1045 L1284 1060 L1246 1070 Z"/><path fill="#e6e2de" d="M1248 1074 L1284 1064 L1277 1082 L1245 1089 Z"/><path fill="#f1e5e5" d="M1246 1094 L1278 1087 L1271 1105 L1243 1109 Z"/><path fill="#e6e2de" d="M1243 1115 L1273 1112 L1292 1159 L1246 1152 Z"/><path fill="#f1e5e5" d="M1245 1160 L1291 1165 L1278 1202 L1232 1194 Z"/><path fill="#f1e5e5" d="M1231 1199 L1277 1208 L1282 1240 L1230 1235 Z"/><path fill="#e6e2de" d="M1228 1241 L1254 1245 L1257 1292 L1248 1304 Z"/><path fill="#dddad6" d="M1258 1245 L1283 1247 L1270 1280 L1261 1292 Z"/><path fill="#efdfdf" d="M1252 1312 L1269 1290 L1281 1341 L1236 1337 Z"/><path fill="#e6e2de" d="M1234 1344 L1256 1347 L1260 1389 L1232 1392 Z"/><path fill="#d8ecc8" d="M1261 1346 L1282 1349 L1292 1388 L1265 1389 Z"/><path fill="#efdfdf" d="M1234 1398 L1291 1394 L1289 1444 L1240 1423 Z"/><path fill="#efdfdf" d="M1239 1429 L1287 1450 L1278 1474 L1249 1488 Z"/><path fill="#efdfdf" d="M1250 1496 L1279 1482 L1277 1519 L1228 1522 Z"/><path fill="#e6e2de" d="M1227 1528 L1278 1526 L1285 1571 L1232 1572 Z"/><path fill="#e6e2de" d="M1231 1580 L1256 1579 L1250 1617 L1235 1608 Z"/><path fill="#efdfdf" d="M1260 1580 L1286 1578 L1271 1626 L1255 1618 Z"/><path fill="#efdfdf" d="M1281 105 L1324 109 L1325 126 L1284 123 Z"/><path fill="#efdfdf" d="M1284 126 L1324 129 L1325 146 L1287 144 Z"/><path fill="#ece7e0" d="M1287 148 L1325 150 L1325 163 L1289 166 Z"/><path fill="#dddad6" d="M1289 170 L1325 167 L1325 180 L1291 188 Z"/><path fill="#efdfdf" d="M1292 193 L1326 184 L1320 210 L1295 211 Z"/><path fill="#e6e2de" d="M1295 217 L1320 216 L1315 240 L1298 233 Z"/><path fill="#e6e2de" d="M1295 241 L1305 245 L1305 280 L1292 291 Z"/><path fill="#ece7e0" d="M1308 245 L1316 249 L1321 270 L1308 280 Z"/><path fill="#f1e5e5" d="M1292 300 L1305 290 L1309 330 L1288 328 Z"/><path fill="#e6e2de" d="M1309 289 L1323 279 L1334 333 L1313 330 Z"/><path fill="#efdfdf" d="M1290 335 L1332 339 L1331 353 L1292 355 Z"/><path fill="#d8ecc8" d="M1292 359 L1332 357 L1331 372 L1294 379 Z"/><path fill="#efdfdf" d="M1293 386 L1332 376 L1316 425 L1278 417 Z"/><path fill="#e6e2de" d="M1277 423 L1314 432 L1317 469 L1277 453 Z"/><path fill="#e6e2de" d="M1276 458 L1316 476 L1329 505 L1290 505 Z"/><path fill="#e8e1e8" d="M1288 514 L1307 512 L1294 550 L1279 543 Z"/><path fill="#e6e2de" d="M1311 513 L1330 512 L1314 558 L1298 551 Z"/><path fill="#efdfdf" d="M1277 552 L1293 559 L1300 605 L1271 606 Z"/><path fill="#e6e2de" d="M1297 559 L1314 568 L1333 605 L1304 605 Z"/><path fill="#f3efc6" d="M1273 613 L1332 611 L1337 642 L1282 647 Z"/><path fill="#efdfdf" d="M1281 654 L1308 652 L1308 698 L1288 705 Z"/><path fill="#efdfdf" d="M1312 652 L1339 649 L1332 692 L1313 698 Z"/><path fill="#f1e5e5" d="M1291 712 L1331 700 L1327 735 L1292 733 Z"/><path fill="#e6e2de" d="M1290 741 L1307 742 L1307 781 L1297 776 Z"/><path fill="#f1e5e5" d="M1310 742 L1328 743 L1320 786 L1310 782 Z"/><path fill="#f1e5e5" d="M1297 786 L1318 796 L1328 843 L1288 836 Z"/><path fill="#e6e2de" d="M1287 844 L1327 850 L1327 879 L1280 889 Z"/><path fill="#dddad6" d="M1280 895 L1328 886 L1328 928 L1288 930 Z"/><path fill="#efdfdf" d="M1288 938 L1328 935 L1321 965 L1276 980 Z"/><path fill="#e6e2de" d="M1275 987 L1297 980 L1301 1016 L1278 1019 Z"/><path fill="#ece7e0" d="M1302 979 L1324 972 L1330 1013 L1307 1015 Z"/><path fill="#dddad6" d="M1280 1026 L1329 1020 L1312 1053 L1291 1057 Z"/><path fill="#efdfdf" d="M1291 1066 L1313 1061 L1321 1113 L1279 1104 Z"/><path fill="#efdfdf" d="M1278 1111 L1299 1117 L1311 1156 L1296 1157 Z"/><path fill="#e6e2de" d="M1303 1116 L1322 1122 L1329 1154 L1315 1155 Z"/><path fill="#e8e1e8" d="M1296 1167 L1311 1164 L1307 1198 L1284 1202 Z"/><path fill="#efdfdf" d="M1316 1165 L1330 1162 L1334 1195 L1312 1198 Z"/><path fill="#e6e2de" d="M1285 1209 L1333 1203 L1321 1253 L1290 1240 Z"/><path fill="#ece7e0" d="M1287 1248 L1302 1254 L1299 1285 L1274 1282 Z"/><path fill="#ece7e0" d="M1307 1255 L1322 1261 L1330 1290 L1305 1286 Z"/><path fill="#f1e5e5" d="M1275 1287 L1328 1295 L1331 1310 L1282 1313 Z"/><path fill="#efdfdf" d="M1282 1316 L1332 1314 L1334 1328 L1288 1342 Z"/><path fill="#dddad6" d="M1288 1348 L1336 1333 L1327 1394 L1298 1387 Z"/><path fill="#ece7e0" d="M1298 1395 L1326 1402 L1334 1424 L1295 1444 Z"/><path fill="#efdfdf" d="M1296 1450 L1335 1429 L1333 1477 L1286 1475 Z"/><path fill="#efdfdf" d="M1286 1481 L1333 1484 L1336 1518 L1285 1519 Z"/><path fill="#f1e5e5" d="M1284 1527 L1309 1526 L1309 1571 L1291 1569 Z"/><path fill="#dddad6" d="M1313 1526 L1338 1525 L1331 1571 L1313 1571 Z"/><path fill="#f1e5e5" d="M1292 1578 L1329 1579 L1337 1611 L1275 1627 Z"/><path fill="#e6e2de" d="M1333 109 L1368 94 L1375 132 L1332 145 Z"/><path fill="#e6e2de" d="M1333 152 L1352 146 L1354 178 L1333 177 Z"/><path fill="#f1e5e5" d="M1357 145 L1377 139 L1381 178 L1359 177 Z"/><path fill="#e6e2de" d="M1333 186 L1380 186 L1363 246 L1321 241 Z"/><path fill="#ece7e0" d="M1322 247 L1361 253 L1370 288 L1328 272 Z"/><path fill="#f1e5e5" d="M1327 277 L1370 294 L1366 319 L1339 332 Z"/><path fill="#efdfdf" d="M1342 339 L1366 327 L1366 353 L1340 352 Z"/><path fill="#e6e2de" d="M1340 358 L1366 359 L1367 386 L1340 372 Z"/><path fill="#f1e5e5" d="M1337 378 L1366 392 L1363 429 L1322 426 Z"/><path fill="#dddad6" d="M1322 431 L1361 435 L1370 451 L1324 449 Z"/><path fill="#efdfdf" d="M1324 453 L1370 455 L1380 472 L1325 471 Z"/><path fill="#e6e2de" d="M1325 474 L1380 475 L1372 494 L1332 489 Z"/><path fill="#f1e5e5" d="M1331 493 L1371 498 L1364 517 L1338 507 Z"/><path fill="#ece7e0" d="M1337 511 L1363 522 L1372 539 L1329 533 Z"/><path fill="#ece7e0" d="M1328 538 L1372 543 L1381 561 L1319 561 Z"/><path fill="#e8e1e8" d="M1319 564 L1381 564 L1371 584 L1330 583 Z"/><path fill="#f1e5e5" d="M1330 588 L1371 588 L1362 606 L1340 605 Z"/><path fill="#efdfdf" d="M1340 611 L1362 612 L1372 629 L1343 624 Z"/><path fill="#efdfdf" d="M1343 629 L1372 634 L1382 652 L1346 643 Z"/><path fill="#f1e5e5" d="M1345 648 L1382 656 L1372 669 L1343 668 Z"/><path fill="#e6e2de" d="M1342 673 L1371 674 L1360 687 L1338 693 Z"/><path fill="#f1e5e5" d="M1336 701 L1348 698 L1351 731 L1333 734 Z"/><path fill="#efdfdf" d="M1352 697 L1364 695 L1374 728 L1355 730 Z"/><path fill="#f1e5e5" d="M1331 743 L1351 739 L1339 784 L1323 787 Z"/><path fill="#dddad6" d="M1355 740 L1375 735 L1360 781 L1343 785 Z"/><path fill="#dddad6" d="M1323 796 L1339 794 L1347 837 L1332 843 Z"/><path fill="#e6e2de" d="M1343 793 L1359 791 L1365 831 L1350 837 Z"/><path fill="#ece7e0" d="M1333 852 L1347 846 L1345 878 L1333 877 Z"/><path fill="#dddad6" d="M1351 846 L1365 840 L1361 879 L1349 878 Z"/><path fill="#dddad6" d="M1334 886 L1360 888 L1375 920 L1335 928 Z"/><path fill="#efdfdf" d="M1337 933 L1375 926 L1373 947 L1333 947 Z"/><path fill="#efdfdf" d="M1333 952 L1373 951 L1372 972 L1330 966 Z"/><path fill="#dddad6" d="M1330 970 L1372 976 L1375 996 L1334 990 Z"/><path fill="#efdfdf" d="M1334 995 L1375 1000 L1378 1020 L1338 1015 Z"/><path fill="#d8ecc8" d="M1336 1021 L1378 1025 L1374 1064 L1320 1055 Z"/><path fill="#ece7e0" d="M1319 1060 L1374 1070 L1378 1099 L1327 1113 Z"/><path fill="#dddad6" d="M1329 1118 L1379 1104 L1369 1132 L1332 1135 Z"/><path fill="#efdfdf" d="M1333 1140 L1369 1137 L1360 1164 L1337 1156 Z"/><path fill="#dddad6" d="M1336 1161 L1358 1169 L1369 1177 L1339 1176 Z"/><path fill="#ece7e0" d="M1339 1180 L1369 1181 L1378 1190 L1341 1197 Z"/><path fill="#e6e2de" d="M1340 1203 L1380 1194 L1382 1249 L1327 1254 Z"/><path fill="#dddad6" d="M1327 1261 L1352 1259 L1356 1294 L1335 1289 Z"/><path fill="#e8e1e8" d="M1357 1259 L1382 1257 L1382 1297 L1361 1293 Z"/><path fill="#ece7e0" d="M1337 1297 L1379 1304 L1367 1327 L1343 1326 Z"/><path fill="#dddad6" d="M1340 1334 L1353 1335 L1354 1391 L1331 1393 Z"/><path fill="#d8ecc8" d="M1356 1335 L1370 1336 L1379 1389 L1357 1391 Z"/><path fill="#dddad6" d="M1333 1401 L1352 1400 L1353 1422 L1341 1421 Z"/><path fill="#f1e5e5" d="M1358 1400 L1378 1398 L1371 1423 L1359 1422 Z"/><path fill="#d8ecc8" d="M1342 1429 L1369 1431 L1368 1456 L1342 1450 Z"/><path fill="#efdfdf" d="M1341 1457 L1368 1463 L1367 1488 L1341 1479 Z"/><path fill="#dddad6" d="M1339 1485 L1351 1491 L1354 1515 L1342 1516 Z"/><path fill="#ece7e0" d="M1356 1491 L1368 1497 L1370 1514 L1359 1515 Z"/><path fill="#ece7e0" d="M1344 1524 L1370 1522 L1376 1549 L1341 1546 Z"/><path fill="#efdfdf" d="M1340 1552 L1376 1554 L1384 1583 L1337 1574 Z"/><path fill="#efdfdf" d="M1336 1580 L1357 1584 L1351 1607 L1343 1609 Z"/><path fill="#ece7e0" d="M1362 1585 L1383 1588 L1366 1605 L1357 1608 Z"/><path fill="#f1e5e5" d="M1374 94 L1396 98 L1397 138 L1381 129 Z"/><path fill="#f1e5e5" d="M1401 98 L1424 101 L1418 146 L1402 138 Z"/><path fill="#e6e2de" d="M1383 138 L1414 152 L1413 169 L1386 157 Z"/><path fill="#efdfdf" d="M1385 162 L1412 174 L1410 191 L1389 180 Z"/><path fill="#e6e2de" d="M1385 187 L1410 198 L1408 227 L1368 247 Z"/><path fill="#f1e5e5" d="M1369 254 L1387 245 L1394 283 L1375 286 Z"/><path fill="#efdfdf" d="M1392 244 L1411 235 L1418 278 L1399 282 Z"/><path fill="#e6e2de" d="M1378 293 L1418 285 L1427 318 L1374 320 Z"/><path fill="#e6e2de" d="M1372 327 L1398 326 L1398 375 L1372 385 Z"/><path fill="#efdfdf" d="M1403 326 L1429 324 L1429 365 L1403 375 Z"/><path fill="#dddad6" d="M1375 392 L1428 373 L1411 409 L1369 430 Z"/><path fill="#e6e2de" d="M1370 436 L1413 415 L1412 477 L1387 468 Z"/><path fill="#e6e2de" d="M1387 478 L1411 485 L1413 520 L1371 517 Z"/><path fill="#ece7e0" d="M1372 522 L1412 525 L1420 543 L1381 539 Z"/><path fill="#e6e2de" d="M1381 543 L1420 547 L1429 564 L1390 560 Z"/><path fill="#e6e2de" d="M1390 565 L1429 567 L1418 582 L1380 584 Z"/><path fill="#efdfdf" d="M1380 588 L1418 587 L1407 602 L1371 607 Z"/><path fill="#ece7e0" d="M1370 612 L1408 608 L1407 641 L1388 650 Z"/><path fill="#efdfdf" d="M1389 659 L1408 649 L1412 685 L1368 687 Z"/><path fill="#efdfdf" d="M1368 693 L1412 693 L1422 741 L1381 728 Z"/><path fill="#e6e2de" d="M1380 736 L1421 747 L1411 779 L1364 784 Z"/><path fill="#dddad6" d="M1363 791 L1385 789 L1386 826 L1369 831 Z"/><path fill="#efdfdf" d="M1390 789 L1412 787 L1408 821 L1391 826 Z"/><path fill="#efdfdf" d="M1371 839 L1407 829 L1414 868 L1365 880 Z"/><path fill="#efdfdf" d="M1367 886 L1415 874 L1417 918 L1382 919 Z"/><path fill="#dddad6" d="M1381 927 L1398 927 L1400 967 L1378 970 Z"/><path fill="#f1e5e5" d="M1402 926 L1419 926 L1425 963 L1404 966 Z"/><path fill="#efdfdf" d="M1380 978 L1425 971 L1427 1029 L1386 1019 Z"/><path fill="#ece7e0" d="M1386 1026 L1426 1035 L1428 1056 L1382 1065 Z"/><path fill="#ece7e0" d="M1382 1070 L1429 1062 L1429 1108 L1387 1098 Z"/><path fill="#ece7e0" d="M1386 1105 L1428 1114 L1427 1154 L1367 1165 Z"/><path fill="#f1e5e5" d="M1368 1169 L1426 1159 L1421 1176 L1378 1178 Z"/><path fill="#f1e5e5" d="M1378 1180 L1421 1179 L1417 1195 L1388 1189 Z"/><path fill="#efdfdf" d="M1386 1194 L1418 1201 L1424 1243 L1388 1249 Z"/><path fill="#ece7e0" d="M1387 1258 L1404 1254 L1405 1297 L1386 1297 Z"/><path fill="#efdfdf" d="M1408 1254 L1426 1251 L1429 1297 L1409 1297 Z"/><path fill="#ece7e0" d="M1386 1306 L1403 1305 L1393 1325 L1374 1328 Z"/><path fill="#e8e1e8" d="M1409 1306 L1427 1305 L1416 1324 L1398 1327 Z"/><path fill="#efdfdf" d="M1373 1336 L1393 1335 L1396 1385 L1382 1389 Z"/><path fill="#f1e5e5" d="M1396 1335 L1416 1333 L1412 1381 L1399 1385 Z"/><path fill="#dddad6" d="M1385 1398 L1411 1390 L1413 1432 L1377 1425 Z"/><path fill="#f1e5e5" d="M1376 1432 L1413 1440 L1403 1475 L1373 1488 Z"/><path fill="#e6e2de" d="M1374 1496 L1387 1491 L1399 1524 L1376 1514 Z"/><path fill="#f1e5e5" d="M1391 1489 L1406 1484 L1428 1535 L1403 1523 Z"/><path fill="#f1e5e5" d="M1376 1522 L1427 1541 L1422 1574 L1390 1581 Z"/><path fill="#dddad6" d="M1391 1589 L1422 1581 L1420 1628 L1370 1608 Z"/><path fill="#dddad6" d="M1429 101 L1471 102 L1463 154 L1423 148 Z"/><path fill="#efdfdf" d="M1421 156 L1440 159 L1438 190 L1417 191 Z"/><path fill="#efdfdf" d="M1445 159 L1463 162 L1465 191 L1443 191 Z"/><path fill="#e6e2de" d="M1418 197 L1463 196 L1460 216 L1418 211 Z"/><path fill="#ece7e0" d="M1417 215 L1459 220 L1457 240 L1417 229 Z"/><path fill="#efdfdf" d="M1414 235 L1435 241 L1441 285 L1423 277 Z"/><path fill="#dddad6" d="M1438 241 L1459 247 L1464 292 L1445 284 Z"/><path fill="#efdfdf" d="M1424 286 L1442 294 L1453 328 L1433 315 Z"/><path fill="#e6e2de" d="M1446 293 L1465 301 L1477 340 L1457 327 Z"/><path fill="#f1e5e5" d="M1435 323 L1475 343 L1475 351 L1436 344 Z"/><path fill="#f1e5e5" d="M1436 347 L1474 354 L1474 362 L1436 367 Z"/><path fill="#d8ecc8" d="M1434 374 L1475 366 L1452 413 L1420 408 Z"/><path fill="#e6e2de" d="M1417 416 L1434 419 L1442 471 L1417 477 Z"/><path fill="#e6e2de" d="M1437 419 L1454 422 L1472 466 L1446 471 Z"/><path fill="#f1e5e5" d="M1418 485 L1442 480 L1435 509 L1418 519 Z"/><path fill="#ece7e0" d="M1448 480 L1472 473 L1457 498 L1441 509 Z"/><path fill="#efdfdf" d="M1420 527 L1437 518 L1443 553 L1433 560 Z"/><path fill="#efdfdf" d="M1441 517 L1458 508 L1457 545 L1447 553 Z"/><path fill="#e8e1e8" d="M1438 568 L1456 554 L1454 578 L1426 582 Z"/><path fill="#dddad6" d="M1426 588 L1453 584 L1452 610 L1416 603 Z"/><path fill="#f3efc6" d="M1413 609 L1431 613 L1431 640 L1413 641 Z"/><path fill="#efdfdf" d="M1436 613 L1453 617 L1454 639 L1437 640 Z"/><path fill="#f1e5e5" d="M1415 647 L1453 645 L1459 663 L1417 665 Z"/><path fill="#e8e1e8" d="M1418 669 L1459 667 L1465 686 L1420 687 Z"/><path fill="#e6e2de" d="M1419 692 L1466 692 L1472 745 L1428 741 Z"/><path fill="#f1e5e5" d="M1429 748 L1471 751 L1473 793 L1419 781 Z"/><path fill="#e6e2de" d="M1418 786 L1472 798 L1468 827 L1414 823 Z"/><path fill="#dddad6" d="M1414 828 L1468 832 L1461 875 L1422 867 Z"/><path fill="#ece7e0" d="M1421 874 L1460 882 L1460 935 L1424 918 Z"/><path fill="#efdfdf" d="M1424 925 L1459 942 L1461 978 L1431 964 Z"/><path fill="#efdfdf" d="M1430 972 L1461 986 L1465 1006 L1432 1028 Z"/><path fill="#f3efc6" d="M1434 1035 L1467 1012 L1456 1064 L1435 1055 Z"/><path fill="#efdfdf" d="M1435 1063 L1456 1073 L1470 1102 L1435 1107 Z"/><path fill="#dddad6" d="M1435 1115 L1471 1108 L1457 1150 L1434 1153 Z"/><path fill="#ece7e0" d="M1433 1161 L1456 1159 L1462 1198 L1425 1194 Z"/><path fill="#efdfdf" d="M1424 1202 L1442 1204 L1450 1245 L1429 1242 Z"/><path fill="#efdfdf" d="M1446 1204 L1464 1207 L1475 1249 L1454 1245 Z"/><path fill="#f1e5e5" d="M1430 1250 L1474 1256 L1457 1287 L1433 1298 Z"/><path fill="#ece7e0" d="M1434 1305 L1457 1296 L1462 1329 L1422 1326 Z"/><path fill="#e6e2de" d="M1420 1334 L1440 1335 L1436 1376 L1416 1381 Z"/><path fill="#dddad6" d="M1444 1335 L1464 1337 L1461 1371 L1441 1376 Z"/><path fill="#dddad6" d="M1416 1390 L1437 1385 L1441 1436 L1418 1432 Z"/><path fill="#e6e2de" d="M1441 1385 L1462 1381 L1468 1440 L1445 1436 Z"/><path fill="#f1e5e5" d="M1420 1440 L1466 1447 L1473 1480 L1411 1477 Z"/><path fill="#e8e1e8" d="M1411 1481 L1472 1484 L1465 1503 L1423 1506 Z"/><path fill="#ece7e0" d="M1423 1511 L1466 1508 L1458 1526 L1434 1535 Z"/><path fill="#f1e5e5" d="M1433 1543 L1445 1538 L1444 1566 L1428 1573 Z"/><path fill="#f1e5e5" d="M1449 1537 L1461 1532 L1464 1559 L1448 1566 Z"/><path fill="#efdfdf" d="M1427 1582 L1445 1575 L1443 1620 L1425 1627 Z"/><path fill="#e6e2de" d="M1448 1575 L1466 1568 L1465 1613 L1447 1620 Z"/><path fill="#ece7e0" d="M1477 103 L1502 103 L1517 147 L1469 154 Z"/><path fill="#f1e5e5" d="M1471 159 L1517 152 L1509 166 L1471 174 Z"/><path fill="#e6e2de" d="M1472 177 L1510 170 L1502 184 L1472 192 Z"/><path fill="#e6e2de" d="M1469 199 L1485 194 L1486 237 L1463 238 Z"/><path fill="#ece7e0" d="M1490 194 L1506 190 L1513 235 L1490 236 Z"/><path fill="#efdfdf" d="M1464 246 L1512 243 L1503 280 L1469 292 Z"/><path fill="#ece7e0" d="M1470 299 L1504 288 L1506 330 L1482 339 Z"/><path fill="#dddad6" d="M1484 346 L1507 338 L1519 369 L1483 361 Z"/><path fill="#e6e2de" d="M1479 368 L1497 372 L1483 416 L1458 414 Z"/><path fill="#e6e2de" d="M1501 373 L1520 376 L1512 419 L1487 417 Z"/><path fill="#efdfdf" d="M1459 420 L1508 425 L1510 441 L1469 441 Z"/><path fill="#efdfdf" d="M1469 445 L1510 445 L1512 459 L1479 466 Z"/><path fill="#ece7e0" d="M1478 474 L1513 464 L1503 521 L1464 501 Z"/><path fill="#efdfdf" d="M1461 507 L1479 518 L1479 553 L1462 545 Z"/><path fill="#e6e2de" d="M1484 519 L1502 530 L1500 560 L1483 553 Z"/><path fill="#f1e5e5" d="M1462 554 L1498 568 L1502 602 L1459 609 Z"/><path fill="#f1e5e5" d="M1459 616 L1478 614 L1481 640 L1460 639 Z"/><path fill="#dddad6" d="M1484 613 L1503 610 L1507 641 L1487 639 Z"/><path fill="#f1e5e5" d="M1461 646 L1507 648 L1501 706 L1473 684 Z"/><path fill="#f1e5e5" d="M1472 692 L1499 713 L1496 730 L1477 744 Z"/><path fill="#e6e2de" d="M1479 752 L1498 739 L1515 783 L1479 792 Z"/><path fill="#d8ecc8" d="M1480 800 L1515 790 L1502 839 L1476 826 Z"/><path fill="#f1e5e5" d="M1475 834 L1500 847 L1521 872 L1468 875 Z"/><path fill="#efdfdf" d="M1468 882 L1522 877 L1514 922 L1466 936 Z"/><path fill="#e6e2de" d="M1466 943 L1488 937 L1492 976 L1467 978 Z"/><path fill="#f1e5e5" d="M1494 936 L1516 930 L1523 973 L1497 975 Z"/><path fill="#f1e5e5" d="M1469 985 L1522 980 L1519 1021 L1474 1006 Z"/><path fill="#ece7e0" d="M1472 1013 L1519 1027 L1499 1060 L1462 1065 Z"/><path fill="#dddad6" d="M1463 1070 L1497 1067 L1505 1082 L1470 1084 Z"/><path fill="#ece7e0" d="M1471 1088 L1505 1086 L1513 1101 L1478 1102 Z"/><path fill="#dddad6" d="M1478 1108 L1514 1105 L1506 1133 L1471 1128 Z"/><path fill="#efdfdf" d="M1470 1133 L1505 1139 L1498 1168 L1464 1153 Z"/><path fill="#dddad6" d="M1462 1158 L1497 1175 L1520 1205 L1469 1199 Z"/><path fill="#efdfdf" d="M1468 1205 L1520 1211 L1498 1251 L1480 1249 Z"/><path fill="#dddad6" d="M1481 1257 L1496 1259 L1509 1277 L1474 1271 Z"/><path fill="#dddad6" d="M1473 1275 L1508 1281 L1521 1302 L1465 1291 Z"/><path fill="#efdfdf" d="M1464 1295 L1521 1306 L1514 1337 L1471 1330 Z"/><path fill="#dddad6" d="M1468 1337 L1489 1341 L1488 1383 L1466 1372 Z"/><path fill="#efdfdf" d="M1494 1341 L1516 1345 L1514 1395 L1492 1384 Z"/><path fill="#efdfdf" d="M1467 1379 L1511 1400 L1509 1409 L1471 1408 Z"/><path fill="#dddad6" d="M1471 1412 L1509 1413 L1507 1422 L1474 1441 Z"/><path fill="#efdfdf" d="M1474 1447 L1510 1426 L1500 1488 L1480 1478 Z"/><path fill="#e6e2de" d="M1478 1488 L1487 1492 L1488 1528 L1466 1524 Z"/><path fill="#e6e2de" d="M1492 1492 L1502 1498 L1515 1534 L1492 1528 Z"/><path fill="#f1e5e5" d="M1467 1530 L1513 1539 L1505 1548 L1470 1544 Z"/><path fill="#e6e2de" d="M1470 1547 L1505 1551 L1497 1559 L1472 1561 Z"/><path fill="#efdfdf" d="M1469 1568 L1484 1567 L1490 1613 L1469 1613 Z"/><path fill="#ece7e0" d="M1487 1566 L1502 1566 L1514 1612 L1493 1612 Z"/><path fill="#d8ecc8" d="M1507 102 L1529 100 L1541 148 L1522 145 Z"/><path fill="#e6e2de" d="M1533 100 L1556 97 L1563 149 L1544 147 Z"/><path fill="#f1e5e5" d="M1523 155 L1540 155 L1534 183 L1511 182 Z"/><path fill="#efdfdf" d="M1546 156 L1562 158 L1562 186 L1539 184 Z"/><path fill="#f1e5e5" d="M1510 189 L1534 192 L1534 233 L1517 235 Z"/><path fill="#e6e2de" d="M1538 192 L1561 194 L1556 230 L1539 233 Z"/><path fill="#dddad6" d="M1517 244 L1534 242 L1530 277 L1509 279 Z"/><path fill="#e6e2de" d="M1539 242 L1555 240 L1555 275 L1534 277 Z"/><path fill="#efdfdf" d="M1510 287 L1554 283 L1554 339 L1513 330 Z"/><path fill="#e6e2de" d="M1513 337 L1531 343 L1541 366 L1524 368 Z"/><path fill="#ece7e0" d="M1537 342 L1555 347 L1562 363 L1546 364 Z"/><path fill="#ece7e0" d="M1526 376 L1563 370 L1560 427 L1517 420 Z"/><path fill="#e6e2de" d="M1516 428 L1535 431 L1533 465 L1519 457 Z"/><path fill="#f1e5e5" d="M1540 432 L1560 435 L1553 474 L1538 466 Z"/><path fill="#d8ecc8" d="M1520 464 L1549 479 L1557 489 L1515 491 Z"/><path fill="#ece7e0" d="M1515 495 L1558 493 L1565 502 L1509 523 Z"/><path fill="#efdfdf" d="M1510 526 L1566 505 L1561 529 L1508 543 Z"/><path fill="#e8e1e8" d="M1508 546 L1562 532 L1557 555 L1507 563 Z"/><path fill="#ece7e0" d="M1506 568 L1558 560 L1553 604 L1509 603 Z"/><path fill="#dddad6" d="M1509 609 L1553 611 L1564 652 L1515 642 Z"/><path fill="#dddad6" d="M1514 648 L1564 658 L1564 689 L1506 707 Z"/><path fill="#f1e5e5" d="M1508 712 L1565 694 L1562 738 L1504 732 Z"/><path fill="#efdfdf" d="M1503 737 L1562 744 L1547 794 L1522 782 Z"/><path fill="#efdfdf" d="M1521 791 L1546 802 L1556 826 L1507 840 Z"/><path fill="#efdfdf" d="M1508 845 L1557 832 L1565 879 L1529 870 Z"/><path fill="#dddad6" d="M1527 879 L1545 882 L1539 928 L1521 921 Z"/><path fill="#efdfdf" d="M1548 883 L1567 886 L1562 937 L1543 929 Z"/><path fill="#f1e5e5" d="M1520 930 L1538 938 L1538 971 L1527 972 Z"/><path fill="#d8ecc8" d="M1542 938 L1559 945 L1552 970 L1542 971 Z"/><path fill="#efdfdf" d="M1529 981 L1551 980 L1556 1011 L1526 1020 Z"/><path fill="#efdfdf" d="M1523 1030 L1538 1023 L1529 1067 L1505 1061 Z"/><path fill="#ece7e0" d="M1542 1024 L1558 1019 L1557 1074 L1533 1068 Z"/><path fill="#ece7e0" d="M1506 1067 L1554 1081 L1559 1103 L1522 1099 Z"/><path fill="#e6e2de" d="M1522 1105 L1559 1108 L1559 1131 L1513 1134 Z"/><path fill="#ece7e0" d="M1513 1139 L1559 1136 L1558 1160 L1505 1169 Z"/><path fill="#ece7e0" d="M1505 1173 L1559 1164 L1554 1183 L1516 1187 Z"/><path fill="#f1e5e5" d="M1517 1192 L1554 1188 L1550 1206 L1528 1205 Z"/><path fill="#efdfdf" d="M1524 1213 L1536 1213 L1526 1252 L1503 1252 Z"/><path fill="#f1e5e5" d="M1540 1213 L1552 1213 L1553 1253 L1530 1253 Z"/><path fill="#e8e1e8" d="M1503 1259 L1526 1262 L1537 1300 L1525 1299 Z"/><path fill="#efdfdf" d="M1530 1261 L1552 1262 L1553 1301 L1541 1300 Z"/><path fill="#dddad6" d="M1530 1307 L1550 1307 L1549 1317 L1526 1320 Z"/><path fill="#e6e2de" d="M1526 1324 L1549 1321 L1547 1332 L1522 1338 Z"/><path fill="#e6e2de" d="M1521 1344 L1550 1337 L1549 1374 L1518 1395 Z"/><path fill="#efdfdf" d="M1519 1404 L1533 1393 L1538 1431 L1516 1419 Z"/><path fill="#f1e5e5" d="M1537 1393 L1553 1382 L1566 1443 L1542 1430 Z"/><path fill="#f1e5e5" d="M1515 1426 L1564 1449 L1551 1470 L1506 1489 Z"/><path fill="#efdfdf" d="M1506 1496 L1528 1488 L1540 1533 L1519 1533 Z"/><path fill="#efdfdf" d="M1532 1487 L1555 1478 L1566 1532 L1544 1532 Z"/><path fill="#e6e2de" d="M1522 1541 L1564 1538 L1547 1563 L1507 1559 Z"/><path fill="#efdfdf" d="M1506 1564 L1548 1570 L1554 1605 L1519 1612 Z"/><path fill="#efdfdf" d="M1559 97 L1575 100 L1577 140 L1566 149 Z"/><path fill="#e8e1e8" d="M1578 99 L1594 102 L1591 131 L1581 140 Z"/><path fill="#e6e2de" d="M1568 158 L1578 150 L1583 184 L1566 185 Z"/><path fill="#efdfdf" d="M1582 149 L1593 141 L1604 182 L1587 183 Z"/><path fill="#e8e1e8" d="M1569 192 L1603 189 L1607 216 L1566 211 Z"/><path fill="#e6e2de" d="M1565 215 L1607 221 L1612 248 L1563 234 Z"/><path fill="#e6e2de" d="M1560 239 L1583 247 L1580 274 L1560 275 Z"/><path fill="#f1e5e5" d="M1589 247 L1611 254 L1606 274 L1586 275 Z"/><path fill="#efdfdf" d="M1559 284 L1581 283 L1582 330 L1559 338 Z"/><path fill="#dddad6" d="M1585 283 L1607 282 L1608 321 L1586 330 Z"/><path fill="#ece7e0" d="M1562 343 L1607 328 L1608 348 L1566 352 Z"/><path fill="#e8e1e8" d="M1567 356 L1608 352 L1610 372 L1571 365 Z"/><path fill="#ece7e0" d="M1569 370 L1611 377 L1606 425 L1566 427 Z"/><path fill="#efdfdf" d="M1566 435 L1606 432 L1606 472 L1557 476 Z"/><path fill="#ece7e0" d="M1558 481 L1605 478 L1596 501 L1574 499 Z"/><path fill="#f1e5e5" d="M1572 507 L1597 509 L1598 568 L1565 553 Z"/><path fill="#ece7e0" d="M1564 561 L1596 575 L1588 596 L1560 604 Z"/><path fill="#efdfdf" d="M1561 611 L1589 604 L1595 647 L1570 651 Z"/><path fill="#ece7e0" d="M1572 659 L1596 655 L1610 686 L1572 687 Z"/><path fill="#e6e2de" d="M1570 696 L1589 694 L1579 731 L1568 736 Z"/><path fill="#efdfdf" d="M1592 695 L1611 693 L1593 726 L1582 731 Z"/><path fill="#efdfdf" d="M1570 744 L1590 735 L1592 761 L1561 766 Z"/><path fill="#e6e2de" d="M1562 773 L1593 767 L1595 794 L1553 796 Z"/><path fill="#f1e5e5" d="M1554 800 L1595 798 L1597 816 L1559 812 Z"/><path fill="#e6e2de" d="M1559 816 L1596 820 L1598 837 L1565 827 Z"/><path fill="#efdfdf" d="M1562 833 L1580 839 L1584 875 L1570 877 Z"/><path fill="#d8ecc8" d="M1584 839 L1600 845 L1602 874 L1588 875 Z"/><path fill="#dddad6" d="M1573 884 L1600 881 L1598 895 L1569 908 Z"/><path fill="#efdfdf" d="M1571 913 L1599 900 L1596 915 L1566 938 Z"/><path fill="#f1e5e5" d="M1565 946 L1580 933 L1582 974 L1557 972 Z"/><path fill="#dddad6" d="M1585 933 L1601 920 L1614 976 L1587 973 Z"/><path fill="#e6e2de" d="M1557 978 L1612 982 L1590 1008 L1563 1011 Z"/><path fill="#e8e1e8" d="M1562 1018 L1591 1016 L1608 1063 L1562 1075 Z"/><path fill="#f1e5e5" d="M1564 1080 L1608 1069 L1607 1091 L1566 1090 Z"/><path fill="#efdfdf" d="M1566 1094 L1607 1094 L1607 1116 L1568 1105 Z"/><path fill="#ece7e0" d="M1566 1110 L1607 1122 L1592 1162 L1566 1157 Z"/><path fill="#f1e5e5" d="M1566 1165 L1590 1170 L1591 1191 L1558 1205 Z"/><path fill="#efdfdf" d="M1557 1213 L1574 1206 L1580 1254 L1557 1253 Z"/><path fill="#e6e2de" d="M1578 1206 L1595 1199 L1608 1255 L1584 1254 Z"/><path fill="#efdfdf" d="M1558 1261 L1607 1262 L1594 1290 L1558 1301 Z"/><path fill="#ece7e0" d="M1558 1309 L1574 1303 L1578 1331 L1556 1329 Z"/><path fill="#f1e5e5" d="M1580 1303 L1597 1298 L1607 1333 L1584 1330 Z"/><path fill="#efdfdf" d="M1556 1336 L1607 1339 L1600 1397 L1558 1375 Z"/><path fill="#e6e2de" d="M1557 1381 L1597 1402 L1595 1421 L1565 1411 Z"/><path fill="#dddad6" d="M1564 1416 L1594 1426 L1590 1443 L1572 1444 Z"/><path fill="#dddad6" d="M1572 1452 L1591 1451 L1611 1491 L1560 1471 Z"/><path fill="#ece7e0" d="M1559 1476 L1610 1496 L1593 1514 L1571 1531 Z"/><path fill="#ece7e0" d="M1569 1541 L1580 1531 L1575 1560 L1554 1563 Z"/><path fill="#dddad6" d="M1585 1531 L1595 1522 L1600 1559 L1579 1560 Z"/><path fill="#d8ecc8" d="M1555 1570 L1599 1567 L1612 1617 L1562 1605 Z"/><path fill="#ece7e0" d="M1599 101 L1625 102 L1620 143 L1597 133 Z"/><path fill="#ece7e0" d="M1630 103 L1657 104 L1648 154 L1625 144 Z"/><path fill="#f1e5e5" d="M1596 140 L1619 152 L1621 181 L1608 182 Z"/><path fill="#f1e5e5" d="M1624 152 L1646 161 L1638 180 L1626 181 Z"/><path fill="#e6e2de" d="M1611 189 L1636 188 L1645 210 L1615 215 Z"/><path fill="#efdfdf" d="M1616 221 L1646 216 L1655 239 L1619 247 Z"/><path fill="#ece7e0" d="M1620 252 L1656 243 L1655 267 L1617 263 Z"/><path fill="#ece7e0" d="M1617 267 L1654 271 L1654 295 L1614 278 Z"/><path fill="#f1e5e5" d="M1611 282 L1631 292 L1632 325 L1614 321 Z"/><path fill="#e6e2de" d="M1636 292 L1655 302 L1655 329 L1637 325 Z"/><path fill="#ece7e0" d="M1615 329 L1654 336 L1654 373 L1618 370 Z"/><path fill="#e6e2de" d="M1618 377 L1652 379 L1645 394 L1616 399 Z"/><path fill="#efdfdf" d="M1616 404 L1645 400 L1638 415 L1613 426 Z"/><path fill="#efdfdf" d="M1614 431 L1639 421 L1647 441 L1613 449 Z"/><path fill="#ece7e0" d="M1614 454 L1648 446 L1657 467 L1614 472 Z"/><path fill="#f1e5e5" d="M1614 477 L1657 471 L1645 491 L1609 488 Z"/><path fill="#efdfdf" d="M1609 492 L1645 495 L1634 514 L1605 504 Z"/><path fill="#efdfdf" d="M1601 509 L1617 516 L1629 564 L1602 568 Z"/><path fill="#efdfdf" d="M1621 515 L1637 523 L1660 560 L1633 563 Z"/><path fill="#e6e2de" d="M1603 577 L1628 571 L1618 598 L1595 597 Z"/><path fill="#f1e5e5" d="M1635 573 L1660 567 L1648 600 L1624 599 Z"/><path fill="#e6e2de" d="M1596 602 L1645 606 L1647 628 L1600 623 Z"/><path fill="#f1e5e5" d="M1599 627 L1647 632 L1649 653 L1603 649 Z"/><path fill="#e6e2de" d="M1602 654 L1624 657 L1630 695 L1615 684 Z"/><path fill="#dddad6" d="M1629 657 L1651 660 L1648 705 L1634 694 Z"/><path fill="#dddad6" d="M1615 694 L1629 703 L1625 737 L1597 728 Z"/><path fill="#d8ecc8" d="M1634 704 L1648 714 L1658 748 L1630 738 Z"/><path fill="#f3efc6" d="M1596 734 L1656 754 L1653 793 L1603 793 Z"/><path fill="#e6e2de" d="M1602 801 L1625 800 L1620 833 L1605 836 Z"/><path fill="#efdfdf" d="M1630 801 L1653 800 L1640 831 L1625 834 Z"/><path fill="#dddad6" d="M1605 844 L1620 842 L1621 872 L1606 874 Z"/><path fill="#f1e5e5" d="M1625 842 L1640 840 L1641 869 L1626 871 Z"/><path fill="#dddad6" d="M1607 882 L1622 881 L1629 914 L1604 911 Z"/><path fill="#ece7e0" d="M1627 880 L1643 879 L1659 917 L1634 913 Z"/><path fill="#e6e2de" d="M1605 919 L1659 924 L1656 979 L1619 976 Z"/><path fill="#efdfdf" d="M1617 986 L1634 985 L1619 1004 L1597 1009 Z"/><path fill="#e6e2de" d="M1639 987 L1655 986 L1645 1002 L1624 1006 Z"/><path fill="#ece7e0" d="M1596 1015 L1644 1011 L1639 1066 L1614 1062 Z"/><path fill="#ece7e0" d="M1614 1071 L1625 1073 L1631 1109 L1613 1114 Z"/><path fill="#efdfdf" d="M1629 1072 L1641 1075 L1652 1104 L1635 1109 Z"/><path fill="#e6e2de" d="M1612 1124 L1631 1118 L1621 1153 L1597 1163 Z"/><path fill="#efdfdf" d="M1635 1118 L1653 1112 L1650 1144 L1626 1154 Z"/><path fill="#ece7e0" d="M1599 1169 L1649 1152 L1651 1208 L1600 1192 Z"/><path fill="#f1e5e5" d="M1599 1197 L1650 1215 L1654 1249 L1614 1255 Z"/><path fill="#d8ecc8" d="M1615 1262 L1654 1255 L1648 1280 L1603 1290 Z"/><path fill="#dddad6" d="M1603 1296 L1649 1286 L1641 1335 L1613 1332 Z"/><path fill="#efdfdf" d="M1613 1341 L1640 1343 L1634 1373 L1605 1397 Z"/><path fill="#f1e5e5" d="M1607 1402 L1635 1380 L1646 1407 L1602 1421 Z"/><path fill="#dddad6" d="M1603 1425 L1647 1411 L1658 1438 L1598 1444 Z"/><path fill="#e6e2de" d="M1597 1450 L1626 1447 L1630 1486 L1615 1489 Z"/><path fill="#f1e5e5" d="M1631 1447 L1660 1443 L1650 1481 L1635 1485 Z"/><path fill="#ece7e0" d="M1619 1497 L1648 1489 L1656 1527 L1602 1516 Z"/><path fill="#f3efc6" d="M1601 1520 L1655 1530 L1650 1547 L1604 1539 Z"/><path fill="#efdfdf" d="M1604 1543 L1649 1550 L1644 1566 L1607 1561 Z"/><path fill="#f1e5e5" d="M1606 1566 L1645 1573 L1660 1627 L1619 1616 Z"/></g><path d="M470 470 L1000 500 L1150 600 L1120 720 L900 700 L600 650 L480 620 Z" fill="#f0c8c8" opacity="0.18"/><g stroke="#fefefe" stroke-width="12" fill="none" stroke-linecap="round"><path d="M440 460 C500 420 560 380 600 360"/><path d="M460 620 C600 640 750 680 860 700"/><path d="M880 690 C950 660 1050 620 1150 585"/><path d="M620 640 C700 600 800 580 900 560"/></g><path fill="#a9d1dd" d="M40 830 C70 790 110 745 170 728 C260 712 350 708 440 710 C560 714 650 735 760 765 C880 795 1000 828 1120 866 C1250 915 1380 975 1540 1008 L1540 1092 C1380 1068 1260 1030 1140 985 C1020 940 900 872 780 842 C640 805 520 780 400 777 C300 779 210 795 140 835 C95 870 80 930 72 1000 C68 1050 64 1090 40 1110 Z"/><g stroke="#5d79e0" stroke-width="3" fill="none" stroke-dasharray="16 10" opacity="0.75"><path d="M70 900 C120 800 250 750 440 745 C650 750 850 805 1050 865 C1250 930 1400 1000 1540 1040"/><path d="M80 1000 C100 900 160 820 300 770 C500 735 700 760 900 820"/></g><rect x="1158" y="804" width="130" height="60" fill="#a9d1dd"/><rect x="1321" y="868" width="166" height="26" fill="#a9d1dd"/><rect x="1487" y="818" width="34" height="30" fill="#a9d1dd"/><path d="M50 702 C200 688 350 688 450 705 C600 702 750 712 850 740 C950 770 1050 755 1160 730" fill="none" stroke="#dfb07a" stroke-width="21" stroke-linecap="round" stroke-linejoin="round"/><path d="M50 702 C200 688 350 688 450 705 C600 702 750 712 850 740 C950 770 1050 755 1160 730" fill="none" stroke="#f7d19e" stroke-width="18" stroke-linecap="round" stroke-linejoin="round"/><path d="M445 700 C445 900 448 1100 450 1440" fill="none" stroke="#dfb07a" stroke-width="21" stroke-linecap="round" stroke-linejoin="round"/><path d="M445 700 C445 900 448 1100 450 1440" fill="none" stroke="#f7d19e" stroke-width="18" stroke-linecap="round" stroke-linejoin="round"/><path d="M130 850 C250 838 350 842 440 852 C560 870 680 900 800 880" fill="none" stroke="#dfb07a" stroke-width="21" stroke-linecap="round" stroke-linejoin="round"/><path d="M130 850 C250 838 350 842 440 852 C560 870 680 900 800 880" fill="none" stroke="#f7d19e" stroke-width="18" stroke-linecap="round" stroke-linejoin="round"/><path d="M100 700 C150 800 200 900 260 980 C320 1060 380 1120 440 1160 C500 1200 540 1240 570 1270" fill="none" stroke="#dfb07a" stroke-width="21" stroke-linecap="round" stroke-linejoin="round"/><path d="M100 700 C150 800 200 900 260 980 C320 1060 380 1120 440 1160 C500 1200 540 1240 570 1270" fill="none" stroke="#f7d19e" stroke-width="18" stroke-linecap="round" stroke-linejoin="round"/><path d="M230 945 C300 1000 400 1070 520 1120 C600 1150 660 1180 720 1220" fill="none" stroke="#dfb07a" stroke-width="21" stroke-linecap="round" stroke-linejoin="round"/><path d="M230 945 C300 1000 400 1070 520 1120 C600 1150 660 1180 720 1220" fill="none" stroke="#f7d19e" stroke-width="18" stroke-linecap="round" stroke-linejoin="round"/><path d="M50 1080 C130 1078 200 1090 250 1120 C290 1180 330 1280 370 1440" fill="none" stroke="#dfb07a" stroke-width="21" stroke-linecap="round" stroke-linejoin="round"/><path d="M50 1080 C130 1078 200 1090 250 1120 C290 1180 330 1280 370 1440" fill="none" stroke="#f7d19e" stroke-width="18" stroke-linecap="round" stroke-linejoin="round"/><path d="M440 1160 C560 1130 680 1080 760 1060 C870 1070 950 1120 1050 1150 C1200 1190 1350 1200 1540 1190" fill="none" stroke="#dfb07a" stroke-width="21" stroke-linecap="round" stroke-linejoin="round"/><path d="M440 1160 C560 1130 680 1080 760 1060 C870 1070 950 1120 1050 1150 C1200 1190 1350 1200 1540 1190" fill="none" stroke="#f7d19e" stroke-width="18" stroke-linecap="round" stroke-linejoin="round"/><path d="M720 720 C700 800 670 900 640 1000 C620 1060 610 1100 600 1150" fill="none" stroke="#dfb07a" stroke-width="21" stroke-linecap="round" stroke-linejoin="round"/><path d="M720 720 C700 800 670 900 640 1000 C620 1060 610 1100 600 1150" fill="none" stroke="#f7d19e" stroke-width="18" stroke-linecap="round" stroke-linejoin="round"/><path d="M875 720 C860 800 840 880 810 960 C790 1030 770 1080 760 1120" fill="none" stroke="#dfb07a" stroke-width="21" stroke-linecap="round" stroke-linejoin="round"/><path d="M875 720 C860 800 840 880 810 960 C790 1030 770 1080 760 1120" fill="none" stroke="#f7d19e" stroke-width="18" stroke-linecap="round" stroke-linejoin="round"/><path d="M50 450 C150 440 300 428 400 460 C450 480 490 510 530 520 C650 490 800 455 900 468 C980 490 1050 540 1150 595" fill="none" stroke="#dfb07a" stroke-width="21" stroke-linecap="round" stroke-linejoin="round"/><path d="M50 450 C150 440 300 428 400 460 C450 480 490 510 530 520 C650 490 800 455 900 468 C980 490 1050 540 1150 595" fill="none" stroke="#f7d19e" stroke-width="18" stroke-linecap="round" stroke-linejoin="round"/><path d="M240 305 C400 282 560 262 680 215 C780 180 880 165 1000 150" fill="none" stroke="#dfb07a" stroke-width="21" stroke-linecap="round" stroke-linejoin="round"/><path d="M240 305 C400 282 560 262 680 215 C780 180 880 165 1000 150" fill="none" stroke="#f7d19e" stroke-width="18" stroke-linecap="round" stroke-linejoin="round"/><path d="M560 130 C585 250 605 360 612 410 C612 460 600 500 590 560" fill="none" stroke="#dfb07a" stroke-width="21" stroke-linecap="round" stroke-linejoin="round"/><path d="M560 130 C585 250 605 360 612 410 C612 460 600 500 590 560" fill="none" stroke="#f7d19e" stroke-width="18" stroke-linecap="round" stroke-linejoin="round"/><path d="M850 130 C855 230 850 330 832 460" fill="none" stroke="#dfb07a" stroke-width="21" stroke-linecap="round" stroke-linejoin="round"/><path d="M850 130 C855 230 850 330 832 460" fill="none" stroke="#f7d19e" stroke-width="18" stroke-linecap="round" stroke-linejoin="round"/><path d="M1045 130 C1070 200 1072 240 1060 300 C1045 370 1021 440 976 525 C950 580 925 640 900 700 C880 760 860 820 850 870" fill="none" stroke="#dfb07a" stroke-width="21" stroke-linecap="round" stroke-linejoin="round"/><path d="M1045 130 C1070 200 1072 240 1060 300 C1045 370 1021 440 976 525 C950 580 925 640 900 700 C880 760 860 820 850 870" fill="none" stroke="#f7d19e" stroke-width="18" stroke-linecap="round" stroke-linejoin="round"/><path d="M1090 255 C1200 210 1350 175 1540 150" fill="none" stroke="#dfb07a" stroke-width="21" stroke-linecap="round" stroke-linejoin="round"/><path d="M1090 255 C1200 210 1350 175 1540 150" fill="none" stroke="#f7d19e" stroke-width="18" stroke-linecap="round" stroke-linejoin="round"/><path d="M1385 130 C1400 300 1420 500 1450 700 C1470 780 1490 820 1540 860" fill="none" stroke="#dfb07a" stroke-width="21" stroke-linecap="round" stroke-linejoin="round"/><path d="M1385 130 C1400 300 1420 500 1450 700 C1470 780 1490 820 1540 860" fill="none" stroke="#f7d19e" stroke-width="18" stroke-linecap="round" stroke-linejoin="round"/><path d="M1060 1110 C1150 1135 1300 1160 1540 1165" fill="none" stroke="#dfb07a" stroke-width="21" stroke-linecap="round" stroke-linejoin="round"/><path d="M1060 1110 C1150 1135 1300 1160 1540 1165" fill="none" stroke="#f7d19e" stroke-width="18" stroke-linecap="round" stroke-linejoin="round"/><path d="M300 1160 C240 1250 180 1340 110 1440" fill="none" stroke="#dfb07a" stroke-width="21" stroke-linecap="round" stroke-linejoin="round"/><path d="M300 1160 C240 1250 180 1340 110 1440" fill="none" stroke="#f7d19e" stroke-width="18" stroke-linecap="round" stroke-linejoin="round"/><path d="M140 130 C200 220 230 320 250 420 C270 520 290 600 300 690" fill="none" stroke="#dfb07a" stroke-width="21" stroke-linecap="round" stroke-linejoin="round"/><path d="M140 130 C200 220 230 320 250 420 C270 520 290 600 300 690" fill="none" stroke="#f7d19e" stroke-width="18" stroke-linecap="round" stroke-linejoin="round"/><path d="M60 560 C120 600 180 640 250 650 C330 640 380 600 420 560" fill="none" stroke="#dfb07a" stroke-width="21" stroke-linecap="round" stroke-linejoin="round"/><path d="M60 560 C120 600 180 640 250 650 C330 640 380 600 420 560" fill="none" stroke="#f7d19e" stroke-width="18" stroke-linecap="round" stroke-linejoin="round"/><path d="M700 1060 C720 1150 730 1250 735 1340" fill="none" stroke="#dfb07a" stroke-width="21" stroke-linecap="round" stroke-linejoin="round"/><path d="M700 1060 C720 1150 730 1250 735 1340" fill="none" stroke="#f7d19e" stroke-width="18" stroke-linecap="round" stroke-linejoin="round"/><path d="M900 1000 C980 1080 1060 1180 1120 1280 C1150 1340 1170 1400 1180 1440" fill="none" stroke="#dfb07a" stroke-width="21" stroke-linecap="round" stroke-linejoin="round"/><path d="M900 1000 C980 1080 1060 1180 1120 1280 C1150 1340 1170 1400 1180 1440" fill="none" stroke="#f7d19e" stroke-width="18" stroke-linecap="round" stroke-linejoin="round"/><path d="M1200 1200 C1260 1260 1350 1320 1540 1340" fill="none" stroke="#dfb07a" stroke-width="21" stroke-linecap="round" stroke-linejoin="round"/><path d="M1200 1200 C1260 1260 1350 1320 1540 1340" fill="none" stroke="#f7d19e" stroke-width="18" stroke-linecap="round" stroke-linejoin="round"/><path d="M600 1150 C520 1230 470 1300 430 1440" fill="none" stroke="#dfb07a" stroke-width="21" stroke-linecap="round" stroke-linejoin="round"/><path d="M600 1150 C520 1230 470 1300 430 1440" fill="none" stroke="#f7d19e" stroke-width="18" stroke-linecap="round" stroke-linejoin="round"/><path d="M50 1250 C130 1240 200 1250 260 1260" fill="none" stroke="#dfb07a" stroke-width="21" stroke-linecap="round" stroke-linejoin="round"/><path d="M50 1250 C130 1240 200 1250 260 1260" fill="none" stroke="#f7d19e" stroke-width="18" stroke-linecap="round" stroke-linejoin="round"/><path d="M380 300 C350 240 320 170 300 130" fill="none" stroke="#dfb07a" stroke-width="21" stroke-linecap="round" stroke-linejoin="round"/><path d="M380 300 C350 240 320 170 300 130" fill="none" stroke="#f7d19e" stroke-width="18" stroke-linecap="round" stroke-linejoin="round"/><path d="M1150 595 C1250 610 1350 640 1540 660" fill="none" stroke="#dfb07a" stroke-width="21" stroke-linecap="round" stroke-linejoin="round"/><path d="M1150 595 C1250 610 1350 640 1540 660" fill="none" stroke="#f7d19e" stroke-width="18" stroke-linecap="round" stroke-linejoin="round"/><path d="M622 353 C700 345 800 345 880 353 C910 358 925 365 938 371" fill="none" stroke="#d9d78f" stroke-width="16" stroke-linecap="round" stroke-linejoin="round"/><path d="M622 353 C700 345 800 345 880 353 C910 358 925 365 938 371" fill="none" stroke="#f4f2b4" stroke-width="13" stroke-linecap="round" stroke-linejoin="round"/><path d="M460 140 C475 260 490 340 505 420" fill="none" stroke="#d9d78f" stroke-width="16" stroke-linecap="round" stroke-linejoin="round"/><path d="M460 140 C475 260 490 340 505 420" fill="none" stroke="#f4f2b4" stroke-width="13" stroke-linecap="round" stroke-linejoin="round"/><path d="M775 140 C790 240 805 330 830 420" fill="none" stroke="#d9d78f" stroke-width="16" stroke-linecap="round" stroke-linejoin="round"/><path d="M775 140 C790 240 805 330 830 420" fill="none" stroke="#f4f2b4" stroke-width="13" stroke-linecap="round" stroke-linejoin="round"/><path d="M1200 250 C1215 400 1230 520 1260 650" fill="none" stroke="#d9d78f" stroke-width="16" stroke-linecap="round" stroke-linejoin="round"/><path d="M1200 250 C1215 400 1230 520 1260 650" fill="none" stroke="#f4f2b4" stroke-width="13" stroke-linecap="round" stroke-linejoin="round"/><path d="M1420 300 C1440 450 1460 600 1490 740" fill="none" stroke="#d9d78f" stroke-width="16" stroke-linecap="round" stroke-linejoin="round"/><path d="M1420 300 C1440 450 1460 600 1490 740" fill="none" stroke="#f4f2b4" stroke-width="13" stroke-linecap="round" stroke-linejoin="round"/><path d="M700 1150 C720 1230 730 1300 740 1380" fill="none" stroke="#d9d78f" stroke-width="16" stroke-linecap="round" stroke-linejoin="round"/><path d="M700 1150 C720 1230 730 1300 740 1380" fill="none" stroke="#f4f2b4" stroke-width="13" stroke-linecap="round" stroke-linejoin="round"/><path d="M1100 1240 C1200 1230 1350 1210 1540 1200" fill="none" stroke="#d9d78f" stroke-width="16" stroke-linecap="round" stroke-linejoin="round"/><path d="M1100 1240 C1200 1230 1350 1210 1540 1200" fill="none" stroke="#f4f2b4" stroke-width="13" stroke-linecap="round" stroke-linejoin="round"/><path d="M1000 135 C1060 220 1120 320 1160 430 C1190 520 1220 600 1235 660 C1220 720 1190 790 1150 880 C1110 980 1070 1080 1040 1180 C1010 1250 970 1290 900 1330" fill="none" stroke="#d68a74" stroke-width="25" stroke-linecap="round" stroke-linejoin="round"/><path d="M1000 135 C1060 220 1120 320 1160 430 C1190 520 1220 600 1235 660 C1220 720 1190 790 1150 880 C1110 980 1070 1080 1040 1180 C1010 1250 970 1290 900 1330" fill="none" stroke="#eba48e" stroke-width="22" stroke-linecap="round" stroke-linejoin="round"/><path d="M1210 565 C1300 510 1400 445 1540 395" fill="none" stroke="#d68a74" stroke-width="25" stroke-linecap="round" stroke-linejoin="round"/><path d="M1210 565 C1300 510 1400 445 1540 395" fill="none" stroke="#eba48e" stroke-width="22" stroke-linecap="round" stroke-linejoin="round"/><path d="M1205 555 C1320 560 1430 568 1540 572" fill="none" stroke="#d68a74" stroke-width="25" stroke-linecap="round" stroke-linejoin="round"/><path d="M1205 555 C1320 560 1430 568 1540 572" fill="none" stroke="#eba48e" stroke-width="22" stroke-linecap="round" stroke-linejoin="round"/><path d="M1165 765 C1300 772 1420 760 1540 745" fill="none" stroke="#d68a74" stroke-width="25" stroke-linecap="round" stroke-linejoin="round"/><path d="M1165 765 C1300 772 1420 760 1540 745" fill="none" stroke="#eba48e" stroke-width="22" stroke-linecap="round" stroke-linejoin="round"/><path d="M500 1312 C650 1318 800 1322 870 1330 C920 1350 950 1390 970 1440" fill="none" stroke="#d68a74" stroke-width="25" stroke-linecap="round" stroke-linejoin="round"/><path d="M500 1312 C650 1318 800 1322 870 1330 C920 1350 950 1390 970 1440" fill="none" stroke="#eba48e" stroke-width="22" stroke-linecap="round" stroke-linejoin="round"/><path d="M830 135 C900 150 960 150 1000 140" fill="none" stroke="#d68a74" stroke-width="25" stroke-linecap="round" stroke-linejoin="round"/><path d="M830 135 C900 150 960 150 1000 140" fill="none" stroke="#eba48e" stroke-width="22" stroke-linecap="round" stroke-linejoin="round"/><path d="M50 868 C150 910 200 940 260 962 C360 966 450 962 560 960 C660 955 740 925 830 892 C880 890 920 920 960 965 C1050 1040 1150 1120 1250 1200 C1350 1280 1450 1360 1540 1420" fill="none" stroke="#646464" stroke-width="20" stroke-linecap="round" stroke-linejoin="round"/><path d="M50 868 C150 910 200 940 260 962 C360 966 450 962 560 960 C660 955 740 925 830 892 C880 890 920 920 960 965 C1050 1040 1150 1120 1250 1200 C1350 1280 1450 1360 1540 1420" fill="none" stroke="#a8a8a8" stroke-width="6.0" stroke-dasharray="12 8"/><path d="M470 720 C470 820 480 900 500 960 C530 1060 560 1180 585 1300 C592 1360 592 1400 592 1440" fill="none" stroke="#646464" stroke-width="20" stroke-linecap="round" stroke-linejoin="round"/><path d="M470 720 C470 820 480 900 500 960 C530 1060 560 1180 585 1300 C592 1360 592 1400 592 1440" fill="none" stroke="#a8a8a8" stroke-width="6.0" stroke-dasharray="12 8"/><path d="M770 718 C745 780 735 840 745 875 C755 895 775 905 800 900" fill="none" stroke="#646464" stroke-width="20" stroke-linecap="round" stroke-linejoin="round"/><path d="M770 718 C745 780 735 840 745 875 C755 895 775 905 800 900" fill="none" stroke="#a8a8a8" stroke-width="6.0" stroke-dasharray="12 8"/><path d="M255 1005 C215 1050 198 1140 210 1230 C215 1300 180 1360 110 1440" fill="none" stroke="#646464" stroke-width="20" stroke-linecap="round" stroke-linejoin="round"/><path d="M255 1005 C215 1050 198 1140 210 1230 C215 1300 180 1360 110 1440" fill="none" stroke="#a8a8a8" stroke-width="6.0" stroke-dasharray="12 8"/><path d="M1045 130 C1048 190 1060 230 1090 245 C1200 245 1350 232 1540 222" fill="none" stroke="#646464" stroke-width="20" stroke-linecap="round" stroke-linejoin="round"/><path d="M1045 130 C1048 190 1060 230 1090 245 C1200 245 1350 232 1540 222" fill="none" stroke="#a8a8a8" stroke-width="6.0" stroke-dasharray="12 8"/><path d="M1210 250 C1280 262 1330 275 1375 285" fill="none" stroke="#646464" stroke-width="20" stroke-linecap="round" stroke-linejoin="round"/><path d="M1210 250 C1280 262 1330 275 1375 285" fill="none" stroke="#a8a8a8" stroke-width="6.0" stroke-dasharray="12 8"/><path d="M1075 692 C1120 710 1160 718 1220 712 C1320 702 1420 690 1540 680" fill="none" stroke="#646464" stroke-width="20" stroke-linecap="round" stroke-linejoin="round"/><path d="M1075 692 C1120 710 1160 718 1220 712 C1320 702 1420 690 1540 680" fill="none" stroke="#a8a8a8" stroke-width="6.0" stroke-dasharray="12 8"/><path d="M420 320 C440 350 455 370 470 390" fill="none" stroke="#646464" stroke-width="20" stroke-linecap="round" stroke-linejoin="round"/><path d="M420 320 C440 350 455 370 470 390" fill="none" stroke="#a8a8a8" stroke-width="6.0" stroke-dasharray="12 8"/><path d="M880 930 C930 990 980 1020 1000 1050" fill="none" stroke="#646464" stroke-width="20" stroke-linecap="round" stroke-linejoin="round"/><path d="M880 930 C930 990 980 1020 1000 1050" fill="none" stroke="#a8a8a8" stroke-width="6.0" stroke-dasharray="12 8"/><path d="M950 475 C985 420 1015 360 1055 295" fill="none" stroke="#646464" stroke-width="30" stroke-linecap="round" stroke-linejoin="round"/><path d="M950 475 C985 420 1015 360 1055 295" fill="none" stroke="#a8a8a8" stroke-width="9.0" stroke-dasharray="12 8"/><path d="M640 370 C700 390 780 425 880 465" fill="none" stroke="#5e5e5e" stroke-width="14" stroke-dasharray="34 10"/><g stroke="#6e6e6e" stroke-width="8" fill="none" stroke-dasharray="30 14" opacity="0.8"><path d="M1100 340 C1200 355 1350 365 1540 372"/><path d="M220 130 C240 160 260 190 280 210"/></g><g fill="#7880b0"><rect x="446" y="366" width="24" height="24"/><rect x="458" y="528" width="24" height="24"/><rect x="863" y="448" width="24" height="24"/><rect x="466" y="715" width="24" height="24"/><rect x="758" y="706" width="24" height="24"/><rect x="1133" y="235" width="24" height="24"/><rect x="1483" y="210" width="24" height="24"/><rect x="1065" y="680" width="24" height="24"/><rect x="1145" y="705" width="24" height="24"/><rect x="350" y="946" width="24" height="24"/><rect x="243" y="996" width="24" height="24"/><rect x="886" y="923" width="24" height="24"/></g><g font-family="Liberation Sans, sans-serif" fill="#3a3a3a" stroke="#f1eeea" stroke-width="5" paint-order="stroke" letter-spacing="-0.5"><text x="295" y="248" font-size="50">Clerkenwell</text><text x="658" y="318" font-size="50">Finsbury</text><text x="230" y="400" font-size="50">born</text><text x="550" y="555" font-size="56">City of London</text><text x="1205" y="480" font-size="50">Whitechapel</text><text x="58" y="695" font-size="50">arden</text><text x="1335" y="868" font-size="50">Wapping</text><text x="158" y="1075" font-size="50">Waterloo</text><text x="553" y="1048" font-size="50">The Borough</text><text x="1268" y="1245" font-size="50">Bermondsey</text><text x="75" y="1310" font-size="50">Lambeth</text><text x="398" y="1288" font-size="50">Elephant and</text><text x="478" y="1350" font-size="50">Castle</text><text x="900" y="140" font-size="50">Shoreditch</text></g><text x="1215" y="975" transform="rotate(18 1215 975)" font-family="Liberation Sans, sans-serif" font-style="italic" font-size="40" fill="#5a6fc0" letter-spacing="1">River Thames</text><rect x="888" y="1230" width="132" height="65" rx="6" fill="#f3ddd0" stroke="#d9a58f" stroke-width="3"/><text x="906" y="1278" font-family="Liberation Sans, sans-serif" font-size="40" fill="#3a3a3a">A100</text></svg>
<div style="position:absolute;left:650px;top:866px;width:68px;height:128px;box-sizing:border-box;border:4px solid rgba(0,0,0,0.22);border-radius:8px;background:#fff;background-clip:padding-box"></div>
<div style="position:absolute;left:654px;top:928px;width:60px;height:2px;background:#cfcfcf"></div>
<svg style="position:absolute;left:656px;top:870px" width="58" height="118" viewBox="0 0 58 118"><rect x="16.5" y="32" width="25" height="5" fill="#000"/><rect x="26.5" y="22" width="5" height="25" fill="#000"/><rect x="16.5" y="91" width="25" height="5" fill="#000"/></svg>
<svg style="position:absolute;left:626px;top:842px" width="736" height="652"><g stroke="#3a7df5" stroke-width="4" stroke-dasharray="8 4" fill="none"><line x1="0" y1="2" x2="736" y2="2"/><line x1="2" y1="0" x2="2" y2="652"/><line x1="734" y1="0" x2="734" y2="652"/></g></svg>
<div style="position:absolute;left:2149px;top:100px;width:2px;height:1390px;background:#e5e8ec"></div>
<div class="t" style="left:2205px;top:118.3px;font-size:28px;font-weight:700;color:#3e4b5b;letter-spacing:0.0px;">Page</div>
<div class="t" style="left:2345px;top:118.3px;font-size:28px;font-weight:700;color:#3a7df5;letter-spacing:0.3px;">Component</div>
<div class="t" style="left:2564px;top:118.3px;font-size:28px;font-weight:700;color:#3e4b5b;letter-spacing:0.6px;">Theme</div>
<div style="position:absolute;left:2151px;top:165px;width:549px;height:2px;background:#e5e8ec"></div>
<div style="position:absolute;left:2329px;top:161px;width:192px;height:4px;background:#3a7df5"></div>
<div class="t" style="left:2190px;top:213.7px;font-size:37px;font-weight:400;color:#1a2027;letter-spacing:-0.05px;">Component: Data Grid</div>
<div style="position:absolute;left:2192px;top:292px;width:467px;height:78px;box-sizing:border-box;border:2px solid #c4c4c4;border-radius:20px"></div>
<div style="position:absolute;left:2209px;top:285px;width:149px;height:14px;background:#fff"></div>
<div class="t" style="left:2219px;top:279.5px;font-size:23px;font-weight:400;color:#3e5060;letter-spacing:0.5px;">Node name</div>
<div class="t" style="left:2219px;top:315.9px;font-size:32px;font-weight:400;color:#1a2027;letter-spacing:0.25px;">dataGrid</div>
<div style="position:absolute;left:2191px;top:419px;width:468px;height:2px;background:#eef0f2"></div>
<div class="t" style="left:2191px;top:461.2px;font-size:24px;font-weight:400;color:#1a2027;letter-spacing:-0.9px;">PROPERTIES:</div>
<div style="position:absolute;left:2191px;top:518px;width:393px;height:69px;box-sizing:border-box;border:2px solid #1a2027;border-radius:20px"></div>
<div class="t" style="left:1987px;width:800px;text-align:center;top:538.6px;font-size:27px;font-weight:700;color:#1a2027;letter-spacing:0.0px;">rows</div>
<svg style="position:absolute;left:2602px;top:533.3px;" width="40" height="40" viewBox="0 0 24 24" preserveAspectRatio="none"><path fill="#3a7df5" d="M3.9 12c0-1.71 1.39-3.1 3.1-3.1h4V7H7c-2.76 0-5 2.24-5 5s2.24 5 5 5h4v-1.9H7c-1.71 0-3.1-1.39-3.1-3.1zM8 13h8v-2H8v2zm9-6h-4v1.9h4c1.71 0 3.1 1.39 3.1 3.1s-1.39 3.1-3.1 3.1h-4V17h4c2.76 0 5-2.24 5-5s-2.24-5-5-5z"/></svg>
<div class="t" style="left:2211px;top:637.0px;font-size:26px;font-weight:700;color:#3a7df5;letter-spacing:0.0px;">columns</div>
<div style="position:absolute;left:2191px;top:724px;width:393px;height:78px;box-sizing:border-box;border:2px solid #c4c4c4;border-radius:20px"></div>
<div class="t" style="left:2218px;top:748.9px;font-size:32px;font-weight:400;color:#3e5060;letter-spacing:0.2px;">Id field</div>
<svg style="position:absolute;left:2534px;top:748px;" width="32" height="32" viewBox="0 0 24 24" preserveAspectRatio="none"><path fill="#6e6e6e" d="M7 10l5 5 5-5z"/></svg>
<svg style="position:absolute;left:2602px;top:738.3px;" width="40" height="40" viewBox="0 0 24 24" preserveAspectRatio="none"><path fill="#3e5060" d="M8 11h8v2H8zm12.1 1H22c0-2.76-2.24-5-5-5h-4v1.9h4c1.71 0 3.1 1.39 3.1 3.1zM3.9 12c0-1.71 1.39-3.1 3.1-3.1h4V7H7c-2.76 0-5 2.24-5 5s2.24 5 5 5h4v-1.9H7c-1.71 0-3.1-1.39-3.1-3.1zM19 12h-2v3h-3v2h3v3h2v-3h3v-2h-3z"/></svg>
<div style="position:absolute;left:2191px;top:835px;width:393px;height:69px;box-sizing:border-box;border:2px solid #1a2027;border-radius:20px"></div>
<div class="t" style="left:1987px;width:800px;text-align:center;top:856.6px;font-size:27px;font-weight:700;color:#1a2027;letter-spacing:0.0px;">selection</div>
<div style="position:absolute;left:2191px;top:943px;width:393px;height:79px;box-sizing:border-box;border:2px solid #c4c4c4;border-radius:20px"></div>
<div style="position:absolute;left:2209px;top:935px;width:102px;height:14px;background:#fff"></div>
<div class="t" style="left:2220px;top:932.0px;font-size:23px;font-weight:400;color:#3e5060;letter-spacing:0.8px;">density</div>
<div class="t" style="left:2219px;top:968.4px;font-size:32px;font-weight:400;color:#1a2027;letter-spacing:0.8px;">compact</div>
<svg style="position:absolute;left:2534px;top:968px;" width="32" height="32" viewBox="0 0 24 24" preserveAspectRatio="none"><path fill="#6e6e6e" d="M7 10l5 5 5-5z"/></svg>
<svg style="position:absolute;left:2602px;top:960px;" width="40" height="40" viewBox="0 0 24 24" preserveAspectRatio="none"><path fill="#3e5060" d="M8 11h8v2H8zm12.1 1H22c0-2.76-2.24-5-5-5h-4v1.9h4c1.71 0 3.1 1.39 3.1 3.1zM3.9 12c0-1.71 1.39-3.1 3.1-3.1h4V7H7c-2.76 0-5 2.24-5 5s2.24 5 5 5h4v-1.9H7c-1.71 0-3.1-1.39-3.1-3.1zM19 12h-2v3h-3v2h3v3h2v-3h3v-2h-3z"/></svg>
<div style="position:absolute;left:2192px;top:1074px;width:30px;height:30px;box-sizing:border-box;border:3px solid #3e4a59;border-radius:3px"></div>
<div class="t" style="left:2246px;top:1073.9px;font-size:32px;font-weight:400;color:#1a2027;letter-spacing:0px;">loading</div>
<svg style="position:absolute;left:2602px;top:1069.3px;" width="40" height="40" viewBox="0 0 24 24" preserveAspectRatio="none"><path fill="#3e5060" d="M8 11h8v2H8zm12.1 1H22c0-2.76-2.24-5-5-5h-4v1.9h4c1.71 0 3.1 1.39 3.1 3.1zM3.9 12c0-1.71 1.39-3.1 3.1-3.1h4V7H7c-2.76 0-5 2.24-5 5s2.24 5 5 5h4v-1.9H7c-1.71 0-3.1-1.39-3.1-3.1zM19 12h-2v3h-3v2h3v3h2v-3h3v-2h-3z"/></svg>
<div style="position:absolute;left:2192px;top:1170px;width:30px;height:30px;box-sizing:border-box;border:3px solid #3e4a59;border-radius:3px"></div>
<div class="t" style="left:2246px;top:1169.9px;font-size:32px;font-weight:400;color:#1a2027;letter-spacing:0px;">hideToolbar</div>
<svg style="position:absolute;left:2602px;top:1165.3px;" width="40" height="40" viewBox="0 0 24 24" preserveAspectRatio="none"><path fill="#3e5060" d="M8 11h8v2H8zm12.1 1H22c0-2.76-2.24-5-5-5h-4v1.9h4c1.71 0 3.1 1.39 3.1 3.1zM3.9 12c0-1.71 1.39-3.1 3.1-3.1h4V7H7c-2.76 0-5 2.24-5 5s2.24 5 5 5h4v-1.9H7c-1.71 0-3.1-1.39-3.1-3.1zM19 12h-2v3h-3v2h3v3h2v-3h3v-2h-3z"/></svg>
<div style="position:absolute;left:2191px;top:1246px;width:393px;height:69px;box-sizing:border-box;border:2px solid #1a2027;border-radius:20px"></div>
<div class="t" style="left:1987px;width:800px;text-align:center;top:1267.6px;font-size:27px;font-weight:700;color:#1a2027;letter-spacing:0.0px;">sx</div>
<svg style="position:absolute;left:2602px;top:1261px;" width="40" height="40" viewBox="0 0 24 24" preserveAspectRatio="none"><path fill="#3e5060" d="M8 11h8v2H8zm12.1 1H22c0-2.76-2.24-5-5-5h-4v1.9h4c1.71 0 3.1 1.39 3.1 3.1zM3.9 12c0-1.71 1.39-3.1 3.1-3.1h4V7H7c-2.76 0-5 2.24-5 5s2.24 5 5 5h4v-1.9H7c-1.71 0-3.1-1.39-3.1-3.1zM19 12h-2v3h-3v2h3v3h2v-3h3v-2h-3z"/></svg>
<div class="t" style="left:2025px;width:800px;text-align:center;top:1396.7px;font-size:50px;font-weight:700;color:#e84e3c;letter-spacing:-0.05px;">Inspector panel</div>
<div style="position:absolute;left:2156px;top:103px;width:540px;height:1385px;box-sizing:border-box;border:3px solid #e8361c"></div>
<div style="position:absolute;left:0px;top:2px;width:60px;height:1492px;background:linear-gradient(to right, rgba(0,0,0,0.06), rgba(0,0,0,0.025) 25px, rgba(0,0,0,0) 60px)"></div>
<div style="position:absolute;left:0;top:-100px;width:2700px;height:1594px;border-radius:0 0 24px 24px;box-shadow:0 0 0 60px #151515;pointer-events:none"></div>
<div style="position:absolute;left:5px;top:591px;width:496px;height:899px;box-sizing:border-box;border:3px solid #e8361c"></div>
<div style="position:absolute;left:2156px;top:103px;width:540px;height:1385px;box-sizing:border-box;border:3px solid #e8361c"></div>
</body></html>
